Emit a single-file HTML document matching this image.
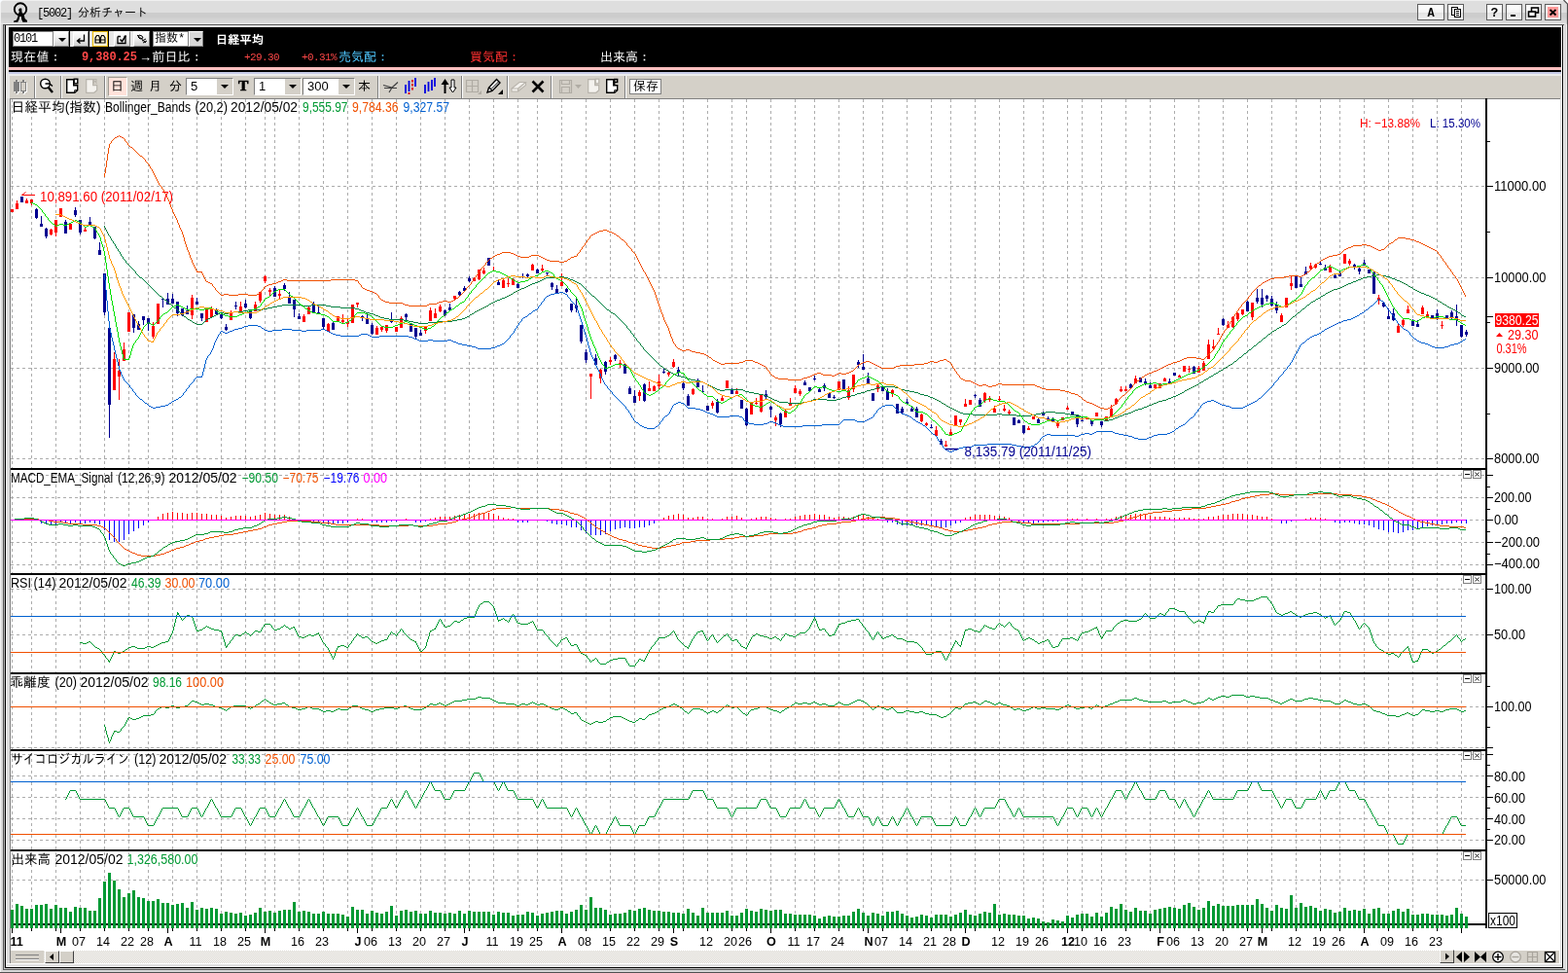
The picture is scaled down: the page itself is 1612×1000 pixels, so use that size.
<!DOCTYPE html>
<html lang="ja">
<head>
<meta charset="utf-8">
<title>[5002] 分析チャート</title>
<style>
*{box-sizing:border-box;margin:0;padding:0}
html,body{width:1612px;height:1000px;overflow:hidden;background:#d4d0c8}
body{position:relative;will-change:transform;font-family:"Liberation Sans","IPAGothic",sans-serif;font-size:12px;color:#000}
.abs{position:absolute}
#titlebar{left:0;top:0;width:1612px;height:25px;background:linear-gradient(#efefef 0,#efefef 1px,#dedede 1px,#dedede 13px,#cccccc 13px,#cccccc 17px,#dcdcdc 24px,#e8e8e8 24px,#e8e8e8 25px)}
#title{left:38px;top:7px;font-family:"Liberation Mono","IPAGothic",monospace;font-size:12px;letter-spacing:-1.2px;white-space:pre;line-height:14px}
#title span{letter-spacing:0}
.tb{top:4px;height:17px;width:17px;border:1px solid #5c5c5c;background:linear-gradient(#fff 0,#f4f4f4 50%,#e2e2e2 51%,#f0f0f0 100%);text-align:center;font-weight:bold;font-size:12px;line-height:15px;font-family:"Liberation Mono",monospace}
#frameL{left:0;top:25px;width:11px;height:975px;background:linear-gradient(90deg,#f0f0f0 0,#f0f0f0 1px,#d8d8d8 1px,#d8d8d8 3px,#555 3px,#555 4px,#b0b0b0 4px,#b0b0b0 5px,#000 5px,#000 6px,#f0f0f0 6px,#f0f0f0 7px,#dcdcdc 7px,#dcdcdc 10px,#808080 10px,#808080 11px)}
#frameR{left:1603px;top:25px;width:9px;height:975px;background:linear-gradient(90deg,#fff 0,#fff 1px,#e0e0e0 1px,#e0e0e0 2px,#fff 2px,#fff 3px,#000 3px,#000 4px,#f4f4f4 4px,#f4f4f4 5px,#d8d8d8 5px,#d8d8d8 7px,#f4f4f4 7px,#f4f4f4 8px,#585858 8px)}
#topline{left:3px;top:25px;width:1605px;height:1px;background:#555}
#topwhite{left:6px;top:26px;width:1600px;height:2px;background:#f2f2f2}
#black{left:9px;top:28px;width:1596px;height:46px;background:#000}
#pink{left:9px;top:69px;width:1596px;height:3px;background:#ffc0c0}
#blueline{left:9px;top:74px;width:1596px;height:4px;background:linear-gradient(#c8cce8 0,#c8cce8 2px,#ececec 2px)}
#toolbar{left:10px;top:78px;width:1595px;height:23px;background:#d4d0c8}
#chartbg{left:11px;top:102px;width:1592px;height:875px;background:#fff}
.hw{color:#fff;font-family:"Liberation Sans","IPAGothic",sans-serif;font-size:13px;line-height:14px;white-space:pre}
.inp{background:#fff;border:1px solid #808080;font-family:"Liberation Mono","IPAGothic",monospace;font-size:12px;line-height:14px;white-space:pre;overflow:hidden}
.btn{background:linear-gradient(#fff,#e8e8e8 60%,#d0d0d0);border:1px solid #fff;border-right-color:#808080;border-bottom-color:#808080}
.sepw{background:#e8e8e8;top:32px;height:16px;width:3px}
.tsep{top:78px;height:23px;width:2px;border-left:1px solid #808080;border-right:1px solid #fff}
.tj{top:81px;font-size:13px;line-height:16px;font-family:"Liberation Sans","IPAGothic",sans-serif}
.combo{top:80px;height:18px;background:#fff;border:1px solid #808080;border-right-color:#fff;border-bottom-color:#fff;font-size:13px;line-height:16px;padding-left:4px;font-family:"Liberation Sans",sans-serif}
.combo i{position:absolute;right:0;top:0;width:16px;height:16px;background:#d4d0c8}
.combo i:after,.dd:after{content:"";position:absolute;left:4px;top:6px;border:4px solid transparent;border-top:4px solid #000;border-bottom:0}
svg{position:absolute;left:0;top:0}
</style>
</head>
<body>
<div id="titlebar" class="abs"></div>
<svg class="abs" style="left:8px;top:0" width="30" height="26" viewBox="0 0 30 26"><circle cx="13" cy="9.500" r="6.200" fill="none" stroke="#000" stroke-width="1.900"/><path d="M12.100 8.500L14.300 8.500L14.500 12.500L16.600 15L17.600 19L19.900 21L19.900 22.800L15.400 22.800L14.200 20L13.700 16.800L12.400 16.800L11.600 20L10.300 22.800L5.900 22.800L6.200 21.600L9 20.500L10.400 17L10.700 14.500L11.900 12L11 10.200Z" fill="#000"/></svg>
<div id="title" class="abs">[5002] <span>分析チャート</span></div>
<div class="abs tb" style="left:1457px;width:28px;line-height:18px">A</div>
<div class="abs tb" style="left:1488px"><svg width="15" height="15" viewBox="0 0 15 15"><rect x="3.5" y="2.5" width="6" height="8" fill="#fff" stroke="#000"/><rect x="6.5" y="4.5" width="6" height="8" fill="#fff" stroke="#000"/><path d="M8 6.500h3M8 8.500h3M8 10.500h3" stroke="#000" shape-rendering="crispEdges"/></svg></div>
<div class="abs tb" style="left:1528px;line-height:18px;font-size:13px">?</div>
<div class="abs tb" style="left:1548px"><i style="position:absolute;left:4px;top:10px;width:5px;height:2px;background:#000"></i></div>
<div class="abs tb" style="left:1568px"><svg width="15" height="15" viewBox="0 0 15 15"><rect x="5.5" y="3" width="7" height="5" fill="none" stroke="#000" stroke-width="1.6"/><rect x="2.5" y="7" width="7" height="5" fill="#f4f4f4" stroke="#000" stroke-width="1.6"/></svg></div>
<div class="abs tb" style="left:1588px"><svg width="15" height="15" viewBox="0 0 15 15"><rect x="2" y="2" width="11" height="11" fill="#ff9a9a"/><path d="M4.5 5l6 5.5M10.5 5l-6 5.5" stroke="#000" stroke-width="1.8"/></svg></div>
<svg class="abs" style="left:0;top:0" width="1612" height="26" viewBox="0 0 1612 26"><rect x="0" y="0" width="1" height="26" fill="#f0f0f0"/><path d="M0 0h3l-3 3z" fill="#f8fbff"/><path d="M1608 0h4v4z" fill="#fff"/><path d="M1607.500 0L1611.500 4V26" fill="none" stroke="#505050" stroke-width="1.200"/></svg>
<div id="frameL" class="abs"></div>
<div id="frameR" class="abs"></div>
<div id="topline" class="abs"></div>
<div id="topwhite" class="abs"></div>
<div class="abs" style="left:6px;top:28px;width:4px;height:73px;background:#e8e8e8"></div>
<div class="abs" style="left:10px;top:101px;width:1594px;height:1px;background:#808080"></div>
<div id="black" class="abs"></div>
<div id="pink" class="abs"></div>
<div id="blueline" class="abs"></div>
<div id="toolbar" class="abs"></div>
<div id="chartbg" class="abs"></div>
<div class="abs inp" style="left:13px;top:32px;width:42px;height:16px;padding-left:0;letter-spacing:-1.2px">0101</div>
<div class="abs btn dd" style="left:55px;top:32px;width:16px;height:16px"></div>
<div class="abs sepw" style="left:72px"></div>
<div class="abs btn" style="left:75px;top:32px;width:16px;height:16px"><svg width="14" height="14" viewBox="0 0 14 14"><path d="M10.5 2.5v6.5h-6M6.5 6.5l-3 2.5l3 2.500" fill="none" stroke="#000" stroke-width="1.3"/></svg></div>
<div class="abs sepw" style="left:92px"></div>
<div class="abs" style="left:95px;top:32px;width:16px;height:16px;background:#fff6d8;border:1px solid #e8b800"><svg width="14" height="14" viewBox="0 0 14 14"><path d="M2 11V6l1.500-2.500h2L6.500 6v5zM7.500 11V6l1-2.500h2L12 6v5z" fill="none" stroke="#000" stroke-width="1.200"/><path d="M2 8h4.500M7.500 8H12" stroke="#000"/></svg></div>
<div class="abs sepw" style="left:112px;width:5px"></div>
<div class="abs btn" style="left:117px;top:32px;width:17px;height:16px"><svg width="15" height="14" viewBox="0 0 15 14"><path d="M3 4.500h3M3 4.500v7h8v-7h-1.500" fill="none" stroke="#000" stroke-width="1.300"/><path d="M5.500 7.500l2 2l4-6" fill="none" stroke="#000" stroke-width="1.500"/></svg></div>
<div class="abs sepw" style="left:134px"></div>
<div class="abs btn" style="left:137px;top:32px;width:17px;height:16px"><svg width="15" height="14" viewBox="0 0 15 14"><path d="M3 3l9 8M5 3l3 1l1 2l-3 1l-2-2zM8 9l4-2M9 11l4-2" fill="none" stroke="#000" stroke-width="1"/></svg></div>
<div class="abs inp" style="left:157px;top:32px;width:37px;height:16px;padding-left:1px;font-size:12px">指数*</div>
<div class="abs btn dd" style="left:194px;top:32px;width:15px;height:16px;background:#d8d8d8"></div>
<div class="abs hw" style="left:222px;top:34px;font-weight:bold;font-size:12px;letter-spacing:0.3px">日経平均</div>
<div class="abs hw" style="left:11px;top:52px;letter-spacing:0.2px">現在値：</div>
<div class="abs hw" style="left:84px;top:52px;color:#ff4848;font-weight:bold;font-family:'Liberation Mono',monospace;font-size:12px;letter-spacing:-0.1px">9,380.25</div>
<div class="abs hw" style="left:143px;top:52px;letter-spacing:0.2px">→前日比：</div>
<div class="abs hw" style="left:251px;top:52px;color:#ff4848;font-family:'Liberation Mono',monospace;font-size:11px;letter-spacing:-0.6px">+29.30</div>
<div class="abs hw" style="left:310px;top:52px;color:#ff4848;font-family:'Liberation Mono',monospace;font-size:11px;letter-spacing:-0.6px">+0.31%</div>
<div class="abs hw" style="left:348px;top:52px;color:#50c8ff">売気配：</div>
<div class="abs hw" style="left:483px;top:52px;color:#ff3030">買気配：</div>
<div class="abs hw" style="left:617px;top:52px">出来高：</div>

<svg class="abs" style="left:13px;top:80px" width="18" height="18" viewBox="0 0 18 18" shape-rendering="crispEdges"><rect x="4" y="3" width="2" height="14" fill="#fff"/><rect x="11" y="3" width="2" height="14" fill="#fff"/><rect x="2" y="5" width="6" height="10" fill="#fff"/><rect x="9" y="5" width="6" height="10" fill="#fff"/><rect x="3" y="2" width="2" height="14" fill="#808080"/><rect x="10" y="2" width="2" height="14" fill="#808080"/><rect x="1" y="4" width="6" height="10" fill="#808080"/><rect x="8" y="4" width="6" height="10" fill="#808080"/><rect x="9" y="5" width="4" height="8" fill="#d4d0c8"/></svg>
<div class="abs tsep" style="left:35px"></div>
<svg class="abs" style="left:40px;top:79px" width="17" height="19" viewBox="0 0 17 19"><circle cx="6.500" cy="7" r="4.800" fill="#fff" stroke="#000" stroke-width="1.400"/><path d="M6.500 7h4.500l3 2.500" fill="none" stroke="#000" stroke-width="1.300"/><path d="M9.500 10.500l4.500 5.500" stroke="#000" stroke-width="2.400"/></svg>
<div class="abs tsep" style="left:62px"></div>
<svg class="abs" style="left:67px;top:80px" width="15" height="17" viewBox="0 0 15 17"><path d="M1.700 1.700h7v6h4v5l-3 2.600h-8z" fill="#fff" stroke="#000" stroke-width="1.400"/><rect x="9.200" y="1.200" width="3.600" height="4.600" fill="#fff" stroke="#000" stroke-width="1.400"/><path d="M9.700 15.300v-2.600h3" fill="none" stroke="#000"/></svg>
<svg class="abs" style="left:87px;top:80px" width="15" height="17" viewBox="0 0 15 17"><path d="M1.700 1.700h7v6h4v5l-3 2.600h-8z" fill="#f4f2ee" stroke="#b8b4ac" stroke-width="1.200"/><path d="M9.500 6V1.500h2.500v2h-2.500M11 3.500l1.500 2.500" fill="none" stroke="#b8b4ac" stroke-width="1.100"/></svg>
<div class="abs tsep" style="left:107px"></div>
<div class="abs" style="left:111px;top:79px;width:20px;height:20px;background:#ffe2da;border:1px solid #fff;border-left-color:#a09c94;border-top-color:#a09c94"></div>
<div class="abs tj" style="left:114px">日</div>
<div class="abs tj" style="left:134px">週</div>
<div class="abs tj" style="left:153px">月</div>
<div class="abs tj" style="left:174px">分</div>
<div class="abs combo" style="left:191px;width:49px">5<i></i></div>
<div class="abs" style="left:245px;top:77px;font-family:'Liberation Serif',serif;font-weight:bold;font-size:15.5px;line-height:22px;-webkit-text-stroke:0.7px #000">T</div>
<div class="abs combo" style="left:261px;width:49px">1<i></i></div>
<div class="abs combo" style="left:311px;width:54px">300<i></i></div>
<div class="abs tj" style="left:368px">本</div>
<div class="abs tsep" style="left:388px"></div>
<svg class="abs" style="left:393px;top:80px" width="18" height="17" viewBox="0 0 18 17"><path d="M1 7.500l9 2.500l6-5.500M2 10.500h13M10 10l-3 5" fill="none" stroke="#404040" stroke-width="1.200"/></svg>
<svg class="abs" style="left:415px;top:79px" width="14" height="19" viewBox="0 0 14 19"><path d="M2 8v9M5.500 4v11M12 1v9" stroke="#0000e0" stroke-width="1.800"/><path d="M9 3v11" stroke="#e00000" stroke-width="1.800" stroke-dasharray="2.500 1.500"/><path d="M5.500 16v2" stroke="#e00000" stroke-width="1.800"/></svg>
<svg class="abs" style="left:435px;top:79px" width="14" height="19" viewBox="0 0 14 19"><path d="M2 8v9M5.500 5v10M9 3v11M12 1v9" stroke="#0000e0" stroke-width="1.800"/></svg>
<svg class="abs" style="left:453px;top:79px" width="17" height="19" viewBox="0 0 17 19"><path d="M4.500 17V5" stroke="#000" stroke-width="2"/><path d="M0.500 8l4-6l4 6z" fill="#000"/><path d="M11 3h3v8h2l-3.500 5l-3.500-5h2z" fill="#fff" stroke="#000" stroke-width="1"/></svg>
<div class="abs tsep" style="left:474px"></div>
<svg class="abs" style="left:478px;top:81px" width="18" height="17" viewBox="0 0 18 17"><path d="M1.500 1.500h12v12h-12zM7.500 1.500v12M1.500 7.500h12" fill="none" stroke="#b0aca4" stroke-width="1.200"/><path d="M17 12v4h-4z" fill="#b0aca4"/></svg>
<svg class="abs" style="left:499px;top:79px" width="19" height="19" viewBox="0 0 19 19"><path d="M2 16l1.500-5l8-8.500l3.500 3.500l-8 8.500zM4 11l3 3" fill="#fff" stroke="#000" stroke-width="1.400"/><path d="M6.500 12l7-7" stroke="#000"/><path d="M18 13v5h-5z" fill="#000"/></svg>
<div class="abs tsep" style="left:521px"></div>
<svg class="abs" style="left:525px;top:83px" width="17" height="13" viewBox="0 0 17 13"><path d="M1 8l8-6.500h6.500l-8 6.500zM1 8v3h6.500v-3M7.500 11l8-6.500v-3" fill="#f4f2ee" stroke="#b8b4ac" stroke-width="1.100"/></svg>
<svg class="abs" style="left:546px;top:82px" width="14" height="14" viewBox="0 0 14 14"><path d="M1.500 1.500l11 11M12.500 1.500l-11 11" stroke="#000" stroke-width="2.600"/></svg>
<div class="abs tsep" style="left:566px"></div>
<svg class="abs" style="left:574px;top:81px" width="26" height="16" viewBox="0 0 26 16"><path d="M1.500 1.500h12v13h-12zM3.500 1.500v4h8v-4M3.500 14.500v-6h8v6" fill="none" stroke="#b0aca4" stroke-width="1.200"/><path d="M17 6h7l-3.500 4z" fill="#b0aca4"/></svg>
<svg class="abs" style="left:603px;top:80px" width="15" height="17" viewBox="0 0 15 17"><path d="M1.700 1.700h7v6h4v5l-3 2.600h-8z" fill="#f4f2ee" stroke="#b8b4ac" stroke-width="1.200"/><rect x="9.200" y="1.200" width="3.600" height="4.600" fill="#f4f2ee" stroke="#b8b4ac" stroke-width="1.200"/></svg>
<svg class="abs" style="left:622px;top:80px" width="15" height="17" viewBox="0 0 15 17"><path d="M1.700 1.700h7v6h4v5l-3 2.600h-8z" fill="#fff" stroke="#000" stroke-width="1.400"/><path d="M9.700 7V1.500h3v3h-3" fill="none" stroke="#000" stroke-width="1.400"/><path d="M9.700 15.300v-2.600h3" fill="none" stroke="#000"/></svg>
<div class="abs tsep" style="left:642px"></div>
<div class="abs" style="left:647px;top:81px;width:33px;height:16px;background:#fff;border:1px solid #808080;font-size:13px;line-height:14px;padding-left:3px;font-family:'Liberation Sans','IPAGothic',sans-serif">保存</div>

<svg class="abs" width="1612" height="1000" viewBox="0 0 1612 1000" shape-rendering="crispEdges" style="left:0;top:0">
<path d="M12.5 102V949M32.5 102V949M57.5 102V949M82.5 102V949M107.5 102V949M132.5 102V949M152.5 102V949M177.5 102V949M202.5 102V949M227.5 102V949M252.5 102V949M272.5 102V949M282.5 102V949M307.5 102V949M332.5 102V949M357.5 102V949M382.5 102V949M407.5 102V949M432.5 102V949M457.5 102V949M482.5 102V949M507.5 102V949M532.5 102V949M552.5 102V949M577.5 102V949M602.5 102V949M627.5 102V949M652.5 102V949M677.5 102V949M702.5 102V949M727.5 102V949M752.5 102V949M767.5 102V949M792.5 102V949M817.5 102V949M837.5 102V949M862.5 102V949M887.5 102V949M907.5 102V949M932.5 102V949M957.5 102V949M977.5 102V949M1002.5 102V949M1027.5 102V949M1052.5 102V949M1072.5 102V949M1097.5 102V949M1112.5 102V949M1132.5 102V949M1157.5 102V949M1182.5 102V949M1207.5 102V949M1232.5 102V949M1257.5 102V949M1282.5 102V949M1307.5 102V949M1332.5 102V949M1357.5 102V949M1377.5 102V949M1402.5 102V949M1427.5 102V949M1452.5 102V949M1477.5 102V949M1502.5 102V949" stroke="#acacac" stroke-width="1" stroke-dasharray="3 3" fill="none"/>
<path d="M11 191.5H1527M11 285.5H1527M11 378.5H1527M11 471.5H1527M11 488.5H1527M11 511.5H1527M11 534.5H1527M11 557.5H1527M11 580.5H1527M11 605.5H1527M11 652.5H1527M11 726.5H1527M11 768.5H1527M11 775.5H1527M11 797.5H1527M11 819.5H1527M11 841.5H1527M11 863.5H1527M11 904.5H1527" stroke="#acacac" stroke-width="1" stroke-dasharray="3 3" fill="none"/>
<path d="M12 935V954M17 929V954M22 931V954M27 934V954M32 934V954M37 930V954M42 930V954M47 929V954M52 934V954M57 930V954M62 933V954M67 933V954M72 937V954M77 932V954M82 933V954M87 933V954M92 936V954M97 936V954M102 923V954M107 906V954M112 897V954M117 905V954M122 914V954M127 922V954M132 918V954M137 915V954M142 922V954M147 923V954M152 926V954M157 926V954M162 924V954M167 928V954M172 928V954M177 930V954M182 929V954M187 928V954M192 933V954M197 927V954M202 935V954M207 933V954M212 934V954M217 933V954M222 934V954M227 939V954M232 937V954M237 938V954M242 939V954M247 938V954M252 941V954M257 940V954M262 938V954M267 933V954M272 937V954M277 936V954M282 938V954M287 936V954M292 935V954M297 935V954M302 927V954M307 937V954M312 936V954M317 937V954M322 939V954M327 939V954M332 937V954M337 939V954M342 939V954M347 939V954M352 940V954M357 942V954M362 932V954M367 935V954M372 935V954M377 939V954M382 936V954M387 938V954M392 939V954M397 937V954M402 931V954M407 941V954M412 936V954M417 935V954M422 937V954M427 936V954M432 939V954M437 939V954M442 936V954M447 938V954M452 938V954M457 939V954M462 938V954M467 939V954M472 936V954M477 939V954M482 936V954M487 937V954M492 937V954M497 937V954M502 937V954M507 940V954M512 937V954M517 938V954M522 938V954M527 941V954M532 940V954M537 940V954M542 937V954M547 938V954M552 941V954M557 939V954M562 938V954M567 937V954M572 936V954M577 936V954M582 939V954M587 937V954M592 935V954M597 930V954M602 935V954M607 922V954M612 933V954M617 933V954M622 935V954M627 940V954M632 939V954M637 939V954M642 938V954M647 935V954M652 936V954M657 934V954M662 933V954M667 935V954M672 936V954M677 936V954M682 937V954M687 937V954M692 938V954M697 938V954M702 939V954M707 934V954M712 938V954M717 941V954M722 933V954M727 938V954M732 938V954M737 938V954M742 938V954M747 936V954M752 941V954M757 941V954M762 938V954M767 934V954M772 936V954M777 937V954M782 934V954M787 935V954M792 936V954M797 935V954M802 935V954M807 939V954M812 939V954M817 940V954M822 940V954M827 940V954M832 940V954M837 941V954M842 944V954M847 942V954M852 941V954M857 942V954M862 942V954M867 941V954M872 941V954M877 937V954M882 934V954M887 938V954M892 941V954M897 938V954M902 939V954M907 941V954M912 937V954M917 937V954M922 936V954M927 939V954M932 941V954M937 943V954M942 942V954M947 940V954M952 941V954M957 943V954M962 940V954M967 940V954M972 940V954M977 942V954M982 940V954M987 938V954M992 935V954M997 940V954M1002 941V954M1007 939V954M1012 937V954M1017 938V954M1022 929V954M1027 940V954M1032 939V954M1037 940V954M1042 940V954M1047 941V954M1052 941V954M1057 944V954M1062 943V954M1067 944V954M1072 947V954M1077 948V954M1082 945V954M1087 946V954M1092 947V954M1097 941V954M1102 943V954M1107 940V954M1112 939V954M1117 939V954M1122 942V954M1127 938V954M1132 942V954M1137 938V954M1142 932V954M1147 934V954M1152 929V954M1157 935V954M1162 937V954M1167 933V954M1172 936V954M1177 936V954M1182 939V954M1187 935V954M1192 934V954M1197 933V954M1202 932V954M1207 933V954M1212 934V954M1217 930V954M1222 928V954M1227 932V954M1232 935V954M1237 933V954M1242 926V954M1247 931V954M1252 929V954M1257 931V954M1262 931V954M1267 931V954M1272 930V954M1277 930V954M1282 930V954M1287 930V954M1292 924V954M1297 929V954M1302 933V954M1307 936V954M1312 930V954M1317 933V954M1322 934V954M1327 920V954M1332 933V954M1337 928V954M1342 932V954M1347 931V954M1352 933V954M1357 936V954M1362 934V954M1367 935V954M1372 938V954M1377 937V954M1382 933V954M1387 936V954M1392 935V954M1397 936V954M1402 934V954M1407 939V954M1412 934V954M1417 933V954M1422 939V954M1427 939V954M1432 936V954M1437 934V954M1442 937V954M1447 934V954M1452 940V954M1457 940V954M1462 939V954M1467 939V954M1472 940V954M1477 940V954M1482 940V954M1487 941V954M1492 940V954M1497 933V954M1502 939V954M1507 942V954" stroke="#009933" stroke-width="3" fill="none"/>
<rect x="11" y="481" width="1517" height="2" fill="#000"/>
<rect x="11" y="589" width="1517" height="2" fill="#000"/>
<rect x="11" y="691" width="1517" height="2" fill="#000"/>
<rect x="11" y="770" width="1517" height="2" fill="#000"/>
<rect x="11" y="873" width="1517" height="2" fill="#000"/>
<rect x="11" y="949" width="1517" height="2" fill="#000"/>
<rect x="1527" y="101" width="2" height="853" fill="#000"/>
<path d="M12.5 948V954M17.5 948V954M22.5 948V954M27.5 948V954M32.5 948V954M37.5 948V954M42.5 948V954M47.5 948V954M52.5 948V954M57.5 948V954M62.5 948V954M67.5 948V954M72.5 948V954M77.5 948V954M82.5 948V954M87.5 948V954M92.5 948V954M97.5 948V954M102.5 948V954M107.5 948V954M112.5 948V954M117.5 948V954M122.5 948V954M127.5 948V954M132.5 948V954M137.5 948V954M142.5 948V954M147.5 948V954M152.5 948V954M157.5 948V954M162.5 948V954M167.5 948V954M172.5 948V954M177.5 948V954M182.5 948V954M187.5 948V954M192.5 948V954M197.5 948V954M202.5 948V954M207.5 948V954M212.5 948V954M217.5 948V954M222.5 948V954M227.5 948V954M232.5 948V954M237.5 948V954M242.5 948V954M247.5 948V954M252.5 948V954M257.5 948V954M262.5 948V954M267.5 948V954M272.5 948V954M277.5 948V954M282.5 948V954M287.5 948V954M292.5 948V954M297.5 948V954M302.5 948V954M307.5 948V954M312.5 948V954M317.5 948V954M322.5 948V954M327.5 948V954M332.5 948V954M337.5 948V954M342.5 948V954M347.5 948V954M352.5 948V954M357.5 948V954M362.5 948V954M367.5 948V954M372.5 948V954M377.5 948V954M382.5 948V954M387.5 948V954M392.5 948V954M397.5 948V954M402.5 948V954M407.5 948V954M412.5 948V954M417.5 948V954M422.5 948V954M427.5 948V954M432.5 948V954M437.5 948V954M442.5 948V954M447.5 948V954M452.5 948V954M457.5 948V954M462.5 948V954M467.5 948V954M472.5 948V954M477.5 948V954M482.5 948V954M487.5 948V954M492.5 948V954M497.5 948V954M502.5 948V954M507.5 948V954M512.5 948V954M517.5 948V954M522.5 948V954M527.5 948V954M532.5 948V954M537.5 948V954M542.5 948V954M547.5 948V954M552.5 948V954M557.5 948V954M562.5 948V954M567.5 948V954M572.5 948V954M577.5 948V954M582.5 948V954M587.5 948V954M592.5 948V954M597.5 948V954M602.5 948V954M607.5 948V954M612.5 948V954M617.5 948V954M622.5 948V954M627.5 948V954M632.5 948V954M637.5 948V954M642.5 948V954M647.5 948V954M652.5 948V954M657.5 948V954M662.5 948V954M667.5 948V954M672.5 948V954M677.5 948V954M682.5 948V954M687.5 948V954M692.5 948V954M697.5 948V954M702.5 948V954M707.5 948V954M712.5 948V954M717.5 948V954M722.5 948V954M727.5 948V954M732.5 948V954M737.5 948V954M742.5 948V954M747.5 948V954M752.5 948V954M757.5 948V954M762.5 948V954M767.5 948V954M772.5 948V954M777.5 948V954M782.5 948V954M787.5 948V954M792.5 948V954M797.5 948V954M802.5 948V954M807.5 948V954M812.5 948V954M817.5 948V954M822.5 948V954M827.5 948V954M832.5 948V954M837.5 948V954M842.5 948V954M847.5 948V954M852.5 948V954M857.5 948V954M862.5 948V954M867.5 948V954M872.5 948V954M877.5 948V954M882.5 948V954M887.5 948V954M892.5 948V954M897.5 948V954M902.5 948V954M907.5 948V954M912.5 948V954M917.5 948V954M922.5 948V954M927.5 948V954M932.5 948V954M937.5 948V954M942.5 948V954M947.5 948V954M952.5 948V954M957.5 948V954M962.5 948V954M967.5 948V954M972.5 948V954M977.5 948V954M982.5 948V954M987.5 948V954M992.5 948V954M997.5 948V954M1002.5 948V954M1007.5 948V954M1012.5 948V954M1017.5 948V954M1022.5 948V954M1027.5 948V954M1032.5 948V954M1037.5 948V954M1042.5 948V954M1047.5 948V954M1052.5 948V954M1057.5 948V954M1062.5 948V954M1067.5 948V954M1072.5 948V954M1077.5 948V954M1082.5 948V954M1087.5 948V954M1092.5 948V954M1097.5 948V954M1102.5 948V954M1107.5 948V954M1112.5 948V954M1117.5 948V954M1122.5 948V954M1127.5 948V954M1132.5 948V954M1137.5 948V954M1142.5 948V954M1147.5 948V954M1152.5 948V954M1157.5 948V954M1162.5 948V954M1167.5 948V954M1172.5 948V954M1177.5 948V954M1182.5 948V954M1187.5 948V954M1192.5 948V954M1197.5 948V954M1202.5 948V954M1207.5 948V954M1212.5 948V954M1217.5 948V954M1222.5 948V954M1227.5 948V954M1232.5 948V954M1237.5 948V954M1242.5 948V954M1247.5 948V954M1252.5 948V954M1257.5 948V954M1262.5 948V954M1267.5 948V954M1272.5 948V954M1277.5 948V954M1282.5 948V954M1287.5 948V954M1292.5 948V954M1297.5 948V954M1302.5 948V954M1307.5 948V954M1312.5 948V954M1317.5 948V954M1322.5 948V954M1327.5 948V954M1332.5 948V954M1337.5 948V954M1342.5 948V954M1347.5 948V954M1352.5 948V954M1357.5 948V954M1362.5 948V954M1367.5 948V954M1372.5 948V954M1377.5 948V954M1382.5 948V954M1387.5 948V954M1392.5 948V954M1397.5 948V954M1402.5 948V954M1407.5 948V954M1412.5 948V954M1417.5 948V954M1422.5 948V954M1427.5 948V954M1432.5 948V954M1437.5 948V954M1442.5 948V954M1447.5 948V954M1452.5 948V954M1457.5 948V954M1462.5 948V954M1467.5 948V954M1472.5 948V954M1477.5 948V954M1482.5 948V954M1487.5 948V954M1492.5 948V954M1497.5 948V954M1502.5 948V954M1507.5 948V954" stroke="#009933" stroke-width="3" fill="none"/>
<path d="M1529 191.5H1535M1529 285.5H1535M1529 378.5H1535M1529 471.5H1535M1529 488.5H1535M1529 511.5H1535M1529 534.5H1535M1529 557.5H1535M1529 580.5H1535M1529 605.5H1535M1529 652.5H1535M1529 726.5H1535M1529 768.5H1535M1529 775.5H1535M1529 797.5H1535M1529 819.5H1535M1529 841.5H1535M1529 863.5H1535M1529 904.5H1535M1529 325.5H1535" stroke="#000" stroke-width="1" fill="none"/>
<path d="M1529 145.5H1532M1529 238.5H1532M1529 331.5H1532M1529 425.5H1532M1529 500.5H1532M1529 523.5H1532M1529 546.5H1532M1529 569.5H1532M1529 705.5H1532M1529 747.5H1532M1529 786.5H1532M1529 808.5H1532M1529 830.5H1532M1529 852.5H1532" stroke="#000" stroke-width="1" fill="none"/>
<path d="M12.5 954V959M1297.5 954V959M1307.5 954V957M32.5 954V957M1332.5 954V957M57.5 954V957M62.5 954V959M1357.5 954V957M82.5 954V957M1377.5 954V957M107.5 954V957M1402.5 954V959M132.5 954V957M1427.5 954V957M152.5 954V957M1452.5 954V957M177.5 954V957M172.5 954V959M1477.5 954V957M202.5 954V957M1502.5 954V959M227.5 954V957M252.5 954V957M272.5 954V959M282.5 954V957M307.5 954V957M332.5 954V957M357.5 954V957M367.5 954V959M382.5 954V957M407.5 954V957M432.5 954V957M457.5 954V957M477.5 954V959M482.5 954V957M507.5 954V957M532.5 954V957M552.5 954V957M577.5 954V959M602.5 954V957M627.5 954V957M652.5 954V957M677.5 954V957M692.5 954V959M702.5 954V957M727.5 954V957M752.5 954V957M767.5 954V957M792.5 954V959M817.5 954V957M837.5 954V957M862.5 954V957M887.5 954V957M892.5 954V959M907.5 954V957M932.5 954V957M957.5 954V957M977.5 954V957M992.5 954V959M1002.5 954V957M1027.5 954V957M1052.5 954V957M1072.5 954V957M1097.5 954V959M1112.5 954V957M1132.5 954V957M1157.5 954V957M1182.5 954V957M1192.5 954V959M1207.5 954V957M1232.5 954V957M1257.5 954V957M1282.5 954V957" stroke="#000" stroke-width="1" fill="none"/>
<g stroke="#808080" fill="#fff"><rect x="1504.500" y="483.5" width="8" height="8"/><rect x="1514.500" y="483.5" width="8" height="8"/></g>
<path d="M1506 487.5h5" stroke="#000"/>
<path d="M1516.500 485.5l4 4m0 -4l-4 4" stroke="#000" shape-rendering="auto" stroke-width="0.900"/>
<g stroke="#808080" fill="#fff"><rect x="1504.500" y="591.5" width="8" height="8"/><rect x="1514.500" y="591.5" width="8" height="8"/></g>
<path d="M1506 595.5h5" stroke="#000"/>
<path d="M1516.500 593.5l4 4m0 -4l-4 4" stroke="#000" shape-rendering="auto" stroke-width="0.900"/>
<g stroke="#808080" fill="#fff"><rect x="1504.500" y="693.5" width="8" height="8"/><rect x="1514.500" y="693.5" width="8" height="8"/></g>
<path d="M1506 697.5h5" stroke="#000"/>
<path d="M1516.500 695.5l4 4m0 -4l-4 4" stroke="#000" shape-rendering="auto" stroke-width="0.900"/>
<g stroke="#808080" fill="#fff"><rect x="1504.500" y="772.5" width="8" height="8"/><rect x="1514.500" y="772.5" width="8" height="8"/></g>
<path d="M1506 776.5h5" stroke="#000"/>
<path d="M1516.500 774.5l4 4m0 -4l-4 4" stroke="#000" shape-rendering="auto" stroke-width="0.900"/>
<g stroke="#808080" fill="#fff"><rect x="1504.500" y="875.5" width="8" height="8"/><rect x="1514.500" y="875.5" width="8" height="8"/></g>
<path d="M1506 879.5h5" stroke="#000"/>
<path d="M1516.500 877.5l4 4m0 -4l-4 4" stroke="#000" shape-rendering="auto" stroke-width="0.900"/>
</svg>
<svg class="abs" width="1612" height="1000" viewBox="0 0 1612 1000" style="left:0;top:0">
<path d="M42.5 534V538M47.5 534V539M52.5 534V540M57.5 534V539M62.5 534V537M67.5 534V538M72.5 534V538M77.5 534V537M82.5 534V538M87.5 534V538M92.5 534V537M97.5 534V538M102.5 534V539M107.5 534V545M112.5 534V555M117.5 534V557M122.5 534V557M127.5 534V555M132.5 534V549M137.5 534V546M142.5 534V543M147.5 534V540M152.5 534V537M307.5 534V536M312.5 534V537M317.5 534V537M322.5 534V537M327.5 534V537M332.5 534V538M337.5 534V539M342.5 534V539M347.5 534V538M352.5 534V538M357.5 534V537M382.5 534V537M387.5 534V537M392.5 534V537M397.5 534V537M402.5 534V536M407.5 534V536M427.5 534V537M432.5 534V537M437.5 534V536M532.5 534V537M537.5 534V537M542.5 534V537M562.5 534V536M567.5 534V538M572.5 534V539M577.5 534V539M582.5 534V540M587.5 534V542M592.5 534V542M597.5 534V545M602.5 534V548M607.5 534V550M612.5 534V550M617.5 534V550M622.5 534V549M627.5 534V546M632.5 534V544M637.5 534V543M642.5 534V542M647.5 534V543M652.5 534V543M657.5 534V542M662.5 534V542M667.5 534V540M672.5 534V538M912.5 534V537M917.5 534V537M922.5 534V539M927.5 534V540M932.5 534V540M937.5 534V540M942.5 534V540M947.5 534V540M952.5 534V540M957.5 534V541M962.5 534V541M967.5 534V542M972.5 534V542M977.5 534V540M982.5 534V538M987.5 534V537M1047.5 534V537M1052.5 534V538M1057.5 534V538M1062.5 534V538M1067.5 534V537M1072.5 534V537M1077.5 534V536M1082.5 534V536M1087.5 534V536M1317.5 534V538M1322.5 534V538M1327.5 534V536M1372.5 534V537M1377.5 534V538M1382.5 534V537M1387.5 534V537M1392.5 534V538M1397.5 534V539M1402.5 534V539M1407.5 534V540M1412.5 534V542M1417.5 534V544M1422.5 534V545M1427.5 534V547M1432.5 534V547M1437.5 534V548M1442.5 534V547M1447.5 534V545M1452.5 534V545M1457.5 534V544M1462.5 534V542M1467.5 534V541M1472.5 534V540M1477.5 534V539M1482.5 534V539M1487.5 534V538M1492.5 534V538M1497.5 534V537M1502.5 534V538M1507.5 534V538" stroke="#0000ff" stroke-width="1" shape-rendering="crispEdges"/>
<path d="M17.5 535V534M22.5 535V533M27.5 535V533M32.5 535V533M157.5 535V534M162.5 535V531M167.5 535V528M172.5 535V527M177.5 535V526M182.5 535V527M187.5 535V527M192.5 535V528M197.5 535V527M202.5 535V527M207.5 535V528M212.5 535V528M217.5 535V529M222.5 535V529M227.5 535V530M232.5 535V532M237.5 535V531M242.5 535V530M247.5 535V530M252.5 535V530M257.5 535V531M262.5 535V530M267.5 535V529M272.5 535V527M277.5 535V528M282.5 535V529M287.5 535V529M292.5 535V529M297.5 535V531M302.5 535V533M362.5 535V534M367.5 535V533M372.5 535V533M377.5 535V534M412.5 535V534M417.5 535V533M422.5 535V534M442.5 535V533M447.5 535V532M452.5 535V531M457.5 535V531M462.5 535V531M467.5 535V530M472.5 535V529M477.5 535V529M482.5 535V528M487.5 535V528M492.5 535V527M497.5 535V527M502.5 535V527M507.5 535V528M512.5 535V530M517.5 535V532M522.5 535V533M527.5 535V533M682.5 535V532M687.5 535V530M692.5 535V529M697.5 535V528M702.5 535V529M707.5 535V532M712.5 535V532M717.5 535V531M722.5 535V531M727.5 535V533M732.5 535V533M742.5 535V533M747.5 535V531M752.5 535V531M757.5 535V530M762.5 535V532M767.5 535V534M772.5 535V533M777.5 535V532M782.5 535V531M787.5 535V531M792.5 535V532M797.5 535V533M807.5 535V533M812.5 535V533M817.5 535V531M822.5 535V530M827.5 535V529M832.5 535V529M837.5 535V528M842.5 535V529M847.5 535V529M852.5 535V531M857.5 535V532M862.5 535V531M867.5 535V531M872.5 535V532M877.5 535V531M882.5 535V530M887.5 535V529M892.5 535V531M897.5 535V533M902.5 535V533M992.5 535V532M997.5 535V531M1002.5 535V529M1007.5 535V529M1012.5 535V529M1017.5 535V529M1022.5 535V530M1027.5 535V530M1032.5 535V531M1037.5 535V532M1097.5 535V533M1102.5 535V533M1107.5 535V533M1112.5 535V534M1117.5 535V533M1127.5 535V533M1137.5 535V533M1142.5 535V533M1147.5 535V531M1152.5 535V530M1157.5 535V529M1162.5 535V529M1167.5 535V528M1172.5 535V528M1177.5 535V529M1182.5 535V530M1187.5 535V531M1192.5 535V531M1197.5 535V531M1202.5 535V532M1207.5 535V532M1212.5 535V532M1217.5 535V532M1222.5 535V532M1227.5 535V533M1232.5 535V533M1237.5 535V533M1242.5 535V531M1247.5 535V531M1252.5 535V530M1257.5 535V529M1262.5 535V529M1267.5 535V528M1272.5 535V528M1277.5 535V528M1282.5 535V529M1287.5 535V529M1292.5 535V530M1297.5 535V531M1302.5 535V531M1307.5 535V533M1342.5 535V533M1347.5 535V532M1352.5 535V532M1357.5 535V532M1362.5 535V533" stroke="#ff0000" stroke-width="1" shape-rendering="crispEdges"/>
<path d="M12 534.5h5M17 534.5h5M22 534.5h3M25 533.5h2M27 533.5h5M32 533.5h5M37 533.5h3M40 534.5h2M42 534.5h5M47 534.5h3M50 535.5h2M52 535.5h3M55 536.5h2M57 536.5h5M62 536.5h3M65 537.5h2M67 537.5h3M70 538.5h2M72 538.5h5M77 538.5h5M82 538.5h3M85 539.5h2M87 539.5h5M92 539.5h5M97 539.5h3M100 540.5h2M102 540.5h2M104 541.5h2M106 542.5h1M107 542.5h1M108 543.5h1M109 544.5h1M110 545.5h1M111 546.5h1M112 547.5h1M113 548.5h1M114 549.5h1M115 550.5h1M116 551.5h1M117.5 552v1M118.5 553v1M119.5 554v2M120.5 556v1M121.5 557v1M122 558.5h1M123 559.5h1M124 560.5h1M125 561.5h1M126 562.5h1M127 563.5h1M128 564.5h2M130 565.5h2M132 566.5h2M134 567.5h2M136 568.5h1M137 568.5h2M139 569.5h2M141 570.5h1M142 570.5h3M145 571.5h2M147 571.5h5M152 571.5h5M157 571.5h3M160 570.5h2M162 570.5h3M165 569.5h2M167 569.5h2M169 568.5h2M171 567.5h1M172 567.5h2M174 566.5h2M176 565.5h1M177 565.5h2M179 564.5h2M181 563.5h1M182 563.5h3M185 562.5h2M187 562.5h2M189 561.5h2M191 560.5h1M192 560.5h2M194 559.5h2M196 558.5h1M197 558.5h2M199 557.5h2M201 556.5h1M202 556.5h3M205 555.5h2M207 555.5h2M209 554.5h2M211 553.5h1M212 553.5h3M215 552.5h2M217 552.5h3M220 551.5h2M222 551.5h3M225 550.5h2M227 550.5h3M230 549.5h2M232 549.5h5M237 549.5h3M240 548.5h2M242 548.5h3M245 547.5h2M247 547.5h3M250 546.5h2M252 546.5h3M255 545.5h2M257 545.5h3M260 544.5h2M262 544.5h3M265 543.5h2M267 543.5h2M269 542.5h2M271 541.5h1M272 541.5h2M274 540.5h2M276 539.5h1M277 539.5h3M280 538.5h2M282 538.5h3M285 537.5h2M287 537.5h3M290 536.5h2M292 536.5h3M295 535.5h2M297 535.5h5M302 535.5h5M307 535.5h5M312 535.5h5M317 535.5h3M320 536.5h2M322 536.5h5M327 536.5h3M330 537.5h2M332 537.5h5M337 537.5h3M340 538.5h2M342 538.5h3M345 539.5h2M347 539.5h5M352 539.5h5M357 539.5h5M362 539.5h5M367 539.5h5M372 539.5h5M377 539.5h5M382 539.5h5M387 539.5h3M390 540.5h2M392 540.5h5M397 540.5h5M402 540.5h5M407 540.5h5M412 540.5h5M417 540.5h3M420 539.5h2M422 539.5h3M425 540.5h2M427 540.5h5M432 540.5h5M437 540.5h5M442 540.5h3M445 539.5h2M447 539.5h3M450 538.5h2M452 538.5h5M457 538.5h3M460 537.5h2M462 537.5h3M465 536.5h2M467 536.5h2M469 535.5h2M471 534.5h1M472 534.5h3M475 533.5h2M477 533.5h3M480 532.5h2M482 532.5h2M484 531.5h2M486 530.5h1M487 530.5h2M489 529.5h2M491 528.5h1M492 528.5h3M495 527.5h2M497 527.5h2M499 526.5h2M501 525.5h1M502 525.5h2M504 524.5h2M506 523.5h1M507 523.5h3M510 522.5h2M512 522.5h5M517 522.5h5M522 522.5h3M525 521.5h2M527 521.5h3M530 522.5h2M532 522.5h5M537 522.5h5M542 522.5h5M547 522.5h5M552 522.5h5M557 522.5h5M562 522.5h3M565 523.5h2M567 523.5h5M572 523.5h3M575 524.5h2M577 524.5h3M580 525.5h2M582 525.5h2M584 526.5h2M586 527.5h1M587 527.5h3M590 528.5h2M592 528.5h2M594 529.5h2M596 530.5h1M597 530.5h1M598 531.5h2M600 532.5h2M602 533.5h1M603 534.5h1M604 535.5h2M606 536.5h1M607 537.5h1M608 538.5h1M609 539.5h2M611 540.5h1M612 541.5h1M613 542.5h2M615 543.5h2M617 544.5h1M618 545.5h2M620 546.5h2M622 547.5h1M623 548.5h2M625 549.5h2M627 550.5h2M629 551.5h2M631 552.5h1M632 552.5h2M634 553.5h2M636 554.5h1M637 554.5h3M640 555.5h2M642 555.5h2M644 556.5h2M646 557.5h1M647 557.5h3M650 558.5h2M652 558.5h2M654 559.5h2M656 560.5h1M657 560.5h3M660 561.5h2M662 561.5h3M665 562.5h2M667 562.5h3M670 563.5h2M672 563.5h5M677 563.5h3M680 562.5h2M682 562.5h3M685 561.5h2M687 561.5h3M690 560.5h2M692 560.5h3M695 559.5h2M697 559.5h2M699 558.5h2M701 557.5h1M702 557.5h5M707 557.5h3M710 556.5h2M712 556.5h3M715 555.5h2M717 555.5h5M722 555.5h5M727 555.5h3M730 554.5h2M732 554.5h5M737 554.5h5M742 554.5h3M745 553.5h2M747 553.5h5M752 553.5h3M755 552.5h2M757 552.5h3M760 551.5h2M762 551.5h5M767 551.5h5M772 551.5h3M775 550.5h2M777 550.5h5M782 550.5h3M785 549.5h2M787 549.5h3M790 548.5h2M792 548.5h5M797 548.5h5M802 548.5h5M807 548.5h5M812 548.5h3M815 547.5h2M817 547.5h3M820 546.5h2M822 546.5h2M824 545.5h2M826 544.5h1M827 544.5h3M830 543.5h2M832 543.5h3M835 542.5h2M837 542.5h2M839 541.5h2M841 540.5h1M842 540.5h3M845 539.5h2M847 539.5h3M850 538.5h2M852 538.5h5M857 538.5h3M860 537.5h2M862 537.5h3M865 536.5h2M867 536.5h5M872 536.5h3M875 535.5h2M877 535.5h3M880 534.5h2M882 534.5h3M885 533.5h2M887 533.5h3M890 532.5h2M892 532.5h5M897 532.5h3M900 531.5h2M902 531.5h5M907 531.5h3M910 532.5h2M912 532.5h5M917 532.5h3M920 533.5h2M922 533.5h3M925 534.5h2M927 534.5h3M930 535.5h2M932 535.5h3M935 536.5h2M937 536.5h3M940 537.5h2M942 537.5h3M945 538.5h2M947 538.5h3M950 539.5h2M952 539.5h3M955 540.5h2M957 540.5h3M960 541.5h2M962 541.5h3M965 542.5h2M967 542.5h2M969 543.5h2M971 544.5h1M972 544.5h3M975 545.5h2M977 545.5h3M980 546.5h2M982 546.5h5M987 546.5h3M990 545.5h2M992 545.5h3M995 544.5h2M997 544.5h3M1000 543.5h2M1002 543.5h3M1005 542.5h2M1007 542.5h3M1010 541.5h2M1012 541.5h2M1014 540.5h2M1016 539.5h1M1017 539.5h3M1020 538.5h2M1022 538.5h3M1025 537.5h2M1027 537.5h3M1030 536.5h2M1032 536.5h5M1037 536.5h5M1042 536.5h5M1047 536.5h3M1050 537.5h2M1052 537.5h5M1057 537.5h3M1060 538.5h2M1062 538.5h5M1067 538.5h5M1072 538.5h5M1077 538.5h5M1082 538.5h5M1087 538.5h5M1092 538.5h5M1097 538.5h5M1102 538.5h5M1107 538.5h3M1110 537.5h2M1112 537.5h5M1117 537.5h5M1122 537.5h5M1127 537.5h5M1132 537.5h5M1137 537.5h5M1142 537.5h3M1145 536.5h2M1147 536.5h3M1150 535.5h2M1152 535.5h3M1155 534.5h2M1157 534.5h2M1159 533.5h2M1161 532.5h1M1162 532.5h3M1165 531.5h2M1167 531.5h2M1169 530.5h2M1171 529.5h1M1172 529.5h3M1175 528.5h2M1177 528.5h3M1180 527.5h2M1182 527.5h3M1185 526.5h2M1187 526.5h5M1192 526.5h3M1195 525.5h2M1197 525.5h5M1202 525.5h3M1205 524.5h2M1207 524.5h5M1212 524.5h3M1215 523.5h2M1217 523.5h5M1222 523.5h3M1225 522.5h2M1227 522.5h5M1232 522.5h5M1237 522.5h3M1240 521.5h2M1242 521.5h3M1245 520.5h2M1247 520.5h3M1250 519.5h2M1252 519.5h3M1255 518.5h2M1257 518.5h3M1260 517.5h2M1262 517.5h2M1264 516.5h2M1266 515.5h1M1267 515.5h3M1270 514.5h2M1272 514.5h2M1274 513.5h2M1276 512.5h1M1277 512.5h3M1280 511.5h2M1282 511.5h3M1285 510.5h2M1287 510.5h3M1290 509.5h2M1292 509.5h3M1295 508.5h2M1297 508.5h5M1302 508.5h3M1305 507.5h2M1307 507.5h5M1312 507.5h3M1315 508.5h2M1317 508.5h5M1322 508.5h5M1327 508.5h5M1332 508.5h5M1337 508.5h5M1342 508.5h5M1347 508.5h3M1350 507.5h2M1352 507.5h5M1357 507.5h5M1362 507.5h5M1367 507.5h5M1372 507.5h3M1375 508.5h2M1377 508.5h5M1382 508.5h5M1387 508.5h3M1390 509.5h2M1392 509.5h5M1397 509.5h3M1400 510.5h2M1402 510.5h3M1405 511.5h2M1407 511.5h2M1409 512.5h2M1411 513.5h1M1412 513.5h2M1414 514.5h2M1416 515.5h1M1417 515.5h2M1419 516.5h2M1421 517.5h1M1422 517.5h2M1424 518.5h2M1426 519.5h1M1427 519.5h1M1428 520.5h2M1430 521.5h2M1432 522.5h1M1433 523.5h2M1435 524.5h2M1437 525.5h1M1438 526.5h2M1440 527.5h2M1442 528.5h2M1444 529.5h2M1446 530.5h1M1447 530.5h2M1449 531.5h2M1451 532.5h1M1452 532.5h1M1453 533.5h2M1455 534.5h2M1457 535.5h3M1460 536.5h2M1462 536.5h3M1465 537.5h2M1467 537.5h3M1470 538.5h2M1472 538.5h3M1475 539.5h2M1477 539.5h3M1480 540.5h2M1482 540.5h5M1487 540.5h3M1490 541.5h2M1492 541.5h5M1497 541.5h5M1502 541.5h3M1505 542.5h2" fill="none" stroke="#f05000" stroke-width="1" shape-rendering="crispEdges"/>
<path d="M12 534.5h3M15 533.5h2M17 533.5h5M22 533.5h3M25 532.5h2M27 532.5h5M32 532.5h3M35 533.5h2M37 533.5h2M39 534.5h2M41 535.5h1M42 535.5h1M43 536.5h2M45 537.5h2M47 538.5h3M50 539.5h2M52 539.5h5M57 539.5h3M60 538.5h2M62 538.5h3M65 539.5h2M67 539.5h3M70 540.5h2M72 540.5h3M75 539.5h2M77 539.5h3M80 540.5h2M82 540.5h5M87 540.5h5M92 540.5h3M95 541.5h2M97 541.5h1M98 542.5h2M100 543.5h2M102.5 544v1M103.5 545v2M104.5 547v1M105.5 548v1M106.5 549v2M107.5 551v2M108.5 553v3M109.5 556v3M110.5 559v3M111.5 562v3M112.5 565v1M112.5 566v1M113.5 567v2M114.5 569v1M115.5 570v1M116.5 571v2M117.5 573v1M118.5 574v1M119.5 575v2M120.5 577v1M121.5 578v1M122 579.5h2M124 580.5h2M126 581.5h1M127 581.5h2M129 580.5h2M131 579.5h1M132 579.5h3M135 578.5h2M137 578.5h3M140 577.5h2M142 577.5h1M143 576.5h2M145 575.5h2M147 574.5h2M149 573.5h2M151 572.5h1M152 572.5h3M155 571.5h2M157 571.5h1M158 570.5h1M159 569.5h2M161 568.5h1M162 567.5h1M163 566.5h1M164 565.5h2M166 564.5h1M167 563.5h1M168 562.5h2M170 561.5h2M172 560.5h1M173 559.5h2M175 558.5h2M177 557.5h3M180 556.5h2M182 556.5h3M185 555.5h2M187 555.5h3M190 554.5h2M192 554.5h1M193 553.5h2M195 552.5h2M197 551.5h2M199 550.5h2M201 549.5h1M202 549.5h5M207 549.5h3M210 548.5h2M212 548.5h2M214 547.5h2M216 546.5h1M217 546.5h5M222 546.5h5M227 546.5h3M230 547.5h2M232 547.5h3M235 546.5h2M237 546.5h2M239 545.5h2M241 544.5h1M242 544.5h3M245 543.5h2M247 543.5h3M250 542.5h2M252 542.5h5M257 542.5h2M259 541.5h2M261 540.5h1M262 540.5h2M264 539.5h2M266 538.5h1M267 538.5h1M268 537.5h1M269 536.5h2M271 535.5h1M272 534.5h3M275 533.5h2M277 533.5h5M282 533.5h3M285 532.5h2M287 532.5h3M290 531.5h2M292 531.5h3M295 532.5h2M297 532.5h3M300 533.5h2M302 533.5h2M304 534.5h2M306 535.5h1M307 535.5h3M310 536.5h2M312 536.5h5M317 536.5h3M320 537.5h2M322 537.5h5M327 537.5h2M329 538.5h2M331 539.5h1M332 539.5h3M335 540.5h2M337 540.5h3M340 541.5h2M342 541.5h5M347 541.5h5M352 541.5h5M357 541.5h2M359 540.5h2M361 539.5h1M362 539.5h2M364 538.5h2M366 537.5h1M367 537.5h3M370 538.5h2M372 538.5h5M377 538.5h2M379 539.5h2M381 540.5h1M382 540.5h5M387 540.5h3M390 541.5h2M392 541.5h5M397 541.5h3M400 540.5h2M402 540.5h5M407 540.5h3M410 539.5h2M412 539.5h5M417 539.5h5M422 539.5h3M425 540.5h2M427 540.5h3M430 541.5h2M432 541.5h3M435 540.5h2M437 540.5h2M439 539.5h2M441 538.5h1M442 538.5h3M445 537.5h2M447 537.5h2M449 536.5h2M451 535.5h1M452 535.5h5M457 535.5h3M460 534.5h2M462 534.5h1M463 533.5h2M465 532.5h2M467 531.5h3M470 530.5h2M472 530.5h2M474 529.5h2M476 528.5h1M477 528.5h2M479 527.5h2M481 526.5h1M482 526.5h2M484 525.5h2M486 524.5h1M487 524.5h1M488 523.5h2M490 522.5h2M492 521.5h3M495 520.5h2M497 520.5h2M499 519.5h2M501 518.5h1M502 518.5h5M507 518.5h3M510 519.5h2M512 519.5h5M517 519.5h3M520 520.5h2M522 520.5h3M525 521.5h2M527 521.5h3M530 522.5h2M532 522.5h3M535 523.5h2M537 523.5h5M542 523.5h3M545 522.5h2M547 522.5h5M552 522.5h5M557 522.5h5M562 522.5h2M564 523.5h2M566 524.5h1M567 524.5h1M568 525.5h2M570 526.5h2M572 527.5h5M577 527.5h2M579 528.5h2M581 529.5h1M582 529.5h1M583 530.5h2M585 531.5h2M587 532.5h1M588 533.5h2M590 534.5h2M592 535.5h1M593 536.5h1M594 537.5h1M595 538.5h1M596 539.5h1M597.5 540v1M598.5 541v1M599.5 542v2M600.5 544v1M601.5 545v1M602 546.5h1M603 547.5h1M604 548.5h1M605 549.5h1M606 550.5h1M607 551.5h1M608 552.5h1M609 553.5h2M611 554.5h1M612 555.5h1M613 556.5h2M615 557.5h2M617 558.5h2M619 559.5h2M621 560.5h1M622 560.5h5M627 560.5h5M632 560.5h5M637 560.5h3M640 561.5h2M642 561.5h2M644 562.5h2M646 563.5h1M647 563.5h1M648 564.5h2M650 565.5h2M652 566.5h5M657 566.5h3M660 567.5h2M662 567.5h3M665 566.5h2M667 566.5h3M670 565.5h2M672 565.5h2M674 564.5h2M676 563.5h1M677 563.5h1M678 562.5h2M680 561.5h2M682 560.5h2M684 559.5h2M686 558.5h1M687 558.5h1M688 557.5h1M689 556.5h2M691 555.5h1M692 554.5h3M695 553.5h2M697 553.5h5M702 553.5h3M705 554.5h2M707 554.5h5M712 554.5h3M715 553.5h2M717 553.5h3M720 552.5h2M722 552.5h2M724 553.5h2M726 554.5h1M727 554.5h5M732 554.5h5M737 554.5h3M740 553.5h2M742 553.5h1M743 552.5h2M745 551.5h2M747 550.5h3M750 549.5h2M752 549.5h3M755 548.5h2M757 548.5h3M760 549.5h2M762 549.5h2M764 550.5h2M766 551.5h1M767 551.5h3M770 550.5h2M772 550.5h3M775 549.5h2M777 549.5h2M779 548.5h2M781 547.5h1M782 547.5h3M785 546.5h2M787 546.5h5M792 546.5h3M795 547.5h2M797 547.5h3M800 548.5h2M802 548.5h3M805 547.5h2M807 547.5h3M810 546.5h2M812 546.5h1M813 545.5h2M815 544.5h2M817 543.5h2M819 542.5h2M821 541.5h1M822 541.5h2M824 540.5h2M826 539.5h1M827 539.5h3M830 538.5h2M832 538.5h2M834 537.5h2M836 536.5h1M837 536.5h3M840 535.5h2M842 535.5h5M847 535.5h5M852 535.5h5M857 535.5h3M860 534.5h2M862 534.5h3M865 533.5h2M867 533.5h5M872 533.5h3M875 532.5h2M877 532.5h1M878 531.5h2M880 530.5h2M882 529.5h3M885 528.5h2M887 528.5h3M890 529.5h2M892 529.5h2M894 530.5h2M896 531.5h1M897 531.5h5M902 531.5h3M905 532.5h2M907 532.5h3M910 533.5h2M912 533.5h5M917 533.5h1M918 534.5h2M920 535.5h2M922 536.5h2M924 537.5h2M926 538.5h1M927 538.5h5M932 538.5h3M935 539.5h2M937 539.5h2M939 540.5h2M941 541.5h1M942 541.5h3M945 542.5h2M947 542.5h3M950 543.5h2M952 543.5h2M954 544.5h2M956 545.5h1M957 545.5h3M960 546.5h2M962 546.5h2M964 547.5h2M966 548.5h1M967 548.5h2M969 549.5h2M971 550.5h1M972 550.5h5M977 550.5h2M979 549.5h2M981 548.5h1M982 548.5h2M984 547.5h2M986 546.5h1M987 546.5h2M989 545.5h2M991 544.5h1M992 544.5h1M993 543.5h2M995 542.5h2M997 541.5h1M998 540.5h2M1000 539.5h2M1002 538.5h3M1005 537.5h2M1007 537.5h2M1009 536.5h2M1011 535.5h1M1012 535.5h3M1015 534.5h2M1017 534.5h5M1022 534.5h3M1025 533.5h2M1027 533.5h5M1032 533.5h3M1035 534.5h2M1037 534.5h2M1039 535.5h2M1041 536.5h1M1042 536.5h3M1045 537.5h2M1047 537.5h2M1049 538.5h2M1051 539.5h1M1052 539.5h3M1055 540.5h2M1057 540.5h3M1060 539.5h2M1062 539.5h5M1067 539.5h5M1072 539.5h5M1077 539.5h5M1082 539.5h5M1087 539.5h3M1090 538.5h2M1092 538.5h3M1095 537.5h2M1097 537.5h3M1100 536.5h2M1102 536.5h3M1105 537.5h2M1107 537.5h5M1112 537.5h5M1117 537.5h5M1122 537.5h3M1125 536.5h2M1127 536.5h3M1130 537.5h2M1132 537.5h3M1135 536.5h2M1137 536.5h3M1140 535.5h2M1142 535.5h2M1144 534.5h2M1146 533.5h1M1147 533.5h2M1149 532.5h2M1151 531.5h1M1152 531.5h2M1154 530.5h2M1156 529.5h1M1157 529.5h2M1159 528.5h2M1161 527.5h1M1162 527.5h2M1164 526.5h2M1166 525.5h1M1167 525.5h3M1170 524.5h2M1172 524.5h3M1175 523.5h2M1177 523.5h5M1182 523.5h5M1187 523.5h5M1192 523.5h3M1195 522.5h2M1197 522.5h3M1200 523.5h2M1202 523.5h3M1205 522.5h2M1207 522.5h5M1212 522.5h3M1215 521.5h2M1217 521.5h5M1222 521.5h5M1227 521.5h5M1232 521.5h3M1235 520.5h2M1237 520.5h2M1239 519.5h2M1241 518.5h1M1242 518.5h3M1245 517.5h2M1247 517.5h2M1249 516.5h2M1251 515.5h1M1252 515.5h2M1254 514.5h2M1256 513.5h1M1257 513.5h2M1259 512.5h2M1261 511.5h1M1262 511.5h2M1264 510.5h2M1266 509.5h1M1267 509.5h3M1270 508.5h2M1272 508.5h3M1275 507.5h2M1277 507.5h3M1280 506.5h2M1282 506.5h3M1285 505.5h2M1287 505.5h5M1292 505.5h5M1297 505.5h5M1302 505.5h3M1305 506.5h2M1307 506.5h2M1309 507.5h2M1311 508.5h1M1312 508.5h2M1314 509.5h2M1316 510.5h1M1317 510.5h5M1322 510.5h3M1325 509.5h2M1327 509.5h3M1330 508.5h2M1332 508.5h5M1337 508.5h5M1342 508.5h2M1344 507.5h2M1346 506.5h1M1347 506.5h5M1352 506.5h3M1355 505.5h2M1357 505.5h3M1360 506.5h2M1362 506.5h5M1367 506.5h2M1369 507.5h2M1371 508.5h1M1372 508.5h2M1374 509.5h2M1376 510.5h1M1377 510.5h3M1380 509.5h2M1382 509.5h5M1387 509.5h2M1389 510.5h2M1391 511.5h1M1392 511.5h3M1395 512.5h2M1397 512.5h3M1400 513.5h2M1402 513.5h2M1404 514.5h2M1406 515.5h1M1407 515.5h1M1408 516.5h1M1409 517.5h2M1411 518.5h1M1412 519.5h1M1413 520.5h2M1415 521.5h2M1417 522.5h1M1418 523.5h1M1419 524.5h2M1421 525.5h1M1422 526.5h1M1423 527.5h1M1424 528.5h2M1426 529.5h1M1427 530.5h1M1428 531.5h1M1429 532.5h2M1431 533.5h1M1432 534.5h1M1433 535.5h2M1435 536.5h2M1437 537.5h2M1439 538.5h2M1441 539.5h1M1442 539.5h5M1447 539.5h2M1449 540.5h2M1451 541.5h1M1452 541.5h2M1454 542.5h2M1456 543.5h1M1457 543.5h3M1460 542.5h2M1462 542.5h5M1467 542.5h5M1472 542.5h5M1477 542.5h3M1480 543.5h2M1482 543.5h5M1487 543.5h3M1490 542.5h2M1492 542.5h5M1497 542.5h2M1499 543.5h2M1501 544.5h1M1502 544.5h5" fill="none" stroke="#009933" stroke-width="1" shape-rendering="crispEdges"/>
<path d="M11 534.500H1507" stroke="#ff00ff" stroke-width="1" shape-rendering="crispEdges"/>
<path d="M82 660.5h3M85 661.5h2M87 661.5h2M89 660.5h2M91 659.5h1M92 659.5h1M93 660.5h1M94 661.5h1M95 662.5h1M96 663.5h1M97 664.5h1M98 665.5h2M100 666.5h2M102.5 667v1M103.5 668v1M104.5 669v2M105.5 671v1M106.5 672v1M107.5 673v1M108.5 674v2M109.5 676v1M110.5 677v1M111.5 678v2M112.5 679v2M113.5 677v2M114.5 675v2M115.5 673v2M116.5 671v2M117.5 670v1M117 669.5h2M119 670.5h2M121 671.5h1M122 671.5h2M124 670.5h2M126 669.5h1M127 669.5h1M128 668.5h1M129 667.5h2M131 666.5h1M132 665.5h3M135 664.5h2M137 664.5h2M139 665.5h2M141 666.5h1M142 666.5h5M147 666.5h2M149 665.5h2M151 664.5h1M152 664.5h3M155 665.5h2M157 665.5h1M158 664.5h2M160 663.5h2M162 662.5h2M164 661.5h2M166 660.5h1M167 660.5h3M170 659.5h2M172.5 659v1M173.5 657v2M174.5 655v2M175.5 653v2M176.5 651v2M177.5 648v3M178.5 644v4M179.5 640v4M180.5 636v4M181.5 632v4M182.5 630v2M182.5 629v1M183.5 630v2M184.5 632v2M185.5 634v1M186.5 635v2M187 637.5h1M188 636.5h1M189 635.5h1M190 634.5h1M191 633.5h1M192 632.5h3M195 633.5h2M197.5 633v2M198.5 635v3M199.5 638v3M200.5 641v3M201.5 644v3M202.5 647v1M202 648.5h3M205 647.5h2M207 647.5h1M208 646.5h1M209 645.5h2M211 644.5h1M212 643.5h1M213 644.5h2M215 645.5h2M217 646.5h3M220 647.5h2M222 647.5h3M225 648.5h2M227.5 648v2M228.5 650v4M229.5 654v3M230.5 657v3M231.5 660v4M232.5 664v1M232.5 665v1M233.5 663v2M234.5 662v1M235.5 661v1M236.5 659v2M237.5 658v1M238.5 657v1M239.5 655v2M240.5 654v1M241.5 653v1M242 652.5h3M245 653.5h2M247 653.5h1M248 652.5h1M249 651.5h2M251 650.5h1M252 649.5h1M253 650.5h1M254 651.5h2M256 652.5h1M257 653.5h1M258 652.5h1M259 651.5h1M260 650.5h1M261 649.5h1M262 648.5h3M265 649.5h2M267.5 649v1M268.5 647v2M269.5 645v2M270.5 644v1M271.5 642v2M272 641.5h5M277.5 641v1M278.5 642v1M279.5 643v2M280.5 645v1M281.5 646v1M282 647.5h3M285 646.5h2M287 646.5h1M288 645.5h1M289 644.5h2M291 643.5h1M292 642.5h1M293 643.5h1M294 644.5h2M296 645.5h1M297 646.5h2M299 645.5h2M301 644.5h1M302.5 644v2M303.5 646v2M304.5 648v2M305.5 650v2M306.5 652v2M307 654.5h3M310 655.5h2M312 655.5h1M313 654.5h2M315 653.5h2M317 652.5h3M320 653.5h2M322 653.5h1M323 652.5h2M325 651.5h2M327.5 650v2M328.5 652v2M329.5 654v2M330.5 656v2M331.5 658v2M332.5 660v1M333.5 661v1M334.5 662v2M335.5 664v1M336.5 665v1M337.5 666v2M338.5 668v2M339.5 670v2M340.5 672v2M341.5 674v2M342.5 676v1M342.5 676v2M343.5 674v2M344.5 671v3M345.5 668v3M346.5 666v2M347.5 665v1M347 664.5h3M350 663.5h2M352 663.5h2M354 664.5h2M356 665.5h1M357.5 665v1M358.5 663v2M359.5 662v1M360.5 661v1M361.5 659v2M362.5 658v1M363.5 656v2M364.5 655v1M365.5 654v1M366.5 652v2M367 651.5h1M368 652.5h1M369 653.5h2M371 654.5h1M372 655.5h3M375 654.5h2M377 654.5h1M378 655.5h1M379 656.5h1M380 657.5h1M381 658.5h1M382 659.5h2M384 660.5h2M386 661.5h1M387 661.5h1M388 660.5h2M390 659.5h2M392 658.5h3M395 657.5h2M397.5 657v1M398.5 655v2M399.5 653v2M400.5 652v1M401.5 650v2M402 649.5h1M403 650.5h1M404 651.5h2M406 652.5h1M407.5 653v1M408.5 651v2M409.5 650v1M410.5 649v1M411.5 647v2M412.5 646v1M413.5 647v1M414.5 648v2M415.5 650v1M416.5 651v1M417 652.5h1M418 653.5h1M419 654.5h1M420 655.5h1M421 656.5h1M422 657.5h2M424 658.5h2M426 659.5h1M427.5 659v2M428.5 661v2M429.5 663v2M430.5 665v2M431.5 667v2M432.5 669v1M432 670.5h1M433 669.5h1M434 668.5h1M435 667.5h1M436 666.5h1M437.5 664v2M438.5 660v4M439.5 657v3M440.5 654v3M441.5 650v4M442.5 649v1M442 648.5h2M444 647.5h2M446 646.5h1M447.5 645v2M448.5 643v2M449.5 641v2M450.5 639v2M451.5 637v2M452.5 636v1M453.5 637v2M454.5 639v2M455.5 641v1M456.5 642v2M457 644.5h3M460 643.5h2M462 643.5h1M463 642.5h1M464 641.5h1M465 640.5h1M466 639.5h1M467 638.5h3M470 639.5h2M472 639.5h1M473 638.5h1M474 637.5h2M476 636.5h1M477 635.5h3M480 634.5h2M482 634.5h5M487.5 633v2M488.5 631v2M489.5 628v3M490.5 626v2M491.5 624v2M492.5 623v1M492 622.5h1M493 621.5h1M494 620.5h2M496 619.5h1M497 618.5h5M502 618.5h1M503 619.5h1M504 620.5h1M505 621.5h1M506 622.5h1M507.5 623v2M508.5 625v3M509.5 628v3M510.5 631v3M511.5 634v3M512.5 637v1M512 638.5h1M513 637.5h2M515 636.5h2M517 635.5h1M518 636.5h1M519 637.5h2M521 638.5h1M522.5 639v1M523.5 637v2M524.5 635v2M525.5 634v1M526.5 632v2M527.5 631v1M528.5 632v2M529.5 634v2M530.5 636v2M531.5 638v2M532 640.5h3M535 641.5h2M537 641.5h5M542 641.5h1M543 640.5h2M545 639.5h2M547.5 638v1M548.5 639v2M549.5 641v2M550.5 643v2M551.5 645v2M552 647.5h5M557.5 647v1M558.5 648v1M559.5 649v2M560.5 651v1M561.5 652v1M562.5 653v1M563.5 654v1M564.5 655v2M565.5 657v1M566.5 658v1M567 659.5h1M568 660.5h1M569 661.5h1M570 662.5h1M571 663.5h1M572.5 664v1M573.5 662v2M574.5 661v1M575.5 660v1M576.5 658v2M577 657.5h2M579 656.5h2M581 655.5h1M582.5 655v1M583.5 656v2M584.5 658v2M585.5 660v1M586.5 661v2M587 663.5h3M590 662.5h2M592.5 662v1M593.5 663v2M594.5 665v2M595.5 667v2M596.5 669v2M597 671.5h2M599 672.5h2M601 673.5h1M602.5 673v1M603.5 674v2M604.5 676v1M605.5 677v1M606.5 678v2M607 680.5h1M608 679.5h1M609 678.5h2M611 677.5h1M612.5 676v1M613.5 677v1M614.5 678v2M615.5 680v1M616.5 681v1M617 682.5h5M622 682.5h1M623 681.5h1M624 680.5h2M626 679.5h1M627 678.5h3M630 677.5h2M632 677.5h3M635 676.5h2M637 676.5h5M642.5 676v1M643.5 677v2M644.5 679v2M645.5 681v1M646.5 682v2M647 684.5h5M652.5 684v1M653.5 682v2M654.5 681v1M655.5 680v1M656.5 678v2M657 677.5h2M659 678.5h2M661 679.5h1M662.5 678v2M663.5 676v2M664.5 674v2M665.5 672v2M666.5 670v2M667.5 669v1M667.5 668v1M668.5 667v1M669.5 665v2M670.5 664v1M671.5 663v1M672.5 662v1M673.5 660v2M674.5 659v1M675.5 658v1M676.5 656v2M677 655.5h5M682 655.5h2M684 654.5h2M686 653.5h1M687 653.5h1M688 652.5h1M689 651.5h1M690 650.5h1M691 649.5h1M692.5 648v1M693.5 649v2M694.5 651v2M695.5 653v2M696.5 655v2M697 657.5h1M698 658.5h1M699 659.5h1M700 660.5h1M701 661.5h1M702 662.5h1M703 663.5h1M704 664.5h2M706 665.5h1M707.5 665v2M708.5 663v2M709.5 661v2M710.5 659v2M711.5 657v2M712.5 656v1M713.5 654v2M714.5 653v1M715.5 652v1M716.5 650v2M717 649.5h3M720 648.5h2M722.5 648v2M723.5 650v2M724.5 652v2M725.5 654v2M726.5 656v2M727.5 658v1M728.5 657v1M729.5 655v2M730.5 654v1M731.5 653v1M732.5 652v1M733.5 653v2M734.5 655v2M735.5 657v1M736.5 658v2M737 660.5h1M738 659.5h1M739 658.5h1M740 657.5h1M741 656.5h1M742 655.5h1M743 654.5h1M744 653.5h2M746 652.5h1M747.5 651v1M748.5 652v2M749.5 654v1M750.5 655v1M751.5 656v2M752 658.5h3M755 657.5h2M757.5 657v1M758.5 658v2M759.5 660v1M760.5 661v1M761.5 662v2M762 664.5h2M764 665.5h2M766 666.5h1M767.5 665v2M768.5 663v2M769.5 661v2M770.5 659v2M771.5 657v2M772.5 656v1M772 655.5h1M773 654.5h1M774 653.5h2M776 652.5h1M777 651.5h2M779 652.5h2M781 653.5h1M782 653.5h3M785 654.5h2M787 654.5h2M789 655.5h2M791 656.5h1M792 656.5h2M794 655.5h2M796 654.5h1M797 654.5h1M798 655.5h1M799 656.5h2M801 657.5h1M802.5 658v1M803.5 656v2M804.5 655v1M805.5 654v1M806.5 652v2M807 651.5h2M809 652.5h2M811 653.5h1M812 653.5h3M815 654.5h2M817 654.5h1M818 653.5h1M819 652.5h2M821 651.5h1M822 650.5h5M827 650.5h1M828 649.5h1M829 648.5h1M830 647.5h1M831 646.5h1M832.5 644v2M833.5 642v2M834.5 640v2M835.5 638v2M836.5 636v2M837.5 635v1M837.5 634v2M838.5 636v2M839.5 638v3M840.5 641v3M841.5 644v2M842.5 646v1M842 647.5h3M845 646.5h2M847.5 646v1M848.5 647v2M849.5 649v1M850.5 650v1M851.5 651v2M852 653.5h3M855 652.5h2M857.5 651v2M858.5 649v2M859.5 647v2M860.5 645v2M861.5 643v2M862.5 642v1M862 641.5h3M865 640.5h2M867 640.5h2M869 639.5h2M871 638.5h1M872 638.5h3M875 637.5h2M877 637.5h3M880 636.5h2M882.5 636v1M883.5 637v2M884.5 639v1M885.5 640v1M886.5 641v2M887.5 643v1M888.5 644v1M889.5 645v2M890.5 647v1M891.5 648v1M892.5 649v1M893.5 650v2M894.5 652v2M895.5 654v1M896.5 655v2M897.5 657v1M898.5 655v2M899.5 653v2M900.5 652v1M901.5 650v2M902.5 649v1M903.5 650v2M904.5 652v1M905.5 653v1M906.5 654v2M907 656.5h2M909 655.5h2M911 654.5h1M912 654.5h2M914 653.5h2M916 652.5h1M917 652.5h1M918 653.5h1M919 654.5h2M921 655.5h1M922 656.5h5M927 656.5h1M928 657.5h2M930 658.5h2M932 659.5h5M937 659.5h3M940 660.5h2M942 660.5h1M943 661.5h1M944 662.5h1M945 663.5h1M946 664.5h1M947.5 665v1M948.5 666v2M949.5 668v1M950.5 669v1M951.5 670v2M952 672.5h5M957 672.5h1M958 671.5h2M960 670.5h2M962 669.5h5M967.5 669v1M968.5 670v2M969.5 672v2M970.5 674v2M971.5 676v2M972.5 678v1M973.5 676v2M974.5 674v2M975.5 672v2M976.5 670v2M977.5 668v2M978.5 666v2M979.5 664v2M980.5 662v2M981.5 660v2M982.5 659v1M982.5 658v1M983.5 659v1M984.5 660v2M985.5 662v1M986.5 663v1M987.5 663v2M988.5 659v4M989.5 656v3M990.5 653v3M991.5 649v4M992.5 648v1M992 647.5h3M995 646.5h2M997 646.5h2M999 647.5h2M1001 648.5h1M1002 648.5h3M1005 649.5h2M1007.5 649v1M1008.5 647v2M1009.5 646v1M1010.5 645v1M1011.5 643v2M1012 642.5h1M1013 643.5h2M1015 644.5h2M1017 645.5h3M1020 646.5h2M1022.5 646v1M1023.5 645v1M1024.5 643v2M1025.5 642v1M1026.5 641v1M1027 640.5h1M1028 641.5h1M1029 642.5h2M1031 643.5h1M1032 644.5h1M1033 643.5h1M1034 642.5h1M1035 641.5h1M1036 640.5h1M1037.5 639v1M1038.5 640v1M1039.5 641v2M1040.5 643v1M1041.5 644v1M1042 645.5h1M1043 646.5h2M1045 647.5h2M1047.5 648v2M1048.5 650v2M1049.5 652v2M1050.5 654v2M1051.5 656v2M1052 658.5h1M1053 657.5h2M1055 656.5h2M1057 655.5h2M1059 656.5h2M1061 657.5h1M1062 657.5h1M1063 658.5h1M1064 659.5h2M1066 660.5h1M1067 661.5h2M1069 660.5h2M1071 659.5h1M1072 659.5h2M1074 658.5h2M1076 657.5h1M1077.5 657v1M1078.5 658v2M1079.5 660v2M1080.5 662v1M1081.5 663v2M1082 665.5h3M1085 664.5h2M1087.5 664v1M1088.5 662v2M1089.5 660v2M1090.5 659v1M1091.5 657v2M1092 656.5h5M1097 656.5h3M1100 655.5h2M1102 655.5h1M1103 656.5h2M1105 657.5h2M1107.5 658v1M1108.5 656v2M1109.5 654v2M1110.5 653v1M1111.5 651v2M1112 650.5h3M1115 649.5h2M1117 649.5h2M1119 648.5h2M1121 647.5h1M1122 647.5h1M1123 646.5h2M1125 645.5h2M1127.5 644v2M1128.5 646v2M1129.5 648v3M1130.5 651v2M1131.5 653v2M1132.5 655v1M1132.5 656v1M1133.5 654v2M1134.5 652v2M1135.5 651v1M1136.5 649v2M1137 648.5h5M1142.5 648v1M1143.5 647v1M1144.5 645v2M1145.5 644v1M1146.5 643v1M1147 642.5h1M1148 641.5h1M1149 640.5h2M1151 639.5h1M1152 638.5h3M1155 637.5h2M1157 637.5h3M1160 638.5h2M1162 638.5h5M1167 638.5h2M1169 637.5h2M1171 636.5h1M1172.5 636v1M1173.5 635v1M1174.5 633v2M1175.5 632v1M1176.5 631v1M1177 630.5h1M1178 631.5h1M1179 632.5h1M1180 633.5h1M1181 634.5h1M1182 635.5h5M1187 635.5h1M1188 634.5h1M1189 633.5h1M1190 632.5h1M1191 631.5h1M1192 630.5h2M1194 631.5h2M1196 632.5h1M1197.5 632v1M1198.5 630v2M1199.5 629v1M1200.5 628v1M1201.5 626v2M1202 625.5h5M1207 625.5h1M1208 626.5h2M1210 627.5h2M1212 628.5h5M1217.5 628v1M1218.5 629v2M1219.5 631v1M1220.5 632v1M1221.5 633v2M1222 635.5h1M1223 636.5h1M1224 637.5h1M1225 638.5h1M1226 639.5h1M1227 640.5h1M1228 639.5h2M1230 638.5h2M1232 637.5h1M1233 638.5h2M1235 639.5h2M1237.5 639v2M1238.5 637v2M1239.5 634v3M1240.5 632v2M1241.5 630v2M1242.5 629v1M1242 628.5h3M1245 629.5h2M1247.5 629v1M1248.5 627v2M1249.5 626v1M1250.5 625v1M1251.5 623v2M1252 622.5h3M1255 621.5h2M1257 621.5h5M1262 621.5h5M1267.5 621v1M1268.5 620v1M1269.5 618v2M1270.5 617v1M1271.5 616v1M1272 615.5h3M1275 616.5h2M1277 616.5h3M1280 617.5h2M1282 617.5h5M1287 617.5h2M1289 616.5h2M1291 615.5h1M1292 615.5h2M1294 614.5h2M1296 613.5h1M1297 613.5h5M1302.5 613v1M1303.5 614v2M1304.5 616v1M1305.5 617v1M1306.5 618v2M1307.5 620v1M1308.5 621v2M1309.5 623v2M1310.5 625v2M1311.5 627v2M1312 629.5h1M1313 630.5h2M1315 631.5h2M1317 632.5h2M1319 631.5h2M1321 630.5h1M1322 630.5h2M1324 629.5h2M1326 628.5h1M1327 628.5h1M1328 629.5h1M1329 630.5h2M1331 631.5h1M1332 632.5h2M1334 633.5h2M1336 634.5h1M1337 634.5h1M1338 633.5h2M1340 632.5h2M1342 631.5h3M1345 630.5h2M1347 630.5h3M1350 629.5h2M1352 629.5h2M1354 630.5h2M1356 631.5h1M1357 631.5h1M1358 632.5h1M1359 633.5h2M1361 634.5h1M1362 635.5h1M1363 634.5h2M1365 633.5h2M1367.5 632v2M1368.5 634v2M1369.5 636v2M1370.5 638v2M1371.5 640v2M1372 642.5h1M1373 641.5h1M1374 640.5h1M1375 639.5h1M1376 638.5h1M1377.5 637v1M1378.5 635v2M1379.5 633v2M1380.5 631v2M1381.5 629v2M1382 628.5h3M1385 629.5h2M1387.5 629v1M1388.5 630v2M1389.5 632v2M1390.5 634v1M1391.5 635v2M1392.5 637v1M1393.5 638v2M1394.5 640v2M1395.5 642v2M1396.5 644v2M1397.5 646v1M1398.5 645v1M1399.5 643v2M1400.5 642v1M1401.5 641v1M1402 640.5h1M1403 641.5h1M1404 642.5h1M1405 643.5h1M1406 644.5h1M1407.5 645v2M1408.5 647v3M1409.5 650v3M1410.5 653v3M1411.5 656v3M1412.5 659v1M1412.5 660v1M1413.5 661v1M1414.5 662v2M1415.5 664v1M1416.5 665v1M1417 666.5h1M1418 667.5h2M1420 668.5h2M1422 669.5h1M1423 670.5h2M1425 671.5h2M1427 672.5h3M1430 671.5h2M1432 671.5h1M1433 672.5h1M1434 673.5h2M1436 674.5h1M1437.5 675v1M1438.5 674v1M1439.5 672v2M1440.5 671v1M1441.5 670v1M1442 669.5h1M1443 668.5h1M1444 667.5h1M1445 666.5h1M1446 665.5h1M1447.5 664v2M1448.5 666v3M1449.5 669v4M1450.5 673v3M1451.5 676v3M1452.5 679v1M1452 680.5h3M1455 679.5h2M1457.5 678v2M1458.5 676v2M1459.5 673v3M1460.5 671v2M1461.5 669v2M1462.5 668v1M1462 667.5h5M1467 667.5h1M1468 668.5h1M1469 669.5h2M1471 670.5h1M1472 671.5h2M1474 670.5h2M1476 669.5h1M1477 669.5h1M1478 668.5h1M1479 667.5h2M1481 666.5h1M1482 665.5h1M1483 664.5h1M1484 663.5h2M1486 662.5h1M1487 661.5h1M1488 660.5h1M1489 659.5h2M1491 658.5h1M1492 657.5h1M1493 656.5h1M1494 655.5h1M1495 654.5h1M1496 653.5h1M1497.5 652v1M1498.5 653v2M1499.5 655v1M1500.5 656v1M1501.5 657v2M1502 659.5h1M1503 658.5h1M1504 657.5h2M1506 656.5h1" fill="none" stroke="#009933" stroke-width="1" shape-rendering="crispEdges"/>
<path d="M11 633.500H1507" stroke="#0060d0" stroke-width="1" shape-rendering="crispEdges"/><path d="M11 670.500H1507" stroke="#f05000" stroke-width="1" shape-rendering="crispEdges"/>
<path d="M107.5 745v2M108.5 747v4M109.5 751v4M110.5 755v3M111.5 758v4M112.5 762v1M112.5 762v2M113.5 760v2M114.5 757v3M115.5 755v2M116.5 753v2M117.5 752v1M117 751.5h3M120 752.5h2M122.5 752v1M123.5 751v1M124.5 749v2M125.5 748v1M126.5 747v1M127.5 746v1M128.5 744v2M129.5 742v2M130.5 740v2M131.5 738v2M132 737.5h2M134 738.5h2M136 739.5h1M137 739.5h3M140 738.5h2M142 738.5h1M143 737.5h2M145 736.5h2M147 735.5h5M152 735.5h3M155 734.5h2M157.5 734v1M158.5 733v1M159.5 731v2M160.5 730v1M161.5 729v1M162 728.5h2M164 727.5h2M166 726.5h1M167 726.5h3M170 727.5h2M172 727.5h2M174 726.5h2M176 725.5h1M177 725.5h2M179 726.5h2M181 727.5h1M182 727.5h3M185 726.5h2M187 726.5h3M190 725.5h2M192 725.5h1M193 724.5h1M194 723.5h1M195 722.5h1M196 721.5h1M197 720.5h3M200 721.5h2M202 721.5h1M203 722.5h2M205 723.5h2M207 724.5h3M210 723.5h2M212 723.5h3M215 724.5h2M217 724.5h2M219 725.5h2M221 726.5h1M222 726.5h3M225 727.5h2M227 727.5h1M228 728.5h2M230 729.5h2M232 730.5h1M233 729.5h1M234 728.5h2M236 727.5h1M237 726.5h3M240 725.5h2M242 725.5h5M247 725.5h5M252 725.5h1M253 726.5h2M255 727.5h2M257 728.5h1M258 727.5h2M260 726.5h2M262 725.5h1M263 724.5h2M265 723.5h2M267 722.5h1M268 721.5h1M269 720.5h2M271 719.5h1M272 718.5h1M273 719.5h1M274 720.5h2M276 721.5h1M277 722.5h2M279 723.5h2M281 724.5h1M282 724.5h3M285 723.5h2M287 723.5h3M290 722.5h2M292 722.5h1M293 723.5h1M294 724.5h2M296 725.5h1M297 726.5h3M300 727.5h2M302 727.5h2M304 728.5h2M306 729.5h1M307 729.5h3M310 728.5h2M312 728.5h2M314 727.5h2M316 726.5h1M317 726.5h2M319 727.5h2M321 728.5h1M322 728.5h5M327 728.5h1M328 729.5h2M330 730.5h2M332 731.5h3M335 730.5h2M337 730.5h3M340 731.5h2M342 731.5h1M343 730.5h2M345 729.5h2M347 728.5h3M350 729.5h2M352 729.5h5M357 729.5h1M358 728.5h1M359 727.5h2M361 726.5h1M362 725.5h5M367 725.5h1M368 726.5h2M370 727.5h2M372 728.5h3M375 729.5h2M377 729.5h2M379 730.5h2M381 731.5h1M382 731.5h2M384 730.5h2M386 729.5h1M387 729.5h3M390 728.5h2M392 728.5h3M395 727.5h2M397 727.5h5M402 727.5h3M405 728.5h2M407 728.5h2M409 727.5h2M411 726.5h1M412 726.5h3M415 725.5h2M417 725.5h1M418 726.5h2M420 727.5h2M422 728.5h3M425 729.5h2M427 729.5h5M432 729.5h2M434 728.5h2M436 727.5h1M437 727.5h1M438 726.5h1M439 725.5h2M441 724.5h1M442 723.5h3M445 724.5h2M447 724.5h2M449 723.5h2M451 722.5h1M452 722.5h1M453 723.5h2M455 724.5h2M457 725.5h2M459 724.5h2M461 723.5h1M462 723.5h1M463 722.5h2M465 721.5h2M467 720.5h5M472 720.5h3M475 719.5h2M477 719.5h3M480 718.5h2M482 718.5h5M487 718.5h2M489 717.5h2M491 716.5h1M492 716.5h3M495 717.5h2M497 717.5h5M502 717.5h2M504 718.5h2M506 719.5h1M507 719.5h1M508 720.5h2M510 721.5h2M512 722.5h5M517 722.5h3M520 723.5h2M522 723.5h5M527 723.5h2M529 724.5h2M531 725.5h1M532 725.5h2M534 724.5h2M536 723.5h1M537 723.5h3M540 724.5h2M542 724.5h1M543 723.5h2M545 722.5h2M547 721.5h1M548 722.5h2M550 723.5h2M552 724.5h3M555 723.5h2M557 723.5h2M559 724.5h2M561 725.5h1M562 725.5h1M563 726.5h2M565 727.5h2M567 728.5h3M570 729.5h2M572 729.5h2M574 728.5h2M576 727.5h1M577 727.5h2M579 728.5h2M581 729.5h1M582 729.5h1M583 730.5h1M584 731.5h2M586 732.5h1M587 733.5h3M590 732.5h2M592.5 732v1M593.5 733v2M594.5 735v1M595.5 736v1M596.5 737v2M597 739.5h1M598 740.5h2M600 741.5h2M602 742.5h2M604 743.5h2M606 744.5h1M607 744.5h1M608 743.5h2M610 742.5h2M612 741.5h3M615 742.5h2M617 742.5h3M620 741.5h2M622 741.5h1M623 740.5h1M624 739.5h2M626 738.5h1M627 737.5h3M630 736.5h2M632 736.5h5M637 736.5h2M639 737.5h2M641 738.5h1M642 738.5h1M643 739.5h2M645 740.5h2M647 741.5h3M650 742.5h2M652 742.5h1M653 741.5h1M654 740.5h2M656 739.5h1M657 738.5h3M660 739.5h2M662 739.5h1M663 738.5h1M664 737.5h1M665 736.5h1M666 735.5h1M667 734.5h3M670 733.5h2M672 733.5h1M673 732.5h2M675 731.5h2M677 730.5h1M678 729.5h2M680 728.5h2M682 727.5h3M685 726.5h2M687 726.5h1M688 725.5h2M690 724.5h2M692 723.5h2M694 724.5h2M696 725.5h1M697 725.5h1M698 726.5h1M699 727.5h2M701 728.5h1M702 729.5h1M703 730.5h1M704 731.5h2M706 732.5h1M707 733.5h1M708 732.5h1M709 731.5h1M710 730.5h1M711 729.5h1M712 728.5h5M717 728.5h3M720 729.5h2M722 729.5h1M723 730.5h1M724 731.5h2M726 732.5h1M727 733.5h1M728 732.5h2M730 731.5h2M732 730.5h2M734 731.5h2M736 732.5h1M737 732.5h1M738 731.5h1M739 730.5h2M741 729.5h1M742 728.5h1M743 727.5h1M744 726.5h2M746 725.5h1M747 724.5h1M748 725.5h2M750 726.5h2M752 727.5h3M755 726.5h2M757 726.5h1M758 727.5h1M759 728.5h1M760 729.5h1M761 730.5h1M762 731.5h1M763 732.5h1M764 733.5h2M766 734.5h1M767.5 735v1M768.5 734v1M769.5 732v2M770.5 731v1M771.5 730v1M772 729.5h3M775 728.5h2M777 728.5h2M779 727.5h2M781 726.5h1M782 726.5h5M787 726.5h1M788 727.5h2M790 728.5h2M792 729.5h3M795 730.5h2M797 730.5h2M799 731.5h2M801 732.5h1M802 732.5h1M803 731.5h1M804 730.5h2M806 729.5h1M807 728.5h2M809 727.5h2M811 726.5h1M812 726.5h1M813 725.5h1M814 724.5h2M816 723.5h1M817 722.5h3M820 723.5h2M822 723.5h3M825 722.5h2M827 722.5h3M830 723.5h2M832 723.5h2M834 722.5h2M836 721.5h1M837 721.5h1M838 722.5h2M840 723.5h2M842 724.5h3M845 723.5h2M847 723.5h2M849 724.5h2M851 725.5h1M852 725.5h5M857 725.5h1M858 724.5h1M859 723.5h2M861 722.5h1M862 721.5h1M863 722.5h2M865 723.5h2M867 724.5h5M872 724.5h1M873 723.5h2M875 722.5h2M877 721.5h2M879 720.5h2M881 719.5h1M882 719.5h3M885 720.5h2M887 720.5h1M888 721.5h1M889 722.5h2M891 723.5h1M892 724.5h1M893 725.5h1M894 726.5h1M895 727.5h1M896 728.5h1M897 729.5h1M898 728.5h1M899 727.5h2M901 726.5h1M902 725.5h2M904 726.5h2M906 727.5h1M907 727.5h2M909 728.5h2M911 729.5h1M912 729.5h2M914 728.5h2M916 727.5h1M917 727.5h1M918 728.5h1M919 729.5h1M920 730.5h1M921 731.5h1M922 732.5h5M927 732.5h2M929 731.5h2M931 730.5h1M932 730.5h3M935 731.5h2M937 731.5h3M940 732.5h2M942 732.5h3M945 731.5h2M947 731.5h2M949 732.5h2M951 733.5h1M952 733.5h3M955 734.5h2M957 734.5h5M962 734.5h1M963 735.5h2M965 736.5h2M967 737.5h3M970 736.5h2M972 736.5h1M973 735.5h1M974 734.5h2M976 733.5h1M977 732.5h1M978 731.5h1M979 730.5h1M980 729.5h1M981 728.5h1M982 727.5h3M985 728.5h2M987 728.5h1M988 727.5h1M989 726.5h1M990 725.5h1M991 724.5h1M992 723.5h3M995 722.5h2M997 722.5h3M1000 721.5h2M1002 721.5h1M1003 722.5h2M1005 723.5h2M1007 724.5h1M1008 723.5h1M1009 722.5h2M1011 721.5h1M1012 720.5h3M1015 721.5h2M1017 721.5h1M1018 722.5h2M1020 723.5h2M1022 724.5h2M1024 723.5h2M1026 722.5h1M1027 722.5h2M1029 723.5h2M1031 724.5h1M1032 724.5h3M1035 725.5h2M1037 725.5h1M1038 726.5h1M1039 727.5h2M1041 728.5h1M1042 729.5h3M1045 728.5h2M1047 728.5h2M1049 729.5h2M1051 730.5h1M1052 730.5h3M1055 729.5h2M1057 729.5h1M1058 728.5h2M1060 727.5h2M1062 726.5h2M1064 727.5h2M1066 728.5h1M1067 728.5h3M1070 727.5h2M1072 727.5h3M1075 728.5h2M1077 728.5h5M1082 728.5h3M1085 729.5h2M1087 729.5h2M1089 728.5h2M1091 727.5h1M1092 727.5h1M1093 726.5h2M1095 725.5h2M1097 724.5h2M1099 725.5h2M1101 726.5h1M1102 726.5h2M1104 727.5h2M1106 728.5h1M1107 728.5h3M1110 727.5h2M1112 727.5h3M1115 726.5h2M1117 726.5h2M1119 727.5h2M1121 728.5h1M1122 728.5h1M1123 727.5h1M1124 726.5h2M1126 725.5h1M1127 724.5h1M1128 725.5h2M1130 726.5h2M1132 727.5h2M1134 726.5h2M1136 725.5h1M1137 725.5h2M1139 724.5h2M1141 723.5h1M1142 723.5h2M1144 722.5h2M1146 721.5h1M1147 721.5h2M1149 720.5h2M1151 719.5h1M1152 719.5h5M1157 719.5h5M1162 719.5h2M1164 718.5h2M1166 717.5h1M1167 717.5h2M1169 718.5h2M1171 719.5h1M1172 719.5h3M1175 720.5h2M1177 720.5h3M1180 721.5h2M1182 721.5h5M1187 721.5h5M1192 721.5h3M1195 720.5h2M1197 720.5h2M1199 721.5h2M1201 722.5h1M1202 722.5h3M1205 721.5h2M1207 721.5h5M1212 721.5h2M1214 720.5h2M1216 719.5h1M1217 719.5h2M1219 720.5h2M1221 721.5h1M1222 721.5h2M1224 722.5h2M1226 723.5h1M1227 723.5h3M1230 722.5h2M1232 722.5h3M1235 721.5h2M1237 721.5h1M1238 720.5h1M1239 719.5h2M1241 718.5h1M1242 717.5h2M1244 718.5h2M1246 719.5h1M1247 719.5h1M1248 718.5h2M1250 717.5h2M1252 716.5h3M1255 715.5h2M1257 715.5h3M1260 716.5h2M1262 716.5h2M1264 715.5h2M1266 714.5h1M1267 714.5h5M1272 714.5h5M1277 714.5h2M1279 715.5h2M1281 716.5h1M1282 716.5h3M1285 715.5h2M1287 715.5h3M1290 716.5h2M1292 716.5h3M1295 717.5h2M1297 717.5h5M1302 717.5h2M1304 718.5h2M1306 719.5h1M1307 719.5h2M1309 720.5h2M1311 721.5h1M1312 721.5h2M1314 722.5h2M1316 723.5h1M1317 723.5h1M1318 722.5h2M1320 721.5h2M1322 720.5h2M1324 719.5h2M1326 718.5h1M1327 718.5h2M1329 719.5h2M1331 720.5h1M1332 720.5h5M1337 720.5h2M1339 719.5h2M1341 718.5h1M1342 718.5h3M1345 717.5h2M1347 717.5h3M1350 718.5h2M1352 718.5h3M1355 719.5h2M1357 719.5h3M1360 720.5h2M1362 720.5h5M1367 720.5h1M1368 721.5h2M1370 722.5h2M1372 723.5h5M1377 723.5h1M1378 722.5h1M1379 721.5h2M1381 720.5h1M1382 719.5h2M1384 720.5h2M1386 721.5h1M1387 721.5h2M1389 722.5h2M1391 723.5h1M1392 723.5h3M1395 724.5h2M1397 724.5h3M1400 723.5h2M1402 723.5h2M1404 724.5h2M1406 725.5h1M1407 725.5h1M1408 726.5h1M1409 727.5h1M1410 728.5h1M1411 729.5h1M1412 730.5h3M1415 731.5h2M1417 731.5h2M1419 732.5h2M1421 733.5h1M1422 733.5h2M1424 734.5h2M1426 735.5h1M1427 735.5h5M1432 735.5h3M1435 736.5h2M1437 736.5h2M1439 735.5h2M1441 734.5h1M1442 734.5h2M1444 733.5h2M1446 732.5h1M1447 732.5h1M1448 733.5h2M1450 734.5h2M1452 735.5h3M1455 734.5h2M1457 734.5h1M1458 733.5h1M1459 732.5h1M1460 731.5h1M1461 730.5h1M1462 729.5h3M1465 730.5h2M1467 730.5h3M1470 731.5h2M1472 731.5h3M1475 730.5h2M1477 730.5h3M1480 731.5h2M1482 731.5h2M1484 730.5h2M1486 729.5h1M1487 729.5h3M1490 728.5h2M1492 728.5h5M1497 728.5h1M1498 729.5h2M1500 730.5h2M1502 731.5h3M1505 730.5h2" fill="none" stroke="#009933" stroke-width="1" shape-rendering="crispEdges"/>
<path d="M11 726.500H1507" stroke="#f05000" stroke-width="1" shape-rendering="crispEdges"/>
<path d="M67.5 821v1M68.5 819v2M69.5 817v2M70.5 815v2M71.5 813v2M72 812.5h5M77.5 812v1M78.5 813v2M79.5 815v2M80.5 817v2M81.5 819v2M82 821.5h5M87 821.5h5M92 821.5h5M97 821.5h5M102 821.5h5M107.5 821v1M108.5 822v2M109.5 824v2M110.5 826v2M111.5 828v2M112 830.5h5M117.5 830v1M118.5 831v2M119.5 833v2M120.5 835v2M121.5 837v2M122.5 839v1M123.5 837v2M124.5 835v2M125.5 833v2M126.5 831v2M127 830.5h5M132.5 830v1M133.5 831v2M134.5 833v2M135.5 835v2M136.5 837v2M137 839.5h5M142 839.5h5M147.5 839v1M148.5 840v2M149.5 842v2M150.5 844v2M151.5 846v2M152 848.5h5M157.5 848v1M158.5 846v2M159.5 844v2M160.5 842v2M161.5 840v2M162.5 839v1M163.5 837v2M164.5 835v2M165.5 833v2M166.5 831v2M167 830.5h5M172 830.5h5M177 830.5h5M182.5 830v1M183.5 831v2M184.5 833v2M185.5 835v2M186.5 837v2M187 839.5h5M192.5 839v1M193.5 837v2M194.5 835v2M195.5 833v2M196.5 831v2M197 830.5h5M202.5 830v1M203.5 831v2M204.5 833v2M205.5 835v2M206.5 837v2M207.5 839v1M208.5 837v2M209.5 835v2M210.5 833v2M211.5 831v2M212.5 830v1M213.5 828v2M214.5 826v2M215.5 824v2M216.5 822v2M217.5 821v1M218.5 822v2M219.5 824v2M220.5 826v2M221.5 828v2M222.5 830v1M223.5 831v2M224.5 833v2M225.5 835v2M226.5 837v2M227 839.5h5M232 839.5h5M237.5 839v1M238.5 837v2M239.5 835v2M240.5 833v2M241.5 831v2M242 830.5h5M247.5 830v1M248.5 831v2M249.5 833v2M250.5 835v2M251.5 837v2M252.5 839v1M253.5 840v2M254.5 842v2M255.5 844v2M256.5 846v2M257.5 848v1M258.5 846v2M259.5 844v2M260.5 842v2M261.5 840v2M262.5 839v1M263.5 837v2M264.5 835v2M265.5 833v2M266.5 831v2M267 830.5h5M272.5 830v1M273.5 831v2M274.5 833v2M275.5 835v2M276.5 837v2M277 839.5h5M282.5 839v1M283.5 837v2M284.5 835v2M285.5 833v2M286.5 831v2M287.5 830v1M288.5 828v2M289.5 826v2M290.5 824v2M291.5 822v2M292.5 821v1M293.5 822v2M294.5 824v2M295.5 826v2M296.5 828v2M297.5 830v1M298.5 831v2M299.5 833v2M300.5 835v2M301.5 837v2M302 839.5h5M307.5 839v1M308.5 837v2M309.5 835v2M310.5 833v2M311.5 831v2M312.5 830v1M313.5 828v2M314.5 826v2M315.5 824v2M316.5 822v2M317.5 821v1M318.5 822v2M319.5 824v2M320.5 826v2M321.5 828v2M322.5 830v1M323.5 831v2M324.5 833v2M325.5 835v2M326.5 837v2M327.5 839v1M328.5 840v2M329.5 842v2M330.5 844v2M331.5 846v2M332.5 848v1M333.5 846v2M334.5 844v2M335.5 842v2M336.5 840v2M337 839.5h5M342 839.5h5M347.5 839v1M348.5 840v2M349.5 842v2M350.5 844v2M351.5 846v2M352 848.5h5M357.5 848v1M358.5 846v2M359.5 844v2M360.5 842v2M361.5 840v2M362.5 839v1M363.5 837v2M364.5 835v2M365.5 833v2M366.5 831v2M367.5 830v1M368.5 831v2M369.5 833v2M370.5 835v2M371.5 837v2M372.5 839v1M373.5 840v2M374.5 842v2M375.5 844v2M376.5 846v2M377 848.5h5M382.5 848v1M383.5 846v2M384.5 844v2M385.5 842v2M386.5 840v2M387.5 839v1M388.5 837v2M389.5 835v2M390.5 833v2M391.5 831v2M392 830.5h5M397.5 830v1M398.5 828v2M399.5 826v2M400.5 824v2M401.5 822v2M402.5 821v1M403.5 822v2M404.5 824v2M405.5 826v2M406.5 828v2M407.5 830v1M408.5 828v2M409.5 826v2M410.5 824v2M411.5 822v2M412.5 821v1M413.5 819v2M414.5 817v2M415.5 815v2M416.5 813v2M417.5 812v1M418.5 813v2M419.5 815v2M420.5 817v2M421.5 819v2M422.5 821v1M423.5 822v2M424.5 824v2M425.5 826v2M426.5 828v2M427.5 830v1M428.5 828v2M429.5 826v2M430.5 824v2M431.5 822v2M432.5 821v1M433.5 819v2M434.5 817v2M435.5 815v2M436.5 813v2M437.5 812v1M438.5 810v2M439.5 808v2M440.5 806v2M441.5 804v2M442.5 803v1M443.5 804v2M444.5 806v2M445.5 808v2M446.5 810v2M447 812.5h5M452.5 812v1M453.5 813v2M454.5 815v2M455.5 817v2M456.5 819v2M457 821.5h5M462.5 821v1M463.5 819v2M464.5 817v2M465.5 815v2M466.5 813v2M467 812.5h5M472 812.5h5M477.5 812v1M478.5 810v2M479.5 808v2M480.5 806v2M481.5 804v2M482.5 803v1M483.5 801v2M484.5 799v2M485.5 797v2M486.5 795v2M487 794.5h5M492.5 794v1M493.5 795v2M494.5 797v2M495.5 799v2M496.5 801v2M497 803.5h5M502 803.5h5M507.5 803v1M508.5 804v2M509.5 806v2M510.5 808v2M511.5 810v2M512.5 812v1M513.5 810v2M514.5 808v2M515.5 806v2M516.5 804v2M517.5 803v1M518.5 804v2M519.5 806v2M520.5 808v2M521.5 810v2M522 812.5h5M527.5 812v1M528.5 813v2M529.5 815v2M530.5 817v2M531.5 819v2M532 821.5h5M537 821.5h5M542 821.5h5M547.5 821v1M548.5 822v2M549.5 824v2M550.5 826v2M551.5 828v2M552.5 830v1M553.5 828v2M554.5 826v2M555.5 824v2M556.5 822v2M557.5 821v1M558.5 822v2M559.5 824v2M560.5 826v2M561.5 828v2M562 830.5h5M567 830.5h5M572 830.5h5M577 830.5h5M582.5 830v1M583.5 831v2M584.5 833v2M585.5 835v2M586.5 837v2M587.5 839v1M588.5 837v2M589.5 835v2M590.5 833v2M591.5 831v2M592.5 830v1M593.5 831v2M594.5 833v2M595.5 835v2M596.5 837v2M597.5 839v1M598.5 840v2M599.5 842v2M600.5 844v2M601.5 846v2M602.5 848v1M603.5 849v2M604.5 851v2M605.5 853v2M606.5 855v2M607.5 857v1M608.5 855v2M609.5 853v2M610.5 851v2M611.5 849v2M612.5 848v1M613.5 849v2M614.5 851v2M615.5 853v2M616.5 855v2M617 857.5h5M622.5 857v1M623.5 855v2M624.5 853v2M625.5 851v2M626.5 849v2M627.5 848v1M628.5 846v2M629.5 844v2M630.5 842v2M631.5 840v2M632.5 839v1M633.5 840v2M634.5 842v2M635.5 844v2M636.5 846v2M637 848.5h5M642 848.5h5M647.5 848v1M648.5 849v2M649.5 851v2M650.5 853v2M651.5 855v2M652.5 857v1M653.5 855v2M654.5 853v2M655.5 851v2M656.5 849v2M657 848.5h5M662.5 848v1M663.5 846v2M664.5 844v2M665.5 842v2M666.5 840v2M667 839.5h5M672.5 839v1M673.5 837v2M674.5 835v2M675.5 833v2M676.5 831v2M677.5 830v1M678.5 828v2M679.5 826v2M680.5 824v2M681.5 822v2M682 821.5h5M687 821.5h5M692 821.5h5M697 821.5h5M702 821.5h5M707.5 821v1M708.5 819v2M709.5 817v2M710.5 815v2M711.5 813v2M712 812.5h5M717 812.5h5M722.5 812v1M723.5 813v2M724.5 815v2M725.5 817v2M726.5 819v2M727 821.5h5M732.5 821v1M733.5 822v2M734.5 824v2M735.5 826v2M736.5 828v2M737 830.5h5M742 830.5h5M747.5 830v1M748.5 831v2M749.5 833v2M750.5 835v2M751.5 837v2M752.5 839v1M753.5 837v2M754.5 835v2M755.5 833v2M756.5 831v2M757 830.5h5M762 830.5h5M767 830.5h5M772 830.5h5M777.5 830v1M778.5 828v2M779.5 826v2M780.5 824v2M781.5 822v2M782 821.5h5M787.5 821v1M788.5 822v2M789.5 824v2M790.5 826v2M791.5 828v2M792 830.5h5M797.5 830v1M798.5 831v2M799.5 833v2M800.5 835v2M801.5 837v2M802 839.5h5M807.5 839v1M808.5 837v2M809.5 835v2M810.5 833v2M811.5 831v2M812 830.5h5M817 830.5h5M822.5 830v1M823.5 828v2M824.5 826v2M825.5 824v2M826.5 822v2M827.5 821v1M828.5 822v2M829.5 824v2M830.5 826v2M831.5 828v2M832 830.5h5M837.5 830v1M838.5 831v2M839.5 833v2M840.5 835v2M841.5 837v2M842.5 839v1M843.5 837v2M844.5 835v2M845.5 833v2M846.5 831v2M847 830.5h5M852 830.5h5M857.5 830v1M858.5 828v2M859.5 826v2M860.5 824v2M861.5 822v2M862.5 821v1M863.5 822v2M864.5 824v2M865.5 826v2M866.5 828v2M867.5 830v1M868.5 831v2M869.5 833v2M870.5 835v2M871.5 837v2M872 839.5h5M877.5 839v1M878.5 837v2M879.5 835v2M880.5 833v2M881.5 831v2M882.5 830v1M883.5 831v2M884.5 833v2M885.5 835v2M886.5 837v2M887 839.5h5M892.5 839v1M893.5 840v2M894.5 842v2M895.5 844v2M896.5 846v2M897.5 848v1M898.5 846v2M899.5 844v2M900.5 842v2M901.5 840v2M902.5 839v1M903.5 840v2M904.5 842v2M905.5 844v2M906.5 846v2M907 848.5h5M912.5 848v1M913.5 846v2M914.5 844v2M915.5 842v2M916.5 840v2M917.5 839v1M918.5 840v2M919.5 842v2M920.5 844v2M921.5 846v2M922.5 848v1M923.5 846v2M924.5 844v2M925.5 842v2M926.5 840v2M927.5 839v1M928.5 837v2M929.5 835v2M930.5 833v2M931.5 831v2M932.5 830v1M933.5 831v2M934.5 833v2M935.5 835v2M936.5 837v2M937.5 839v1M938.5 840v2M939.5 842v2M940.5 844v2M941.5 846v2M942.5 848v1M943.5 846v2M944.5 844v2M945.5 842v2M946.5 840v2M947 839.5h5M952 839.5h5M957.5 839v1M958.5 840v2M959.5 842v2M960.5 844v2M961.5 846v2M962 848.5h5M967 848.5h5M972 848.5h5M977.5 848v1M978.5 846v2M979.5 844v2M980.5 842v2M981.5 840v2M982.5 839v1M983.5 840v2M984.5 842v2M985.5 844v2M986.5 846v2M987 848.5h5M992.5 848v1M993.5 846v2M994.5 844v2M995.5 842v2M996.5 840v2M997.5 839v1M998.5 837v2M999.5 835v2M1000.5 833v2M1001.5 831v2M1002.5 830v1M1003.5 831v2M1004.5 833v2M1005.5 835v2M1006.5 837v2M1007.5 839v1M1008.5 837v2M1009.5 835v2M1010.5 833v2M1011.5 831v2M1012 830.5h5M1017 830.5h5M1022.5 830v1M1023.5 828v2M1024.5 826v2M1025.5 824v2M1026.5 822v2M1027 821.5h5M1032.5 821v1M1033.5 822v2M1034.5 824v2M1035.5 826v2M1036.5 828v2M1037.5 830v1M1038.5 831v2M1039.5 833v2M1040.5 835v2M1041.5 837v2M1042.5 839v1M1043.5 837v2M1044.5 835v2M1045.5 833v2M1046.5 831v2M1047.5 830v1M1048.5 831v2M1049.5 833v2M1050.5 835v2M1051.5 837v2M1052 839.5h5M1057 839.5h5M1062 839.5h5M1067 839.5h5M1072 839.5h5M1077 839.5h5M1082.5 839v1M1083.5 840v2M1084.5 842v2M1085.5 844v2M1086.5 846v2M1087.5 848v1M1088.5 846v2M1089.5 844v2M1090.5 842v2M1091.5 840v2M1092.5 839v1M1093.5 837v2M1094.5 835v2M1095.5 833v2M1096.5 831v2M1097 830.5h5M1102.5 830v1M1103.5 831v2M1104.5 833v2M1105.5 835v2M1106.5 837v2M1107.5 839v1M1108.5 837v2M1109.5 835v2M1110.5 833v2M1111.5 831v2M1112 830.5h5M1117.5 830v1M1118.5 831v2M1119.5 833v2M1120.5 835v2M1121.5 837v2M1122.5 839v1M1123.5 837v2M1124.5 835v2M1125.5 833v2M1126.5 831v2M1127.5 830v1M1128.5 831v2M1129.5 833v2M1130.5 835v2M1131.5 837v2M1132.5 839v1M1133.5 837v2M1134.5 835v2M1135.5 833v2M1136.5 831v2M1137.5 830v1M1138.5 828v2M1139.5 826v2M1140.5 824v2M1141.5 822v2M1142.5 821v1M1143.5 819v2M1144.5 817v2M1145.5 815v2M1146.5 813v2M1147 812.5h5M1152.5 812v1M1153.5 813v2M1154.5 815v2M1155.5 817v2M1156.5 819v2M1157.5 821v1M1158.5 819v2M1159.5 817v2M1160.5 815v2M1161.5 813v2M1162.5 812v1M1163.5 810v2M1164.5 808v2M1165.5 806v2M1166.5 804v2M1167.5 803v1M1168.5 804v2M1169.5 806v2M1170.5 808v2M1171.5 810v2M1172.5 812v1M1173.5 813v2M1174.5 815v2M1175.5 817v2M1176.5 819v2M1177 821.5h5M1182 821.5h5M1187.5 821v1M1188.5 819v2M1189.5 817v2M1190.5 815v2M1191.5 813v2M1192 812.5h5M1197.5 812v1M1198.5 813v2M1199.5 815v2M1200.5 817v2M1201.5 819v2M1202 821.5h5M1207.5 821v1M1208.5 822v2M1209.5 824v2M1210.5 826v2M1211.5 828v2M1212.5 830v1M1213.5 828v2M1214.5 826v2M1215.5 824v2M1216.5 822v2M1217.5 821v1M1218.5 822v2M1219.5 824v2M1220.5 826v2M1221.5 828v2M1222.5 830v1M1223.5 831v2M1224.5 833v2M1225.5 835v2M1226.5 837v2M1227.5 839v1M1228.5 837v2M1229.5 835v2M1230.5 833v2M1231.5 831v2M1232.5 830v1M1233.5 828v2M1234.5 826v2M1235.5 824v2M1236.5 822v2M1237.5 821v1M1238.5 819v2M1239.5 817v2M1240.5 815v2M1241.5 813v2M1242.5 812v1M1243.5 813v2M1244.5 815v2M1245.5 817v2M1246.5 819v2M1247 821.5h5M1252 821.5h5M1257 821.5h5M1262 821.5h5M1267.5 821v1M1268.5 819v2M1269.5 817v2M1270.5 815v2M1271.5 813v2M1272 812.5h5M1277 812.5h5M1282.5 812v1M1283.5 810v2M1284.5 808v2M1285.5 806v2M1286.5 804v2M1287 803.5h5M1292.5 803v1M1293.5 804v2M1294.5 806v2M1295.5 808v2M1296.5 810v2M1297 812.5h5M1302 812.5h5M1307.5 812v1M1308.5 813v2M1309.5 815v2M1310.5 817v2M1311.5 819v2M1312.5 821v1M1313.5 822v2M1314.5 824v2M1315.5 826v2M1316.5 828v2M1317.5 830v1M1318.5 828v2M1319.5 826v2M1320.5 824v2M1321.5 822v2M1322 821.5h5M1327.5 821v1M1328.5 822v2M1329.5 824v2M1330.5 826v2M1331.5 828v2M1332 830.5h5M1337.5 830v1M1338.5 828v2M1339.5 826v2M1340.5 824v2M1341.5 822v2M1342 821.5h5M1347 821.5h5M1352.5 821v1M1353.5 819v2M1354.5 817v2M1355.5 815v2M1356.5 813v2M1357.5 812v1M1358.5 813v2M1359.5 815v2M1360.5 817v2M1361.5 819v2M1362.5 821v1M1363.5 819v2M1364.5 817v2M1365.5 815v2M1366.5 813v2M1367 812.5h5M1372.5 812v1M1373.5 810v2M1374.5 808v2M1375.5 806v2M1376.5 804v2M1377 803.5h5M1382.5 803v1M1383.5 804v2M1384.5 806v2M1385.5 808v2M1386.5 810v2M1387 812.5h5M1392.5 812v1M1393.5 813v2M1394.5 815v2M1395.5 817v2M1396.5 819v2M1397 821.5h5M1402.5 821v1M1403.5 822v2M1404.5 824v2M1405.5 826v2M1406.5 828v2M1407.5 830v1M1408.5 831v2M1409.5 833v2M1410.5 835v2M1411.5 837v2M1412.5 839v1M1413.5 840v2M1414.5 842v2M1415.5 844v2M1416.5 846v2M1417 848.5h5M1422.5 848v1M1423.5 849v2M1424.5 851v2M1425.5 853v2M1426.5 855v2M1427 857.5h5M1432.5 857v2M1433.5 859v2M1434.5 861v2M1435.5 863v2M1436.5 865v2M1437 867.5h5M1442.5 866v2M1443.5 864v2M1444.5 862v2M1445.5 860v2M1446.5 858v2M1447 857.5h5M1452 857.5h5M1457 857.5h5M1462 857.5h5M1467 857.5h5M1472 857.5h5M1477 857.5h5M1482.5 857v1M1483.5 855v2M1484.5 853v2M1485.5 851v2M1486.5 849v2M1487.5 848v1M1488.5 846v2M1489.5 844v2M1490.5 842v2M1491.5 840v2M1492 839.5h5M1497.5 839v1M1498.5 840v2M1499.5 842v2M1500.5 844v2M1501.5 846v2M1502 848.5h5" fill="none" stroke="#009933" stroke-width="1" shape-rendering="crispEdges"/>
<path d="M11 803.500H1507" stroke="#0060d0" stroke-width="1" shape-rendering="crispEdges"/><path d="M11 857.500H1507" stroke="#f05000" stroke-width="1" shape-rendering="crispEdges"/>
<path d="M17.5 206.0V214.5M27.5 204.0V209.0M32.5 205.0V211.0M52.5 235.0V242.0M57.5 226.0V243.0M87.5 233.0V237.8M117.5 362.0V400.8M122.5 369.0V411.0M127.5 352.0V370.5M157.5 331.0V348.0M197.5 303.0V328.0M217.5 315.0V325.5M237.5 319.0V328.8M247.5 310.0V320.0M262.5 310.0V319.8M267.5 299.5V311.0M272.5 282.5V291.0M277.5 296.0V304.0M287.5 298.0V307.0M312.5 323.0V330.8M317.5 314.0V322.8M337.5 332.0V340.8M352.5 323.0V332.0M357.5 328.0V336.0M367.5 311.2V316.0M387.5 335.0V343.8M392.5 336.0V341.0M397.5 334.2V341.5M412.5 325.0V336.8M437.5 336.2V342.5M442.5 316.0V329.8M447.5 317.0V326.8M452.5 313.0V320.5M467.5 303.5V307.5M487.5 285.0V289.0M492.5 277.0V288.0M497.5 275.0V282.0M507.5 274.0V278.2M517.5 286.0V295.8M522.5 286.0V295.0M527.5 286.0V292.5M547.5 271.0V278.0M557.5 272.0V280.0M577.5 281.0V293.8M607.5 383.5V410.0M617.5 379.0V394.0M627.5 367.0V375.0M637.5 370.0V378.0M657.5 401.0V412.0M667.5 392.0V401.8M672.5 396.0V401.8M677.5 385.0V399.5M687.5 381.5V386.5M692.5 369.0V377.5M712.5 399.0V405.5M732.5 412.0V419.5M742.5 407.0V411.8M757.5 399.0V404.8M777.5 409.0V416.0M782.5 406.0V424.0M797.5 427.0V438.0M807.5 421.0V428.8M812.5 409.0V416.8M817.5 396.0V403.8M822.5 400.0V407.0M872.5 397.0V411.0M877.5 385.0V403.0M902.5 395.0V403.0M917.5 400.0V408.0M947.5 425.0V434.0M952.5 434.0V438.0M962.5 438.0V447.8M972.5 452.8V459.0M977.5 441.0V446.8M987.5 431.2V437.0M992.5 410.0V417.8M1012.5 403.0V414.0M1017.5 407.0V413.0M1022.5 417.0V423.8M1027.5 407.0V412.0M1032.5 416.0V423.0M1037.5 421.0V426.0M1057.5 438.0V441.8M1087.5 433.0V440.0M1097.5 417.0V420.8M1142.5 416.0V428.0M1147.5 409.0V416.0M1152.5 397.0V403.0M1157.5 397.0V401.8M1167.5 386.0V394.0M1192.5 393.5V398.5M1197.5 388.0V392.0M1212.5 384.8V388.0M1222.5 376.0V383.0M1232.5 376.0V382.8M1237.5 371.0V380.8M1242.5 349.0V368.8M1247.5 349.0V359.0M1252.5 337.0V343.8M1262.5 330.0V336.5M1267.5 325.0V336.5M1272.5 321.0V329.5M1277.5 318.0V323.8M1287.5 311.0V329.0M1317.5 322.0V330.8M1327.5 284.0V298.0M1347.5 270.0V276.5M1352.5 270.5V275.8M1367.5 272.0V279.8M1387.5 266.0V273.0M1417.5 303.0V313.0M1437.5 332.0V341.8M1442.5 327.0V335.5M1447.5 314.0V321.8M1462.5 314.0V322.8M1467.5 320.0V326.0M1482.5 330.0V338.0" stroke="#ff0000" stroke-width="1" shape-rendering="crispEdges"/>
<path d="M12.5 215V218M17.5 209V215M27.5 206V209M32.5 205V209M52.5 236V241M57.5 226V239M62.5 214V223M72.5 230V236M87.5 236V238M117.5 369V401M122.5 381V387M127.5 359V371M132.5 321V341M157.5 335V346M162.5 312V333M197.5 306V324M212.5 318V331M217.5 317V326M237.5 322V329M247.5 315V320M262.5 313V320M267.5 300V309M272.5 284V289M277.5 298V300M287.5 302V304M312.5 325V331M317.5 316V323M337.5 333V341M347.5 325V331M352.5 329V331M357.5 331V333M362.5 313V332M367.5 311V313M387.5 337V344M392.5 336V339M397.5 334V340M407.5 336V341M412.5 327V337M437.5 336V340M442.5 319V330M447.5 322V327M452.5 315V320M467.5 304V307M487.5 286V289M492.5 277V287M497.5 278V281M507.5 278V279M517.5 288V296M522.5 291V292M527.5 287V293M547.5 272V278M557.5 276V278M577.5 290V294M607.5 384V387M617.5 380V389M627.5 370V372M637.5 373V375M657.5 403V407M667.5 399V402M672.5 397V402M677.5 392V397M687.5 383V385M692.5 372V377M712.5 400V405M732.5 414V417M742.5 409V412M747.5 391V399M757.5 402V405M772.5 414V426M777.5 414V415M782.5 406V423M797.5 429V432M807.5 422V429M812.5 415V417M817.5 399V404M822.5 402V405M862.5 392V401M872.5 401V409M877.5 385V400M902.5 396V400M917.5 401V404M947.5 426V433M952.5 435V437M962.5 442V448M972.5 457V459M977.5 444V447M982.5 427V437M987.5 431V434M992.5 415V418M997.5 411V416M1012.5 404V412M1017.5 409V411M1022.5 420V424M1027.5 410V411M1032.5 420V422M1037.5 423V425M1057.5 440V442M1062.5 428V431M1087.5 435V438M1092.5 429V432M1097.5 419V421M1117.5 430V431M1127.5 424V428M1137.5 428V433M1142.5 420V428M1147.5 410V415M1152.5 400V402M1157.5 400V402M1167.5 389V394M1187.5 395V399M1192.5 394V399M1197.5 389V392M1212.5 386V388M1217.5 376V382M1222.5 379V380M1232.5 378V383M1237.5 373V381M1242.5 354V369M1247.5 356V358M1252.5 343V344M1262.5 334V337M1267.5 326V336M1272.5 322V328M1277.5 318V323M1287.5 311V326M1317.5 324V331M1322.5 306V316M1327.5 291V294M1347.5 273V276M1352.5 272V275M1367.5 274V280M1382.5 261V271M1387.5 268V271M1417.5 306V309M1437.5 335V342M1442.5 329V334M1447.5 318V322M1462.5 316V323M1467.5 323V326M1482.5 334V335" stroke="#ff0000" stroke-width="3" shape-rendering="crispEdges"/>
<path d="M37.5 214.0V225.0M42.5 222.0V232.8M47.5 234.0V245.0M67.5 226.0V239.8M77.5 213.0V223.0M82.5 226.0V241.0M92.5 223.0V231.0M97.5 233.0V246.0M102.5 249.0V262.0M107.5 280.5V324.0M112.5 337.0V449.5M137.5 323.0V342.0M142.5 330.0V338.5M147.5 325.0V334.0M152.5 327.0V340.0M167.5 307.0V316.0M172.5 301.0V312.8M177.5 302.0V311.8M182.5 310.0V325.0M187.5 316.5V324.5M192.5 314.0V322.7M202.5 306.0V312.8M207.5 322.0V330.0M222.5 317.0V323.0M227.5 323.0V328.0M232.5 333.0V340.0M242.5 310.0V318.0M252.5 308.0V317.0M257.5 319.0V328.0M282.5 294.0V304.8M292.5 291.0V299.0M297.5 300.0V311.8M302.5 308.0V326.0M307.5 322.0V327.8M322.5 310.0V321.0M327.5 314.0V321.8M332.5 327.0V337.5M342.5 330.0V338.8M372.5 324.0V330.0M377.5 322.0V332.8M382.5 332.0V344.0M402.5 321.0V332.0M417.5 322.0V329.0M427.5 336.5V348.0M432.5 339.0V345.4M457.5 318.0V325.0M462.5 312.0V318.5M472.5 299.0V304.0M477.5 294.0V299.0M482.5 284.0V290.0M512.5 288.0V292.5M532.5 291.0V295.8M537.5 281.0V286.0M542.5 281.0V286.0M552.5 276.0V280.5M562.5 280.0V284.0M567.5 290.0V298.0M572.5 293.0V301.0M582.5 296.0V301.0M587.5 312.0V321.0M592.5 306.0V321.0M597.5 334.0V353.0M602.5 358.5V372.5M612.5 364.0V375.0M622.5 371.0V384.5M632.5 364.0V370.5M647.5 397.0V404.5M652.5 401.0V413.5M662.5 394.0V413.0M682.5 379.0V384.0M697.5 377.0V386.0M702.5 393.0V400.5M707.5 405.0V416.5M717.5 389.0V398.0M722.5 396.0V402.8M737.5 409.5V425.0M752.5 399.0V404.8M767.5 419.0V438.0M787.5 401.0V410.0M792.5 417.0V429.0M802.5 424.0V439.0M827.5 391.0V395.8M837.5 386.0V391.0M842.5 399.0V402.8M847.5 394.0V402.0M852.5 403.0V408.8M857.5 406.0V410.0M882.5 370.0V378.0M887.5 364.0V379.8M892.5 383.0V393.8M907.5 397.0V401.8M912.5 399.0V410.8M927.5 418.0V425.0M932.5 410.0V416.0M937.5 418.0V422.8M942.5 418.0V428.8M957.5 436.0V440.0M967.5 451.2V456.8M1002.5 404.5V409.0M1007.5 409.0V417.8M1047.5 431.0V434.8M1052.5 437.0V446.0M1067.5 430.0V434.8M1072.5 423.0V426.8M1077.5 428.0V431.0M1082.5 429.0V433.0M1107.5 425.5V439.0M1112.5 429.0V433.0M1122.5 432.0V438.0M1132.5 433.0V438.5M1162.5 394.0V398.8M1177.5 389.0V396.0M1182.5 393.0V398.8M1202.5 389.0V394.0M1227.5 376.2V383.8M1257.5 327.0V335.0M1282.5 309.0V319.8M1292.5 297.0V312.0M1297.5 297.0V316.0M1302.5 303.0V310.0M1307.5 304.0V315.0M1312.5 310.0V322.0M1337.5 285.0V294.8M1342.5 274.0V282.0M1357.5 269.0V272.0M1362.5 272.0V277.8M1372.5 282.0V285.8M1377.5 279.0V283.8M1392.5 271.0V277.0M1397.5 275.0V282.0M1402.5 267.0V273.2M1412.5 278.5V301.8M1422.5 310.0V316.0M1427.5 317.0V327.8M1432.5 317.0V330.0M1452.5 328.0V334.8M1457.5 329.0V335.8M1477.5 318.0V329.0M1492.5 319.0V328.0M1497.5 313.0V335.0M1502.5 334.0V347.0M1507.5 339.0V346.0" stroke="#000090" stroke-width="1" shape-rendering="crispEdges"/>
<path d="M22.5 202V208M37.5 215V224M42.5 230V233M47.5 235V243M67.5 228V240M77.5 216V221M82.5 226V239M92.5 228V231M97.5 233V245M102.5 257V262M107.5 281V321M112.5 337V416M137.5 323V337M142.5 333V339M147.5 325V329M152.5 327V332M167.5 307V308M172.5 307V313M177.5 307V312M182.5 310V322M187.5 317V324M192.5 319V323M202.5 310V313M207.5 322V327M222.5 319V323M227.5 323V327M232.5 336V339M242.5 314V315M252.5 312V316M257.5 319V327M282.5 296V305M292.5 293V297M297.5 305V312M302.5 308V318M307.5 325V328M322.5 312V321M327.5 321V322M332.5 327V336M342.5 332V339M372.5 325V326M377.5 327V333M382.5 334V343M402.5 329V331M417.5 323V326M422.5 333V341M427.5 337V346M432.5 342V345M457.5 319V324M462.5 316V319M472.5 300V303M477.5 296V299M482.5 286V289M502.5 265V273M512.5 290V293M532.5 292V296M537.5 284V285M542.5 282V284M552.5 277V281M562.5 280V281M567.5 291V295M572.5 297V301M582.5 297V300M587.5 312V319M592.5 314V317M597.5 334V351M602.5 362V370M612.5 368V375M622.5 372V382M632.5 365V369M642.5 374V384M647.5 399V405M652.5 407V414M662.5 395V412M682.5 382V383M697.5 380V383M702.5 394V399M707.5 407V417M717.5 392V398M722.5 402V403M727.5 417V422M737.5 413V424M752.5 401V405M762.5 411V420M767.5 420V437M787.5 405V408M792.5 418V421M802.5 425V436M827.5 393V396M832.5 398V402M837.5 389V390M842.5 400V403M847.5 396V399M852.5 404V409M857.5 408V409M867.5 390V400M882.5 372V375M887.5 377V380M892.5 389V394M897.5 404V412M907.5 398V402M912.5 402V411M922.5 415V425M927.5 420V424M932.5 413V415M937.5 420V423M942.5 420V429M957.5 439V440M967.5 453V457M1002.5 406V407M1007.5 411V418M1042.5 429V437M1047.5 432V435M1052.5 437V445M1067.5 431V435M1072.5 424V427M1077.5 430V431M1082.5 431V433M1102.5 423V426M1107.5 426V436M1112.5 432V433M1122.5 432V436M1132.5 433V437M1162.5 395V399M1172.5 388V393M1177.5 392V394M1182.5 396V399M1202.5 392V394M1207.5 383V386M1227.5 377V384M1257.5 328V334M1282.5 310V320M1292.5 306V310M1297.5 306V313M1302.5 304V307M1307.5 307V314M1312.5 313V319M1332.5 284V296M1337.5 292V295M1342.5 279V282M1357.5 271V272M1362.5 275V278M1372.5 283V286M1377.5 281V284M1392.5 272V274M1397.5 276V279M1402.5 270V273M1407.5 277V281M1412.5 280V302M1422.5 311V315M1427.5 325V328M1432.5 322V329M1452.5 330V335M1457.5 333V336M1472.5 324V327M1477.5 322V327M1487.5 324V327M1492.5 321V326M1497.5 325V329M1502.5 334V346M1507.5 341V344" stroke="#000090" stroke-width="3" shape-rendering="crispEdges"/>
<path d="M107.5 178v4M108.5 172v6M109.5 165v7M110.5 158v7M111.5 152v6M112.5 149v3M112.5 148v1M113.5 147v1M114.5 145v2M115.5 144v1M116.5 143v1M117 142.5h1M118 141.5h2M120 140.5h2M122 139.5h1M123 140.5h2M125 141.5h2M127.5 142v1M128.5 143v2M129.5 145v1M130.5 146v1M131.5 147v2M132 149.5h1M133 150.5h1M134 151.5h2M136 152.5h1M137 153.5h1M138 154.5h1M139 155.5h1M140 156.5h1M141 157.5h1M142 158.5h1M143 159.5h1M144 160.5h2M146 161.5h1M147.5 162v1M148.5 163v1M149.5 164v2M150.5 166v1M151.5 167v1M152.5 168v1M153.5 169v2M154.5 171v2M155.5 173v1M156.5 174v2M157.5 176v2M158.5 178v2M159.5 180v2M160.5 182v2M161.5 184v2M162.5 186v1M162.5 187v1M163.5 188v2M164.5 190v1M165.5 191v1M166.5 192v2M167.5 194v1M168.5 195v2M169.5 197v2M170.5 199v2M171.5 201v2M172.5 203v2M173.5 205v2M174.5 207v3M175.5 210v3M176.5 213v2M177.5 215v1M177.5 216v2M178.5 218v2M179.5 220v2M180.5 222v2M181.5 224v2M182.5 226v1M182.5 227v2M183.5 229v2M184.5 231v3M185.5 234v2M186.5 236v2M187.5 238v1M187.5 239v2M188.5 241v3M189.5 244v4M190.5 248v3M191.5 251v3M192.5 254v1M192.5 255v2M193.5 257v2M194.5 259v3M195.5 262v3M196.5 265v2M197.5 267v1M197.5 268v2M198.5 270v2M199.5 272v2M200.5 274v2M201.5 276v2M202.5 278v1M202 279.5h5M207.5 279v2M208.5 281v2M209.5 283v2M210.5 285v2M211.5 287v2M212 289.5h2M214 290.5h2M216 291.5h1M217.5 291v1M218.5 292v2M219.5 294v1M220.5 295v1M221.5 296v2M222 298.5h1M223 299.5h1M224 300.5h1M225 301.5h1M226 302.5h1M227 303.5h3M230 302.5h2M232 302.5h3M235 303.5h2M237 303.5h5M242 303.5h3M245 302.5h2M247 302.5h5M252 302.5h3M255 303.5h2M257 303.5h5M262 303.5h2M264 302.5h2M266 301.5h1M267.5 301v1M268.5 299v2M269.5 298v1M270.5 297v1M271.5 295v2M272 294.5h2M274 293.5h2M276 292.5h1M277 292.5h3M280 291.5h2M282 291.5h2M284 290.5h2M286 289.5h1M287 289.5h2M289 288.5h2M291 287.5h1M292 287.5h3M295 288.5h2M297 288.5h5M302 288.5h5M307 288.5h5M312 288.5h5M317 288.5h5M322 288.5h5M327 288.5h5M332 288.5h5M337 288.5h3M340 287.5h2M342 287.5h5M347 287.5h5M352 287.5h5M357 287.5h5M362 287.5h3M365 288.5h2M367.5 288v1M368.5 289v2M369.5 291v1M370.5 292v1M371.5 293v2M372 295.5h1M373 296.5h2M375 297.5h2M377 298.5h3M380 299.5h2M382 299.5h1M383 300.5h2M385 301.5h2M387.5 302v1M388.5 303v1M389.5 304v2M390.5 306v1M391.5 307v1M392 308.5h2M394 309.5h2M396 310.5h1M397 310.5h3M400 311.5h2M402 311.5h5M407 311.5h5M412 311.5h2M414 312.5h2M416 313.5h1M417 313.5h3M420 314.5h2M422 314.5h5M427 314.5h5M432 314.5h5M437 314.5h2M439 313.5h2M441 312.5h1M442 312.5h5M447 312.5h2M449 311.5h2M451 310.5h1M452 310.5h3M455 309.5h2M457 309.5h3M460 310.5h2M462 310.5h2M464 309.5h2M466 308.5h1M467 308.5h1M468 307.5h1M469 306.5h2M471 305.5h1M472 304.5h1M473 303.5h1M474 302.5h1M475 301.5h1M476 300.5h1M477.5 299v1M478.5 298v1M479.5 296v2M480.5 295v1M481.5 294v1M482.5 293v1M483.5 292v1M484.5 290v2M485.5 289v1M486.5 288v1M487.5 287v1M488.5 285v2M489.5 283v2M490.5 282v1M491.5 280v2M492.5 279v1M493.5 278v1M494.5 276v2M495.5 275v1M496.5 274v1M497.5 273v1M498.5 272v1M499.5 270v2M500.5 269v1M501.5 268v1M502 267.5h1M503 266.5h1M504 265.5h2M506 264.5h1M507 263.5h2M509 262.5h2M511 261.5h1M512 261.5h2M514 260.5h2M516 259.5h1M517 259.5h5M522 259.5h3M525 260.5h2M527 260.5h1M528 261.5h2M530 262.5h2M532 263.5h3M535 264.5h2M537 264.5h5M542 264.5h2M544 263.5h2M546 262.5h1M547 262.5h5M552 262.5h2M554 263.5h2M556 264.5h1M557 264.5h1M558 265.5h2M560 266.5h2M562 267.5h3M565 268.5h2M567 268.5h5M572 268.5h3M575 269.5h2M577 269.5h3M580 268.5h2M582 268.5h1M583 267.5h1M584 266.5h2M586 265.5h1M587 264.5h3M590 263.5h2M592.5 263v1M593.5 261v2M594.5 260v1M595.5 259v1M596.5 257v2M597.5 256v1M598.5 254v2M599.5 253v1M600.5 252v1M601.5 250v2M602.5 249v1M603.5 247v2M604.5 246v1M605.5 245v1M606.5 243v2M607 242.5h1M608 241.5h2M610 240.5h2M612 239.5h2M614 238.5h2M616 237.5h1M617 237.5h3M620 236.5h2M622 236.5h2M624 237.5h2M626 238.5h1M627 238.5h2M629 239.5h2M631 240.5h1M632 240.5h1M633 241.5h1M634 242.5h2M636 243.5h1M637 244.5h1M638 245.5h1M639 246.5h2M641 247.5h1M642.5 248v1M643.5 249v1M644.5 250v2M645.5 252v1M646.5 253v1M647.5 254v1M648.5 255v1M649.5 256v2M650.5 258v1M651.5 259v1M652.5 260v1M653.5 261v2M654.5 263v2M655.5 265v2M656.5 267v2M657.5 269v2M658.5 271v2M659.5 273v2M660.5 275v2M661.5 277v2M662.5 279v1M663.5 280v2M664.5 282v2M665.5 284v2M666.5 286v2M667.5 288v2M668.5 290v2M669.5 292v2M670.5 294v2M671.5 296v2M672.5 298v2M673.5 300v3M674.5 303v3M675.5 306v3M676.5 309v3M677.5 312v1M677.5 313v2M678.5 315v3M679.5 318v3M680.5 321v2M681.5 323v3M682.5 326v1M682.5 327v2M683.5 329v2M684.5 331v2M685.5 333v2M686.5 335v2M687.5 337v1M687.5 338v2M688.5 340v3M689.5 343v3M690.5 346v2M691.5 348v3M692.5 351v1M692.5 352v1M693.5 353v1M694.5 354v2M695.5 356v1M696.5 357v1M697 358.5h2M699 359.5h2M701 360.5h1M702 360.5h3M705 359.5h2M707 359.5h2M709 360.5h2M711 361.5h1M712 361.5h3M715 362.5h2M717 362.5h3M720 363.5h2M722 363.5h2M724 364.5h2M726 365.5h1M727 365.5h1M728 366.5h1M729 367.5h2M731 368.5h1M732 369.5h1M733 370.5h2M735 371.5h2M737 372.5h2M739 373.5h2M741 374.5h1M742 374.5h3M745 373.5h2M747 373.5h5M752 373.5h5M757 373.5h3M760 372.5h2M762 372.5h2M764 371.5h2M766 370.5h1M767 370.5h5M772 370.5h2M774 371.5h2M776 372.5h1M777 372.5h2M779 373.5h2M781 374.5h1M782 374.5h1M783 375.5h2M785 376.5h2M787.5 377v1M788.5 378v2M789.5 380v1M790.5 381v1M791.5 382v2M792 384.5h1M793 385.5h1M794 386.5h2M796 387.5h1M797 388.5h3M800 389.5h2M802 389.5h5M807 389.5h3M810 390.5h2M812 390.5h5M817 390.5h5M822 390.5h2M824 389.5h2M826 388.5h1M827 388.5h3M830 387.5h2M832 387.5h1M833 386.5h2M835 385.5h2M837 384.5h3M840 383.5h2M842 383.5h2M844 384.5h2M846 385.5h1M847 385.5h5M852 385.5h3M855 386.5h2M857 386.5h1M858 385.5h2M860 384.5h2M862 383.5h3M865 384.5h2M867 384.5h3M870 383.5h2M872 383.5h1M873 382.5h2M875 381.5h2M877 380.5h1M878 379.5h1M879 378.5h1M880 377.5h1M881 376.5h1M882 375.5h1M883 374.5h2M885 373.5h2M887 372.5h3M890 371.5h2M892 371.5h2M894 372.5h2M896 373.5h1M897 373.5h1M898 374.5h2M900 375.5h2M902 376.5h2M904 377.5h2M906 378.5h1M907 378.5h5M912 378.5h5M917 378.5h2M919 377.5h2M921 376.5h1M922 376.5h3M925 375.5h2M927 375.5h5M932 375.5h5M937 375.5h3M940 374.5h2M942 374.5h5M947 374.5h3M950 373.5h2M952 373.5h2M954 372.5h2M956 371.5h1M957 371.5h3M960 372.5h2M962 372.5h2M964 371.5h2M966 370.5h1M967 370.5h3M970 369.5h2M972 369.5h1M973 370.5h1M974 371.5h2M976 372.5h1M977.5 373v1M978.5 374v2M979.5 376v2M980.5 378v1M981.5 379v2M982.5 381v1M983.5 382v2M984.5 384v1M985.5 385v1M986.5 386v2M987 388.5h1M988 389.5h2M990 390.5h2M992 391.5h5M997 391.5h1M998 392.5h2M1000 393.5h2M1002 394.5h2M1004 395.5h2M1006 396.5h1M1007 396.5h3M1010 395.5h2M1012 395.5h2M1014 396.5h2M1016 397.5h1M1017 397.5h3M1020 396.5h2M1022 396.5h2M1024 395.5h2M1026 394.5h1M1027 394.5h3M1030 395.5h2M1032 395.5h5M1037 395.5h5M1042 395.5h5M1047 395.5h5M1052 395.5h5M1057 395.5h5M1062 395.5h2M1064 396.5h2M1066 397.5h1M1067 397.5h2M1069 398.5h2M1071 399.5h1M1072 399.5h3M1075 400.5h2M1077 400.5h5M1082 400.5h5M1087 400.5h3M1090 401.5h2M1092 401.5h3M1095 402.5h2M1097 402.5h2M1099 403.5h2M1101 404.5h1M1102 404.5h3M1105 405.5h2M1107 405.5h1M1108 406.5h1M1109 407.5h2M1111 408.5h1M1112 409.5h1M1113 410.5h1M1114 411.5h2M1116 412.5h1M1117 413.5h3M1120 414.5h2M1122 414.5h1M1123 415.5h2M1125 416.5h2M1127 417.5h2M1129 418.5h2M1131 419.5h1M1132 419.5h3M1135 420.5h2M1137 420.5h2M1139 419.5h2M1141 418.5h1M1142 418.5h1M1143 417.5h1M1144 416.5h2M1146 415.5h1M1147.5 414v1M1148.5 413v1M1149.5 411v2M1150.5 410v1M1151.5 409v1M1152 408.5h1M1153 407.5h1M1154 406.5h2M1156 405.5h1M1157 404.5h1M1158 403.5h1M1159 402.5h1M1160 401.5h1M1161 400.5h1M1162.5 399v1M1163.5 398v1M1164.5 396v2M1165.5 395v1M1166.5 394v1M1167 393.5h1M1168 392.5h1M1169 391.5h2M1171 390.5h1M1172 389.5h1M1173 388.5h1M1174 387.5h2M1176 386.5h1M1177 385.5h2M1179 384.5h2M1181 383.5h1M1182 383.5h2M1184 382.5h2M1186 381.5h1M1187 381.5h2M1189 380.5h2M1191 379.5h1M1192 379.5h1M1193 378.5h2M1195 377.5h2M1197 376.5h2M1199 375.5h2M1201 374.5h1M1202 374.5h2M1204 373.5h2M1206 372.5h1M1207 372.5h3M1210 371.5h2M1212 371.5h1M1213 370.5h2M1215 369.5h2M1217 368.5h3M1220 367.5h2M1222 367.5h5M1227 367.5h3M1230 368.5h2M1232 368.5h3M1235 369.5h2M1237 369.5h1M1238 368.5h1M1239 367.5h1M1240 366.5h1M1241 365.5h1M1242 364.5h1M1243 363.5h1M1244 362.5h1M1245 361.5h1M1246 360.5h1M1247.5 359v1M1248.5 357v2M1249.5 355v2M1250.5 354v1M1251.5 352v2M1252.5 351v1M1253.5 349v2M1254.5 347v2M1255.5 345v2M1256.5 343v2M1257.5 342v1M1258.5 340v2M1259.5 339v1M1260.5 338v1M1261.5 336v2M1262.5 335v1M1263.5 333v2M1264.5 331v2M1265.5 330v1M1266.5 328v2M1267.5 327v1M1268.5 325v2M1269.5 323v2M1270.5 322v1M1271.5 320v2M1272.5 319v1M1273.5 317v2M1274.5 316v1M1275.5 315v1M1276.5 313v2M1277 312.5h1M1278 311.5h1M1279 310.5h1M1280 309.5h1M1281 308.5h1M1282.5 307v1M1283.5 305v2M1284.5 304v1M1285.5 303v1M1286.5 301v2M1287 300.5h1M1288 299.5h1M1289 298.5h1M1290 297.5h1M1291 296.5h1M1292 295.5h1M1293 294.5h1M1294 293.5h2M1296 292.5h1M1297 291.5h1M1298 290.5h2M1300 289.5h2M1302 288.5h2M1304 287.5h2M1306 286.5h1M1307 286.5h3M1310 285.5h2M1312 285.5h5M1317 285.5h3M1320 284.5h2M1322 284.5h3M1325 283.5h2M1327 283.5h5M1332 283.5h3M1335 284.5h2M1337 284.5h1M1338 283.5h2M1340 282.5h2M1342 281.5h1M1343 280.5h1M1344 279.5h2M1346 278.5h1M1347 277.5h1M1348 276.5h1M1349 275.5h1M1350 274.5h1M1351 273.5h1M1352 272.5h1M1353 271.5h1M1354 270.5h2M1356 269.5h1M1357 268.5h1M1358 267.5h2M1360 266.5h2M1362 265.5h2M1364 264.5h2M1366 263.5h1M1367 263.5h3M1370 262.5h2M1372 262.5h3M1375 261.5h2M1377 261.5h1M1378 260.5h1M1379 259.5h1M1380 258.5h1M1381 257.5h1M1382 256.5h2M1384 255.5h2M1386 254.5h1M1387 254.5h2M1389 253.5h2M1391 252.5h1M1392 252.5h5M1397 252.5h3M1400 251.5h2M1402 251.5h3M1405 252.5h2M1407 252.5h2M1409 253.5h2M1411 254.5h1M1412 254.5h1M1413 255.5h2M1415 256.5h2M1417 257.5h3M1420 256.5h2M1422 256.5h1M1423 255.5h1M1424 254.5h1M1425 253.5h1M1426 252.5h1M1427 251.5h1M1428 250.5h2M1430 249.5h2M1432 248.5h1M1433 247.5h1M1434 246.5h2M1436 245.5h1M1437 244.5h5M1442 244.5h3M1445 245.5h2M1447 245.5h3M1450 246.5h2M1452 246.5h2M1454 247.5h2M1456 248.5h1M1457 248.5h2M1459 249.5h2M1461 250.5h1M1462 250.5h1M1463 251.5h2M1465 252.5h2M1467 253.5h2M1469 254.5h2M1471 255.5h1M1472 255.5h1M1473 256.5h2M1475 257.5h2M1477.5 258v1M1478.5 259v2M1479.5 261v1M1480.5 262v1M1481.5 263v2M1482.5 265v1M1483.5 266v2M1484.5 268v1M1485.5 269v1M1486.5 270v2M1487.5 272v1M1488.5 273v2M1489.5 275v1M1490.5 276v1M1491.5 277v2M1492.5 279v1M1493.5 280v2M1494.5 282v1M1495.5 283v1M1496.5 284v2M1497.5 286v1M1498.5 287v2M1499.5 289v2M1500.5 291v2M1501.5 293v2M1502.5 295v2M1503.5 297v2M1504.5 299v2M1505.5 301v2M1506.5 303v2" fill="none" stroke="#f05000" stroke-width="1" shape-rendering="crispEdges"/>
<path d="M107.5 282v6M108.5 288v10M109.5 298v11M110.5 309v11M111.5 320v10M112.5 330v5M112.5 335v3M113.5 338v4M114.5 342v5M115.5 347v4M116.5 351v4M117.5 355v2M117.5 357v3M118.5 360v4M119.5 364v4M120.5 368v4M121.5 372v4M122.5 376v2M122.5 378v2M123.5 380v2M124.5 382v3M125.5 385v2M126.5 387v2M127.5 389v1M127 390.5h1M128 391.5h1M129 392.5h1M130 393.5h1M131 394.5h1M132.5 395v1M133.5 396v2M134.5 398v1M135.5 399v1M136.5 400v2M137.5 402v1M138.5 403v1M139.5 404v2M140.5 406v1M141.5 407v1M142 408.5h1M143 409.5h1M144 410.5h2M146 411.5h1M147 412.5h1M148 413.5h1M149 414.5h2M151 415.5h1M152 416.5h1M153 417.5h2M155 418.5h2M157 419.5h3M160 418.5h2M162 418.5h3M165 417.5h2M167 417.5h3M170 416.5h2M172 416.5h1M173 415.5h1M174 414.5h2M176 413.5h1M177 412.5h2M179 411.5h2M181 410.5h1M182 410.5h1M183 409.5h1M184 408.5h2M186 407.5h1M187.5 406v1M188.5 404v2M189.5 403v1M190.5 402v1M191.5 400v2M192.5 399v1M193.5 398v1M194.5 396v2M195.5 395v1M196.5 394v1M197.5 393v1M198.5 392v1M199.5 390v2M200.5 389v1M201.5 388v1M202 387.5h5M207.5 386v2M208.5 382v4M209.5 378v4M210.5 374v4M211.5 370v4M212.5 369v1M212.5 368v1M213.5 366v2M214.5 365v1M215.5 364v1M216.5 362v2M217.5 360v2M218.5 358v2M219.5 355v3M220.5 352v3M221.5 350v2M222.5 349v1M222.5 348v1M223.5 346v2M224.5 344v2M225.5 343v1M226.5 341v2M227 340.5h2M229 341.5h2M231 342.5h1M232 342.5h2M234 341.5h2M236 340.5h1M237 340.5h2M239 339.5h2M241 338.5h1M242 338.5h3M245 337.5h2M247 337.5h2M249 336.5h2M251 335.5h1M252 335.5h3M255 334.5h2M257 334.5h5M262 334.5h3M265 335.5h2M267 335.5h1M268 336.5h1M269 337.5h2M271 338.5h1M272 339.5h3M275 340.5h2M277 340.5h3M280 339.5h2M282 339.5h5M287 339.5h3M290 338.5h2M292 338.5h5M297 338.5h3M300 339.5h2M302 339.5h5M307 339.5h3M310 340.5h2M312 340.5h3M315 339.5h2M317 339.5h5M322 339.5h5M327 339.5h3M330 338.5h2M332 338.5h2M334 339.5h2M336 340.5h1M337 340.5h1M338 341.5h2M340 342.5h2M342 343.5h3M345 344.5h2M347 344.5h3M350 345.5h2M352 345.5h5M357 345.5h5M362 345.5h5M367 345.5h2M369 344.5h2M371 343.5h1M372 343.5h5M377 343.5h1M378 344.5h2M380 345.5h2M382 346.5h5M387 346.5h3M390 345.5h2M392 345.5h5M397 345.5h5M402 345.5h5M407 345.5h5M412 345.5h5M417 345.5h3M420 346.5h2M422 346.5h2M424 347.5h2M426 348.5h1M427 348.5h2M429 349.5h2M431 350.5h1M432 350.5h5M437 350.5h3M440 349.5h2M442 349.5h3M445 350.5h2M447 350.5h5M452 350.5h5M457 350.5h3M460 349.5h2M462 349.5h2M464 350.5h2M466 351.5h1M467 351.5h2M469 352.5h2M471 353.5h1M472 353.5h3M475 354.5h2M477 354.5h3M480 355.5h2M482 355.5h3M485 356.5h2M487 356.5h2M489 357.5h2M491 358.5h1M492 358.5h5M497 358.5h5M502 358.5h3M505 357.5h2M507 357.5h2M509 356.5h2M511 355.5h1M512 355.5h2M514 354.5h2M516 353.5h1M517 353.5h1M518 352.5h1M519 351.5h1M520 350.5h1M521 349.5h1M522.5 348v1M523.5 347v1M524.5 345v2M525.5 344v1M526.5 343v1M527.5 342v1M528.5 340v2M529.5 338v2M530.5 337v1M531.5 335v2M532.5 334v1M533.5 332v2M534.5 331v1M535.5 330v1M536.5 328v2M537 327.5h1M538 326.5h2M540 325.5h2M542 324.5h1M543 323.5h1M544 322.5h2M546 321.5h1M547 320.5h1M548 319.5h2M550 318.5h2M552.5 317v1M553.5 315v2M554.5 314v1M555.5 313v1M556.5 311v2M557.5 310v1M558.5 309v1M559.5 307v2M560.5 306v1M561.5 305v1M562 304.5h2M564 303.5h2M566 302.5h1M567 302.5h3M570 301.5h2M572 301.5h3M575 300.5h2M577 300.5h2M579 301.5h2M581 302.5h1M582.5 302v1M583.5 303v2M584.5 305v1M585.5 306v1M586.5 307v2M587 309.5h1M588 310.5h1M589 311.5h1M590 312.5h1M591 313.5h1M592.5 314v2M593.5 316v3M594.5 319v3M595.5 322v3M596.5 325v3M597.5 328v1M597.5 329v2M598.5 331v3M599.5 334v4M600.5 338v3M601.5 341v3M602.5 344v1M602.5 345v2M603.5 347v4M604.5 351v4M605.5 355v3M606.5 358v4M607.5 362v1M607.5 363v2M608.5 365v2M609.5 367v2M610.5 369v2M611.5 371v2M612.5 373v1M612.5 374v2M613.5 376v2M614.5 378v2M615.5 380v2M616.5 382v2M617.5 384v1M617.5 385v2M618.5 387v2M619.5 389v2M620.5 391v2M621.5 393v2M622.5 395v1M623.5 396v1M624.5 397v2M625.5 399v1M626.5 400v1M627.5 401v1M628.5 402v1M629.5 403v2M630.5 405v1M631.5 406v1M632 407.5h1M633 408.5h1M634 409.5h1M635 410.5h1M636 411.5h1M637 412.5h1M638 413.5h1M639 414.5h1M640 415.5h1M641 416.5h1M642.5 417v1M643.5 418v2M644.5 420v1M645.5 421v1M646.5 422v2M647.5 424v1M648.5 425v2M649.5 427v2M650.5 429v1M651.5 430v2M652 432.5h1M653 433.5h1M654 434.5h2M656 435.5h1M657 436.5h1M658 437.5h2M660 438.5h2M662 439.5h3M665 440.5h2M667 440.5h5M672 440.5h1M673 439.5h1M674 438.5h2M676 437.5h1M677.5 436v1M678.5 434v2M679.5 433v1M680.5 432v1M681.5 430v2M682 429.5h1M683 428.5h1M684 427.5h2M686 426.5h1M687.5 425v1M688.5 423v2M689.5 421v2M690.5 419v2M691.5 417v2M692 416.5h1M693 415.5h2M695 414.5h2M697 413.5h3M700 414.5h2M702 414.5h1M703 415.5h1M704 416.5h1M705 417.5h1M706 418.5h1M707 419.5h5M712 419.5h3M715 420.5h2M717 420.5h3M720 421.5h2M722 421.5h1M723 422.5h2M725 423.5h2M727 424.5h3M730 425.5h2M732 425.5h1M733 426.5h2M735 427.5h2M737 428.5h5M742 428.5h5M747 428.5h3M750 427.5h2M752 427.5h5M757 427.5h3M760 428.5h2M762.5 428v1M763.5 429v1M764.5 430v2M765.5 432v1M766.5 433v1M767 434.5h3M770 435.5h2M772 435.5h3M775 436.5h2M777 436.5h5M782 436.5h3M785 435.5h2M787 435.5h2M789 434.5h2M791 433.5h1M792 433.5h3M795 434.5h2M797 434.5h1M798 435.5h2M800 436.5h2M802 437.5h3M805 438.5h2M807 438.5h5M812 438.5h5M817 438.5h5M822 438.5h3M825 437.5h2M827 437.5h5M832 437.5h5M837 437.5h5M842 437.5h3M845 436.5h2M847 436.5h5M852 436.5h5M857 436.5h5M862 436.5h1M863 435.5h1M864 434.5h1M865 433.5h1M866 432.5h1M867 431.5h5M872 431.5h5M877 431.5h2M879 432.5h2M881 433.5h1M882 433.5h5M887 433.5h2M889 432.5h2M891 431.5h1M892 431.5h1M893 430.5h2M895 429.5h2M897.5 428v1M898.5 426v2M899.5 425v1M900.5 424v1M901.5 422v2M902 421.5h1M903 420.5h1M904 419.5h2M906 418.5h1M907 417.5h3M910 416.5h2M912 416.5h5M917 416.5h1M918 417.5h1M919 418.5h1M920 419.5h1M921 420.5h1M922 421.5h1M923 422.5h1M924 423.5h2M926 424.5h1M927 425.5h3M930 426.5h2M932 426.5h1M933 427.5h2M935 428.5h2M937 429.5h1M938 430.5h1M939 431.5h2M941 432.5h1M942 433.5h2M944 434.5h2M946 435.5h1M947 435.5h1M948 436.5h1M949 437.5h2M951 438.5h1M952 439.5h1M953 440.5h1M954 441.5h1M955 442.5h1M956 443.5h1M957 444.5h1M958 445.5h1M959 446.5h2M961 447.5h1M962.5 448v1M963.5 449v2M964.5 451v2M965.5 453v1M966.5 454v2M967.5 456v1M968.5 457v1M969.5 458v2M970.5 460v1M971.5 461v1M972 462.5h2M974 463.5h2M976 464.5h1M977 464.5h2M979 463.5h2M981 462.5h1M982 462.5h2M984 461.5h2M986 460.5h1M987 460.5h3M990 459.5h2M992 459.5h5M997 459.5h2M999 458.5h2M1001 457.5h1M1002 457.5h5M1007 457.5h5M1012 457.5h3M1015 456.5h2M1017 456.5h5M1022 456.5h5M1027 456.5h5M1032 456.5h5M1037 456.5h3M1040 457.5h2M1042 457.5h3M1045 458.5h2M1047 458.5h3M1050 459.5h2M1052 459.5h5M1057 459.5h3M1060 458.5h2M1062 458.5h1M1063 457.5h1M1064 456.5h2M1066 455.5h1M1067.5 454v1M1068.5 453v1M1069.5 451v2M1070.5 450v1M1071.5 449v1M1072 448.5h2M1074 447.5h2M1076 446.5h1M1077 446.5h3M1080 447.5h2M1082 447.5h5M1087 447.5h5M1092 447.5h5M1097 447.5h5M1102 447.5h3M1105 448.5h2M1107 448.5h2M1109 447.5h2M1111 446.5h1M1112 446.5h3M1115 445.5h2M1117 445.5h3M1120 446.5h2M1122 446.5h1M1123 445.5h2M1125 444.5h2M1127 443.5h5M1132 443.5h5M1137 443.5h5M1142 443.5h2M1144 444.5h2M1146 445.5h1M1147 445.5h3M1150 446.5h2M1152 446.5h3M1155 447.5h2M1157 447.5h3M1160 448.5h2M1162 448.5h2M1164 449.5h2M1166 450.5h1M1167 450.5h3M1170 451.5h2M1172 451.5h5M1177 451.5h2M1179 450.5h2M1181 449.5h1M1182 449.5h2M1184 448.5h2M1186 447.5h1M1187 447.5h3M1190 446.5h2M1192 446.5h5M1197 446.5h3M1200 445.5h2M1202 445.5h1M1203 444.5h2M1205 443.5h2M1207 442.5h1M1208 441.5h1M1209 440.5h2M1211 439.5h1M1212 438.5h2M1214 437.5h2M1216 436.5h1M1217 436.5h1M1218 435.5h1M1219 434.5h1M1220 433.5h1M1221 432.5h1M1222 431.5h1M1223 430.5h1M1224 429.5h2M1226 428.5h1M1227.5 427v1M1228.5 425v2M1229.5 424v1M1230.5 423v1M1231.5 421v2M1232.5 420v1M1233.5 419v1M1234.5 417v2M1235.5 416v1M1236.5 415v1M1237 414.5h2M1239 413.5h2M1241 412.5h1M1242 412.5h3M1245 411.5h2M1247 411.5h1M1248 412.5h2M1250 413.5h2M1252 414.5h2M1254 415.5h2M1256 416.5h1M1257 416.5h3M1260 417.5h2M1262 417.5h2M1264 418.5h2M1266 419.5h1M1267 419.5h5M1272 419.5h5M1277 419.5h1M1278 418.5h2M1280 417.5h2M1282 416.5h2M1284 415.5h2M1286 414.5h1M1287 414.5h1M1288 413.5h2M1290 412.5h2M1292 411.5h1M1293 410.5h1M1294 409.5h2M1296 408.5h1M1297 407.5h1M1298 406.5h1M1299 405.5h1M1300 404.5h1M1301 403.5h1M1302 402.5h1M1303 401.5h1M1304 400.5h1M1305 399.5h1M1306 398.5h1M1307.5 397v1M1308.5 396v1M1309.5 394v2M1310.5 393v1M1311.5 392v1M1312.5 391v1M1313.5 390v1M1314.5 388v2M1315.5 387v1M1316.5 386v1M1317.5 385v1M1318.5 384v1M1319.5 382v2M1320.5 381v1M1321.5 380v1M1322.5 379v1M1323.5 377v2M1324.5 376v1M1325.5 375v1M1326.5 373v2M1327.5 372v1M1328.5 370v2M1329.5 368v2M1330.5 366v2M1331.5 364v2M1332.5 363v1M1333.5 361v2M1334.5 359v2M1335.5 357v2M1336.5 355v2M1337 354.5h1M1338 353.5h1M1339 352.5h2M1341 351.5h1M1342 350.5h1M1343 349.5h1M1344 348.5h2M1346 347.5h1M1347 346.5h2M1349 345.5h2M1351 344.5h1M1352 344.5h2M1354 343.5h2M1356 342.5h1M1357 342.5h1M1358 341.5h1M1359 340.5h2M1361 339.5h1M1362 338.5h2M1364 337.5h2M1366 336.5h1M1367 336.5h1M1368 335.5h2M1370 334.5h2M1372 333.5h2M1374 332.5h2M1376 331.5h1M1377 331.5h2M1379 330.5h2M1381 329.5h1M1382 329.5h3M1385 328.5h2M1387 328.5h2M1389 327.5h2M1391 326.5h1M1392 326.5h1M1393 325.5h2M1395 324.5h2M1397 323.5h1M1398 322.5h2M1400 321.5h2M1402 320.5h1M1403 319.5h1M1404 318.5h2M1406 317.5h1M1407 316.5h1M1408 315.5h1M1409 314.5h2M1411 313.5h1M1412 312.5h1M1413 311.5h1M1414 310.5h1M1415 309.5h1M1416 308.5h1M1417 307.5h1M1418 308.5h2M1420 309.5h2M1422.5 310v1M1423.5 311v2M1424.5 313v2M1425.5 315v1M1426.5 316v2M1427.5 318v1M1428.5 319v1M1429.5 320v2M1430.5 322v1M1431.5 323v1M1432.5 324v1M1433.5 325v2M1434.5 327v2M1435.5 329v1M1436.5 330v2M1437 332.5h1M1438 333.5h1M1439 334.5h1M1440 335.5h1M1441 336.5h1M1442 337.5h1M1443 338.5h2M1445 339.5h2M1447.5 340v1M1448.5 341v1M1449.5 342v2M1450.5 344v1M1451.5 345v1M1452 346.5h1M1453 347.5h1M1454 348.5h2M1456 349.5h1M1457 350.5h2M1459 351.5h2M1461 352.5h1M1462 352.5h3M1465 353.5h2M1467 353.5h1M1468 354.5h2M1470 355.5h2M1472 356.5h3M1475 357.5h2M1477 357.5h5M1482 357.5h3M1485 356.5h2M1487 356.5h2M1489 355.5h2M1491 354.5h1M1492 354.5h3M1495 353.5h2M1497 353.5h2M1499 352.5h2M1501 351.5h1M1502 351.5h1M1503 350.5h1M1504 349.5h2M1506 348.5h1" fill="none" stroke="#0060d0" stroke-width="1" shape-rendering="crispEdges"/>
<path d="M107.5 232v2M108.5 234v2M109.5 236v2M110.5 238v2M111.5 240v2M112.5 242v1M113.5 243v2M114.5 245v2M115.5 247v1M116.5 248v2M117.5 250v1M118.5 251v2M119.5 253v2M120.5 255v1M121.5 256v2M122.5 258v1M123.5 259v2M124.5 261v2M125.5 263v1M126.5 264v2M127.5 266v1M128.5 267v1M129.5 268v2M130.5 270v1M131.5 271v1M132 272.5h1M133 273.5h1M134 274.5h1M135 275.5h1M136 276.5h1M137.5 277v1M138.5 278v1M139.5 279v2M140.5 281v1M141.5 282v1M142 283.5h1M143 284.5h1M144 285.5h2M146 286.5h1M147 287.5h1M148 288.5h1M149 289.5h1M150 290.5h1M151 291.5h1M152 292.5h1M153 293.5h1M154 294.5h1M155 295.5h1M156 296.5h1M157 297.5h1M158 298.5h1M159 299.5h1M160 300.5h1M161 301.5h1M162 302.5h1M163 303.5h1M164 304.5h2M166 305.5h1M167 306.5h1M168 307.5h1M169 308.5h2M171 309.5h1M172 310.5h1M173 311.5h1M174 312.5h2M176 313.5h1M177 314.5h1M178 315.5h1M179 316.5h2M181 317.5h1M182 318.5h1M183 319.5h1M184 320.5h1M185 321.5h1M186 322.5h1M187 323.5h1M188 324.5h1M189 325.5h2M191 326.5h1M192 327.5h1M193 328.5h2M195 329.5h2M197 330.5h1M198 331.5h2M200 332.5h2M202 333.5h5M207 333.5h1M208 332.5h1M209 331.5h1M210 330.5h1M211 329.5h1M212 328.5h2M214 327.5h2M216 326.5h1M217 326.5h1M218 325.5h2M220 324.5h2M222 323.5h2M224 322.5h2M226 321.5h1M227 321.5h3M230 322.5h2M232 322.5h3M235 321.5h2M237 321.5h3M240 320.5h2M242 320.5h5M247 320.5h3M250 319.5h2M252 319.5h3M255 318.5h2M257 318.5h5M262 318.5h5M267 318.5h3M270 317.5h2M272 317.5h3M275 316.5h2M277 316.5h3M280 315.5h2M282 315.5h3M285 314.5h2M287 314.5h3M290 313.5h2M292 313.5h5M297 313.5h5M302 313.5h5M307 313.5h3M310 314.5h2M312 314.5h5M317 314.5h3M320 313.5h2M322 313.5h5M327 313.5h5M332 313.5h3M335 314.5h2M337 314.5h3M340 315.5h2M342 315.5h5M347 315.5h3M350 316.5h2M352 316.5h5M357 316.5h5M362 316.5h3M365 317.5h2M367 317.5h2M369 318.5h2M371 319.5h1M372 319.5h2M374 320.5h2M376 321.5h1M377 321.5h3M380 322.5h2M382 322.5h2M384 323.5h2M386 324.5h1M387 324.5h2M389 325.5h2M391 326.5h1M392 326.5h3M395 327.5h2M397 327.5h3M400 328.5h2M402 328.5h5M407 328.5h5M412 328.5h3M415 329.5h2M417 329.5h3M420 330.5h2M422 330.5h3M425 331.5h2M427 331.5h3M430 332.5h2M432 332.5h5M437 332.5h3M440 331.5h2M442 331.5h5M447 331.5h3M450 330.5h2M452 330.5h5M457 330.5h5M462 330.5h3M465 329.5h2M467 329.5h3M470 328.5h2M472 328.5h3M475 327.5h2M477 327.5h1M478 326.5h2M480 325.5h2M482 324.5h1M483 323.5h2M485 322.5h2M487 321.5h1M488 320.5h2M490 319.5h2M492 318.5h2M494 317.5h2M496 316.5h1M497 316.5h1M498 315.5h2M500 314.5h2M502 313.5h1M503 312.5h2M505 311.5h2M507 310.5h2M509 309.5h2M511 308.5h1M512 308.5h2M514 307.5h2M516 306.5h1M517 306.5h2M519 305.5h2M521 304.5h1M522 304.5h1M523 303.5h2M525 302.5h2M527 301.5h1M528 300.5h2M530 299.5h2M532 298.5h2M534 297.5h2M536 296.5h1M537 296.5h2M539 295.5h2M541 294.5h1M542 294.5h1M543 293.5h2M545 292.5h2M547 291.5h3M550 290.5h2M552 290.5h1M553 289.5h2M555 288.5h2M557 287.5h2M559 286.5h2M561 285.5h1M562 285.5h5M567 285.5h5M572 285.5h3M575 284.5h2M577 284.5h3M580 285.5h2M582 285.5h2M584 286.5h2M586 287.5h1M587 287.5h2M589 288.5h2M591 289.5h1M592 289.5h1M593 290.5h2M595 291.5h2M597 292.5h1M598 293.5h1M599 294.5h1M600 295.5h1M601 296.5h1M602 297.5h1M603 298.5h1M604 299.5h1M605 300.5h1M606 301.5h1M607 302.5h1M608 303.5h1M609 304.5h2M611 305.5h1M612 306.5h1M613 307.5h1M614 308.5h1M615 309.5h1M616 310.5h1M617 311.5h1M618 312.5h1M619 313.5h1M620 314.5h1M621 315.5h1M622 316.5h1M623 317.5h1M624 318.5h2M626 319.5h1M627 320.5h1M628 321.5h2M630 322.5h2M632 323.5h1M633 324.5h1M634 325.5h1M635 326.5h1M636 327.5h1M637 328.5h1M638 329.5h1M639 330.5h1M640 331.5h1M641 332.5h1M642.5 333v1M643.5 334v1M644.5 335v2M645.5 337v1M646.5 338v1M647.5 339v1M648.5 340v2M649.5 342v1M650.5 343v1M651.5 344v2M652.5 346v1M653.5 347v1M654.5 348v2M655.5 350v1M656.5 351v1M657.5 352v1M658.5 353v2M659.5 355v1M660.5 356v1M661.5 357v2M662 359.5h1M663 360.5h1M664 361.5h1M665 362.5h1M666 363.5h1M667 364.5h1M668 365.5h1M669 366.5h1M670 367.5h1M671 368.5h1M672 369.5h1M673 370.5h1M674 371.5h1M675 372.5h1M676 373.5h1M677 374.5h1M678 375.5h1M679 376.5h2M681 377.5h1M682 378.5h1M683 379.5h2M685 380.5h2M687 381.5h1M688 382.5h2M690 383.5h2M692 384.5h2M694 385.5h2M696 386.5h1M697 386.5h3M700 387.5h2M702 387.5h2M704 388.5h2M706 389.5h1M707 389.5h3M710 390.5h2M712 390.5h3M715 391.5h2M717 391.5h3M720 392.5h2M722 392.5h1M723 393.5h2M725 394.5h2M727 395.5h2M729 396.5h2M731 397.5h1M732 397.5h1M733 398.5h2M735 399.5h2M737 400.5h3M740 401.5h2M742 401.5h3M745 400.5h2M747 400.5h5M752 400.5h5M757 400.5h5M762 400.5h2M764 401.5h2M766 402.5h1M767 402.5h3M770 403.5h2M772 403.5h3M775 404.5h2M777 404.5h3M780 405.5h2M782 405.5h3M785 406.5h2M787 406.5h1M788 407.5h2M790 408.5h2M792 409.5h2M794 410.5h2M796 411.5h1M797 411.5h2M799 412.5h2M801 413.5h1M802 413.5h5M807 413.5h3M810 414.5h2M812 414.5h5M817 414.5h5M822 414.5h3M825 413.5h2M827 413.5h3M830 412.5h2M832 412.5h2M834 411.5h2M836 410.5h1M837 410.5h5M842 410.5h5M847 410.5h3M850 411.5h2M852 411.5h5M857 411.5h3M860 410.5h2M862 410.5h2M864 409.5h2M866 408.5h1M867 408.5h3M870 407.5h2M872 407.5h3M875 406.5h2M877 406.5h2M879 405.5h2M881 404.5h1M882 404.5h3M885 403.5h2M887 403.5h2M889 402.5h2M891 401.5h1M892 401.5h3M895 400.5h2M897 400.5h2M899 399.5h2M901 398.5h1M902 398.5h3M905 397.5h2M907 397.5h5M912 397.5h5M917 397.5h3M920 398.5h2M922 398.5h2M924 399.5h2M926 400.5h1M927 400.5h3M930 401.5h2M932 401.5h3M935 402.5h2M937 402.5h3M940 403.5h2M942 403.5h2M944 404.5h2M946 405.5h1M947 405.5h3M950 406.5h2M952 406.5h2M954 407.5h2M956 408.5h1M957 408.5h2M959 409.5h2M961 410.5h1M962 410.5h1M963 411.5h2M965 412.5h2M967 413.5h1M968 414.5h2M970 415.5h2M972 416.5h1M973 417.5h2M975 418.5h2M977 419.5h2M979 420.5h2M981 421.5h1M982 421.5h1M983 422.5h2M985 423.5h2M987 424.5h3M990 425.5h2M992 425.5h5M997 425.5h3M1000 426.5h2M1002 426.5h5M1007 426.5h5M1012 426.5h5M1017 426.5h5M1022 426.5h3M1025 425.5h2M1027 425.5h3M1030 426.5h2M1032 426.5h5M1037 426.5h5M1042 426.5h3M1045 427.5h2M1047 427.5h5M1052 427.5h5M1057 427.5h3M1060 426.5h2M1062 426.5h3M1065 425.5h2M1067 425.5h3M1070 424.5h2M1072 424.5h3M1075 423.5h2M1077 423.5h5M1082 423.5h3M1085 424.5h2M1087 424.5h5M1092 424.5h3M1095 425.5h2M1097 425.5h3M1100 426.5h2M1102 426.5h5M1107 426.5h2M1109 427.5h2M1111 428.5h1M1112 428.5h3M1115 429.5h2M1117 429.5h3M1120 430.5h2M1122 430.5h5M1127 430.5h3M1130 431.5h2M1132 431.5h3M1135 432.5h2M1137 432.5h3M1140 431.5h2M1142 431.5h2M1144 430.5h2M1146 429.5h1M1147 429.5h2M1149 428.5h2M1151 427.5h1M1152 427.5h2M1154 426.5h2M1156 425.5h1M1157 425.5h3M1160 424.5h2M1162 424.5h1M1163 423.5h2M1165 422.5h2M1167 421.5h3M1170 420.5h2M1172 420.5h2M1174 419.5h2M1176 418.5h1M1177 418.5h2M1179 417.5h2M1181 416.5h1M1182 416.5h2M1184 415.5h2M1186 414.5h1M1187 414.5h2M1189 413.5h2M1191 412.5h1M1192 412.5h3M1195 411.5h2M1197 411.5h2M1199 410.5h2M1201 409.5h1M1202 409.5h2M1204 408.5h2M1206 407.5h1M1207 407.5h2M1209 406.5h2M1211 405.5h1M1212 405.5h1M1213 404.5h2M1215 403.5h2M1217 402.5h1M1218 401.5h2M1220 400.5h2M1222 399.5h2M1224 398.5h2M1226 397.5h1M1227 397.5h1M1228 396.5h2M1230 395.5h2M1232 394.5h1M1233 393.5h2M1235 392.5h2M1237 391.5h1M1238 390.5h2M1240 389.5h2M1242 388.5h1M1243 387.5h2M1245 386.5h2M1247 385.5h1M1248 384.5h2M1250 383.5h2M1252 382.5h1M1253 381.5h2M1255 380.5h2M1257 379.5h1M1258 378.5h2M1260 377.5h2M1262 376.5h1M1263 375.5h2M1265 374.5h2M1267 373.5h1M1268 372.5h1M1269 371.5h2M1271 370.5h1M1272 369.5h1M1273 368.5h1M1274 367.5h2M1276 366.5h1M1277 365.5h1M1278 364.5h1M1279 363.5h2M1281 362.5h1M1282 361.5h1M1283 360.5h1M1284 359.5h2M1286 358.5h1M1287 357.5h1M1288 356.5h1M1289 355.5h2M1291 354.5h1M1292 353.5h1M1293 352.5h1M1294 351.5h2M1296 350.5h1M1297 349.5h1M1298 348.5h1M1299 347.5h2M1301 346.5h1M1302 345.5h1M1303 344.5h1M1304 343.5h2M1306 342.5h1M1307 341.5h1M1308 340.5h2M1310 339.5h2M1312 338.5h1M1313 337.5h2M1315 336.5h2M1317 335.5h1M1318 334.5h2M1320 333.5h2M1322 332.5h1M1323 331.5h1M1324 330.5h1M1325 329.5h1M1326 328.5h1M1327 327.5h1M1328 326.5h1M1329 325.5h2M1331 324.5h1M1332 323.5h1M1333 322.5h1M1334 321.5h2M1336 320.5h1M1337 319.5h1M1338 318.5h1M1339 317.5h2M1341 316.5h1M1342 315.5h1M1343 314.5h1M1344 313.5h2M1346 312.5h1M1347 311.5h1M1348 310.5h2M1350 309.5h2M1352 308.5h1M1353 307.5h2M1355 306.5h2M1357 305.5h1M1358 304.5h2M1360 303.5h2M1362 302.5h1M1363 301.5h2M1365 300.5h2M1367 299.5h2M1369 298.5h2M1371 297.5h1M1372 297.5h3M1375 296.5h2M1377 296.5h1M1378 295.5h2M1380 294.5h2M1382 293.5h2M1384 292.5h2M1386 291.5h1M1387 291.5h2M1389 290.5h2M1391 289.5h1M1392 289.5h2M1394 288.5h2M1396 287.5h1M1397 287.5h2M1399 286.5h2M1401 285.5h1M1402 285.5h3M1405 284.5h2M1407 284.5h3M1410 283.5h2M1412 283.5h3M1415 282.5h2M1417 282.5h3M1420 283.5h2M1422 283.5h3M1425 284.5h2M1427 284.5h2M1429 285.5h2M1431 286.5h1M1432 286.5h2M1434 287.5h2M1436 288.5h1M1437 288.5h2M1439 289.5h2M1441 290.5h1M1442 290.5h1M1443 291.5h2M1445 292.5h2M1447 293.5h1M1448 294.5h2M1450 295.5h2M1452 296.5h1M1453 297.5h2M1455 298.5h2M1457 299.5h2M1459 300.5h2M1461 301.5h1M1462 301.5h2M1464 302.5h2M1466 303.5h1M1467 303.5h2M1469 304.5h2M1471 305.5h1M1472 305.5h1M1473 306.5h2M1475 307.5h2M1477 308.5h1M1478 309.5h2M1480 310.5h2M1482 311.5h1M1483 312.5h2M1485 313.5h2M1487 314.5h1M1488 315.5h2M1490 316.5h2M1492 317.5h2M1494 318.5h2M1496 319.5h1M1497 319.5h1M1498 320.5h1M1499 321.5h2M1501 322.5h1M1502 323.5h1M1503 324.5h2M1505 325.5h2" fill="none" stroke="#008040" stroke-width="1" shape-rendering="crispEdges"/>
<path d="M32 208.5h2M34 209.5h2M36 210.5h1M37 210.5h1M38 211.5h1M39 212.5h1M40 213.5h1M41 214.5h1M42.5 215v1M43.5 216v2M44.5 218v1M45.5 219v1M46.5 220v2M47.5 222v1M48.5 223v1M49.5 224v2M50.5 226v1M51.5 227v1M52 228.5h1M53 229.5h1M54 230.5h2M56 231.5h1M57 232.5h2M59 231.5h2M61 230.5h1M62 230.5h3M65 231.5h2M67 231.5h2M69 230.5h2M71 229.5h1M72 229.5h1M73 228.5h2M75 227.5h2M77 226.5h2M79 227.5h2M81 228.5h1M82 228.5h1M83 229.5h1M84 230.5h1M85 231.5h1M86 232.5h1M87 233.5h2M89 232.5h2M91 231.5h1M92 231.5h1M93 232.5h2M95 233.5h2M97.5 234v1M98.5 235v2M99.5 237v2M100.5 239v1M101.5 240v2M102.5 242v2M103.5 244v4M104.5 248v3M105.5 251v3M106.5 254v4M107.5 258v1M107.5 259v4M108.5 263v7M109.5 270v7M110.5 277v7M111.5 284v7M112.5 291v3M112.5 294v3M113.5 297v6M114.5 303v6M115.5 309v5M116.5 314v6M117.5 320v2M117.5 322v3M118.5 325v6M119.5 331v5M120.5 336v5M121.5 341v6M122.5 347v2M122.5 349v3M123.5 352v4M124.5 356v4M125.5 360v4M126.5 364v4M127.5 368v1M127 369.5h5M132.5 368v2M133.5 365v3M134.5 361v4M135.5 358v3M136.5 355v3M137.5 354v1M137.5 353v1M138.5 352v1M139.5 350v2M140.5 349v1M141.5 348v1M142.5 346v2M143.5 344v2M144.5 342v2M145.5 340v2M146.5 338v2M147.5 337v1M147 336.5h1M148 335.5h1M149 334.5h1M150 333.5h1M151 332.5h1M152 331.5h1M153 332.5h2M155 333.5h2M157 334.5h1M158 333.5h1M159 332.5h1M160 331.5h1M161 330.5h1M162.5 329v1M163.5 328v1M164.5 326v2M165.5 325v1M166.5 324v1M167 323.5h1M168 322.5h2M170 321.5h2M172 320.5h1M173 319.5h1M174 318.5h1M175 317.5h1M176 316.5h1M177 315.5h2M179 314.5h2M181 313.5h1M182 313.5h2M184 314.5h2M186 315.5h1M187 315.5h1M188 316.5h2M190 317.5h2M192 318.5h3M195 317.5h2M197 317.5h5M202 317.5h3M205 318.5h2M207 318.5h3M210 317.5h2M212 317.5h3M215 316.5h2M217 316.5h1M218 317.5h2M220 318.5h2M222 319.5h1M223 320.5h2M225 321.5h2M227 322.5h2M229 323.5h2M231 324.5h1M232 324.5h3M235 325.5h2M237 325.5h5M242 325.5h2M244 324.5h2M246 323.5h1M247 323.5h2M249 322.5h2M251 321.5h1M252 321.5h2M254 320.5h2M256 319.5h1M257 319.5h2M259 318.5h2M261 317.5h1M262 317.5h1M263 316.5h2M265 315.5h2M267.5 314v1M268.5 312v2M269.5 311v1M270.5 310v1M271.5 308v2M272 307.5h1M273 306.5h2M275 305.5h2M277 304.5h1M278 303.5h1M279 302.5h1M280 301.5h1M281 300.5h1M282 299.5h2M284 298.5h2M286 297.5h1M287 297.5h5M292 297.5h1M293 298.5h1M294 299.5h1M295 300.5h1M296 301.5h1M297 302.5h1M298 303.5h1M299 304.5h2M301 305.5h1M302 306.5h1M303 307.5h1M304 308.5h1M305 309.5h1M306 310.5h1M307 311.5h1M308 312.5h1M309 313.5h2M311 314.5h1M312 315.5h1M313 316.5h1M314 317.5h2M316 318.5h1M317 319.5h2M319 320.5h2M321 321.5h1M322 321.5h3M325 322.5h2M327 322.5h3M330 323.5h2M332 323.5h2M334 324.5h2M336 325.5h1M337 325.5h1M338 326.5h1M339 327.5h1M340 328.5h1M341 329.5h1M342 330.5h5M347 330.5h2M349 331.5h2M351 332.5h1M352 332.5h3M355 331.5h2M357 331.5h1M358 330.5h1M359 329.5h2M361 328.5h1M362.5 327v1M363.5 326v1M364.5 324v2M365.5 323v1M366.5 322v1M367 321.5h5M372 321.5h3M375 322.5h2M377 322.5h1M378 323.5h2M380 324.5h2M382 325.5h1M383 326.5h1M384 327.5h1M385 328.5h1M386 329.5h1M387 330.5h1M388 331.5h1M389 332.5h1M390 333.5h1M391 334.5h1M392 335.5h3M395 336.5h2M397 336.5h5M402 336.5h2M404 335.5h2M406 334.5h1M407 334.5h2M409 333.5h2M411 332.5h1M412 332.5h2M414 331.5h2M416 330.5h1M417 330.5h2M419 331.5h2M421 332.5h1M422 332.5h2M424 333.5h2M426 334.5h1M427 334.5h2M429 335.5h2M431 336.5h1M432 336.5h2M434 337.5h2M436 338.5h1M437 338.5h3M440 337.5h2M442 337.5h1M443 336.5h1M444 335.5h2M446 334.5h1M447.5 333v1M448.5 332v1M449.5 330v2M450.5 329v1M451.5 328v1M452 327.5h1M453 326.5h1M454 325.5h2M456 324.5h1M457 323.5h1M458 322.5h1M459 321.5h2M461 320.5h1M462 319.5h1M463 318.5h2M465 317.5h2M467 316.5h1M468 315.5h1M469 314.5h2M471 313.5h1M472 312.5h1M473 311.5h2M475 310.5h2M477.5 309v1M478.5 307v2M479.5 306v1M480.5 305v1M481.5 303v2M482.5 302v1M483.5 301v1M484.5 299v2M485.5 298v1M486.5 297v1M487.5 296v1M488.5 295v1M489.5 293v2M490.5 292v1M491.5 291v1M492 290.5h1M493 289.5h1M494 288.5h1M495 287.5h1M496 286.5h1M497 285.5h1M498 284.5h1M499 283.5h1M500 282.5h1M501 281.5h1M502 280.5h2M504 279.5h2M506 278.5h1M507 278.5h3M510 279.5h2M512 279.5h2M514 280.5h2M516 281.5h1M517 281.5h1M518 282.5h2M520 283.5h2M522 284.5h1M523 285.5h2M525 286.5h2M527 287.5h1M528 288.5h2M530 289.5h2M532 290.5h3M535 289.5h2M537 289.5h3M540 288.5h2M542 288.5h1M543 287.5h1M544 286.5h2M546 285.5h1M547 284.5h3M550 283.5h2M552 283.5h1M553 282.5h1M554 281.5h2M556 280.5h1M557 279.5h3M560 278.5h2M562 278.5h2M564 279.5h2M566 280.5h1M567.5 280v1M568.5 281v1M569.5 282v2M570.5 284v1M571.5 285v1M572 286.5h2M574 287.5h2M576 288.5h1M577 288.5h1M578 289.5h1M579 290.5h1M580 291.5h1M581 292.5h1M582.5 293v1M583.5 294v2M584.5 296v1M585.5 297v1M586.5 298v2M587 300.5h1M588 301.5h1M589 302.5h1M590 303.5h1M591 304.5h1M592.5 305v2M593.5 307v2M594.5 309v2M595.5 311v2M596.5 313v2M597.5 315v2M598.5 317v3M599.5 320v4M600.5 324v3M601.5 327v3M602.5 330v1M602.5 331v2M603.5 333v3M604.5 336v4M605.5 340v3M606.5 343v3M607.5 346v1M607.5 347v2M608.5 349v2M609.5 351v3M610.5 354v2M611.5 356v2M612.5 358v1M612.5 359v2M613.5 361v2M614.5 363v3M615.5 366v2M616.5 368v2M617.5 370v1M617.5 371v1M618.5 372v2M619.5 374v1M620.5 375v1M621.5 376v2M622 378.5h3M625 377.5h2M627 377.5h1M628 376.5h2M630 375.5h2M632 374.5h5M637 374.5h3M640 375.5h2M642 375.5h1M643 376.5h1M644 377.5h2M646 378.5h1M647.5 379v1M648.5 380v2M649.5 382v2M650.5 384v2M651.5 386v2M652.5 388v1M653.5 389v2M654.5 391v1M655.5 392v1M656.5 393v2M657.5 395v1M658.5 396v2M659.5 398v2M660.5 400v1M661.5 401v2M662 403.5h1M663 404.5h2M665 405.5h2M667 406.5h2M669 405.5h2M671 404.5h1M672 404.5h1M673 403.5h1M674 402.5h2M676 401.5h1M677 400.5h1M678 399.5h1M679 398.5h2M681 397.5h1M682.5 396v1M683.5 395v1M684.5 393v2M685.5 392v1M686.5 391v1M687 390.5h1M688 389.5h1M689 388.5h1M690 387.5h1M691 386.5h1M692 385.5h1M693 384.5h2M695 383.5h2M697 382.5h3M700 383.5h2M702.5 383v1M703.5 384v2M704.5 386v1M705.5 387v1M706.5 388v2M707 390.5h1M708 391.5h1M709 392.5h2M711 393.5h1M712 394.5h1M713 395.5h1M714 396.5h1M715 397.5h1M716 398.5h1M717 399.5h1M718 400.5h1M719 401.5h2M721 402.5h1M722 403.5h1M723 404.5h1M724 405.5h2M726 406.5h1M727 407.5h5M732 407.5h1M733 408.5h1M734 409.5h1M735 410.5h1M736 411.5h1M737 412.5h2M739 413.5h2M741 414.5h1M742 414.5h1M743 413.5h2M745 412.5h2M747 411.5h1M748 410.5h2M750 409.5h2M752 408.5h2M754 407.5h2M756 406.5h1M757 406.5h3M760 405.5h2M762 405.5h1M763 406.5h1M764 407.5h1M765 408.5h1M766 409.5h1M767 410.5h1M768 411.5h1M769 412.5h1M770 413.5h1M771 414.5h1M772 415.5h2M774 416.5h2M776 417.5h1M777 417.5h3M780 418.5h2M782 418.5h1M783 417.5h2M785 416.5h2M787 415.5h1M788 414.5h2M790 413.5h2M792 412.5h1M793 413.5h2M795 414.5h2M797 415.5h1M798 416.5h1M799 417.5h2M801 418.5h1M802 419.5h1M803 420.5h1M804 421.5h2M806 422.5h1M807 423.5h3M810 424.5h2M812 424.5h1M813 423.5h1M814 422.5h2M816 421.5h1M817.5 420v1M818.5 419v1M819.5 417v2M820.5 416v1M821.5 415v1M822.5 414v1M823.5 412v2M824.5 410v2M825.5 409v1M826.5 407v2M827 406.5h1M828 405.5h1M829 404.5h2M831 403.5h1M832 402.5h1M833 401.5h1M834 400.5h1M835 399.5h1M836 398.5h1M837 397.5h3M840 398.5h2M842 398.5h3M845 397.5h2M847 397.5h1M848 398.5h2M850 399.5h2M852 400.5h3M855 401.5h2M857 401.5h3M860 402.5h2M862 402.5h3M865 401.5h2M867 401.5h3M870 402.5h2M872 402.5h1M873 401.5h1M874 400.5h1M875 399.5h1M876 398.5h1M877.5 397v1M878.5 395v2M879.5 394v1M880.5 393v1M881.5 391v2M882 390.5h2M884 389.5h2M886 388.5h1M887 388.5h2M889 387.5h2M891 386.5h1M892 386.5h1M893 387.5h2M895 388.5h2M897 389.5h2M899 390.5h2M901 391.5h1M902 391.5h1M903 392.5h1M904 393.5h1M905 394.5h1M906 395.5h1M907.5 396v1M908.5 397v1M909.5 398v2M910.5 400v1M911.5 401v1M912 402.5h2M914 403.5h2M916 404.5h1M917 404.5h2M919 405.5h2M921 406.5h1M922.5 406v1M923.5 407v1M924.5 408v2M925.5 410v1M926.5 411v1M927 412.5h1M928 413.5h2M930 414.5h2M932 415.5h2M934 416.5h2M936 417.5h1M937.5 417v1M938.5 418v1M939.5 419v2M940.5 421v1M941.5 422v1M942 423.5h5M947 423.5h2M949 424.5h2M951 425.5h1M952 425.5h1M953 426.5h1M954 427.5h1M955 428.5h1M956 429.5h1M957 430.5h1M958 431.5h1M959 432.5h2M961 433.5h1M962 434.5h1M963 435.5h1M964 436.5h1M965 437.5h1M966 438.5h1M967.5 439v1M968.5 440v2M969.5 442v1M970.5 443v1M971.5 444v2M972 446.5h3M975 447.5h2M977 447.5h2M979 446.5h2M981 445.5h1M982 445.5h2M984 444.5h2M986 443.5h1M987.5 443v1M988.5 441v2M989.5 439v2M990.5 437v2M991.5 435v2M992.5 434v1M993.5 432v2M994.5 430v2M995.5 428v2M996.5 426v2M997.5 425v1M998.5 423v2M999.5 422v1M1000.5 421v1M1001.5 419v2M1002 418.5h2M1004 417.5h2M1006 416.5h1M1007 416.5h1M1008 415.5h1M1009 414.5h1M1010 413.5h1M1011 412.5h1M1012 411.5h2M1014 410.5h2M1016 409.5h1M1017 409.5h2M1019 410.5h2M1021 411.5h1M1022 411.5h3M1025 412.5h2M1027 412.5h5M1032 412.5h1M1033 413.5h1M1034 414.5h2M1036 415.5h1M1037 416.5h1M1038 417.5h1M1039 418.5h1M1040 419.5h1M1041 420.5h1M1042 421.5h1M1043 422.5h2M1045 423.5h2M1047.5 424v1M1048.5 425v2M1049.5 427v1M1050.5 428v1M1051.5 429v2M1052 431.5h1M1053 432.5h1M1054 433.5h2M1056 434.5h1M1057 435.5h3M1060 436.5h2M1062 436.5h5M1067 436.5h2M1069 435.5h2M1071 434.5h1M1072 434.5h2M1074 433.5h2M1076 432.5h1M1077 432.5h2M1079 431.5h2M1081 430.5h1M1082 430.5h2M1084 431.5h2M1086 432.5h1M1087 432.5h2M1089 431.5h2M1091 430.5h1M1092 430.5h3M1095 429.5h2M1097 429.5h3M1100 428.5h2M1102 428.5h5M1107 428.5h5M1112 428.5h5M1117 428.5h1M1118 429.5h1M1119 430.5h2M1121 431.5h1M1122 432.5h3M1125 431.5h2M1127 431.5h5M1132 431.5h3M1135 430.5h2M1137 430.5h2M1139 429.5h2M1141 428.5h1M1142 428.5h1M1143 427.5h1M1144 426.5h1M1145 425.5h1M1146 424.5h1M1147 423.5h1M1148 422.5h1M1149 421.5h1M1150 420.5h1M1151 419.5h1M1152.5 418v1M1153.5 416v2M1154.5 415v1M1155.5 414v1M1156.5 412v2M1157.5 411v1M1158.5 410v1M1159.5 408v2M1160.5 407v1M1161.5 406v1M1162.5 405v1M1163.5 404v1M1164.5 402v2M1165.5 401v1M1166.5 400v1M1167 399.5h1M1168 398.5h2M1170 397.5h2M1172 396.5h2M1174 395.5h2M1176 394.5h1M1177 394.5h5M1182 394.5h3M1185 393.5h2M1187 393.5h2M1189 394.5h2M1191 395.5h1M1192 395.5h3M1195 394.5h2M1197 394.5h5M1202 394.5h1M1203 393.5h2M1205 392.5h2M1207 391.5h2M1209 390.5h2M1211 389.5h1M1212 389.5h1M1213 388.5h2M1215 387.5h2M1217 386.5h2M1219 385.5h2M1221 384.5h1M1222 384.5h2M1224 383.5h2M1226 382.5h1M1227 382.5h2M1229 381.5h2M1231 380.5h1M1232 380.5h1M1233 379.5h2M1235 378.5h2M1237 377.5h1M1238 376.5h1M1239 375.5h2M1241 374.5h1M1242 373.5h1M1243 372.5h1M1244 371.5h1M1245 370.5h1M1246 369.5h1M1247.5 368v1M1248.5 366v2M1249.5 364v2M1250.5 363v1M1251.5 361v2M1252.5 360v1M1253.5 358v2M1254.5 356v2M1255.5 354v2M1256.5 352v2M1257.5 351v1M1258.5 349v2M1259.5 348v1M1260.5 347v1M1261.5 345v2M1262.5 344v1M1263.5 343v1M1264.5 341v2M1265.5 340v1M1266.5 339v1M1267.5 338v1M1268.5 336v2M1269.5 335v1M1270.5 334v1M1271.5 332v2M1272 331.5h1M1273 330.5h1M1274 329.5h1M1275 328.5h1M1276 327.5h1M1277 326.5h1M1278 325.5h2M1280 324.5h2M1282 323.5h1M1283 322.5h1M1284 321.5h2M1286 320.5h1M1287 319.5h1M1288 318.5h2M1290 317.5h2M1292 316.5h2M1294 315.5h2M1296 314.5h1M1297 314.5h2M1299 313.5h2M1301 312.5h1M1302 312.5h3M1305 311.5h2M1307 311.5h3M1310 312.5h2M1312 312.5h1M1313 313.5h2M1315 314.5h2M1317 315.5h3M1320 314.5h2M1322 314.5h1M1323 313.5h1M1324 312.5h2M1326 311.5h1M1327 310.5h1M1328 309.5h2M1330 308.5h2M1332 307.5h1M1333 306.5h1M1334 305.5h1M1335 304.5h1M1336 303.5h1M1337.5 302v1M1338.5 300v2M1339.5 298v2M1340.5 296v2M1341.5 294v2M1342.5 293v1M1343.5 292v1M1344.5 290v2M1345.5 289v1M1346.5 288v1M1347 287.5h1M1348 286.5h1M1349 285.5h2M1351 284.5h1M1352 283.5h1M1353 282.5h1M1354 281.5h1M1355 280.5h1M1356 279.5h1M1357 278.5h1M1358 277.5h2M1360 276.5h2M1362 275.5h2M1364 274.5h2M1366 273.5h1M1367 273.5h1M1368 274.5h2M1370 275.5h2M1372 276.5h2M1374 277.5h2M1376 278.5h1M1377 278.5h2M1379 277.5h2M1381 276.5h1M1382 276.5h2M1384 275.5h2M1386 274.5h1M1387 274.5h5M1392 274.5h3M1395 273.5h2M1397 273.5h2M1399 272.5h2M1401 271.5h1M1402 271.5h1M1403 272.5h1M1404 273.5h2M1406 274.5h1M1407.5 275v1M1408.5 276v1M1409.5 277v2M1410.5 279v1M1411.5 280v1M1412.5 281v1M1413.5 282v2M1414.5 284v1M1415.5 285v1M1416.5 286v2M1417.5 288v1M1418.5 289v2M1419.5 291v1M1420.5 292v1M1421.5 293v2M1422.5 295v2M1423.5 297v2M1424.5 299v2M1425.5 301v2M1426.5 303v2M1427.5 305v1M1427.5 306v1M1428.5 307v2M1429.5 309v2M1430.5 311v2M1431.5 313v2M1432.5 315v1M1433.5 316v2M1434.5 318v1M1435.5 319v1M1436.5 320v2M1437 322.5h1M1438 323.5h1M1439 324.5h1M1440 325.5h1M1441 326.5h1M1442 327.5h5M1447 327.5h2M1449 328.5h2M1451 329.5h1M1452 329.5h3M1455 330.5h2M1457 330.5h1M1458 329.5h1M1459 328.5h2M1461 327.5h1M1462 326.5h3M1465 325.5h2M1467 325.5h2M1469 326.5h2M1471 327.5h1M1472 327.5h2M1474 326.5h2M1476 325.5h1M1477 325.5h5M1482 325.5h2M1484 326.5h2M1486 327.5h1M1487 327.5h3M1490 328.5h2M1492 328.5h5M1497 328.5h1M1498 329.5h1M1499 330.5h2M1501 331.5h1M1502 332.5h2M1504 333.5h2M1506 334.5h1" fill="none" stroke="#00e000" stroke-width="1" shape-rendering="crispEdges"/>
<path d="M57 220.5h5M62 220.5h1M63 221.5h2M65 222.5h2M67 223.5h2M69 224.5h2M71 225.5h1M72 225.5h2M74 226.5h2M76 227.5h1M77 227.5h1M78 228.5h2M80 229.5h2M82 230.5h3M85 231.5h2M87 231.5h5M92 231.5h5M97 231.5h1M98 232.5h2M100 233.5h2M102.5 234v1M103.5 235v2M104.5 237v2M105.5 239v2M106.5 241v2M107.5 243v3M108.5 246v4M109.5 250v4M110.5 254v4M111.5 258v4M112.5 262v2M112.5 264v2M113.5 266v2M114.5 268v3M115.5 271v2M116.5 273v2M117.5 275v1M117.5 276v2M118.5 278v3M119.5 281v4M120.5 285v3M121.5 288v3M122.5 291v1M122.5 292v2M123.5 294v2M124.5 296v3M125.5 299v3M126.5 302v2M127.5 304v1M127.5 305v1M128.5 306v2M129.5 308v2M130.5 310v2M131.5 312v2M132.5 314v2M133.5 316v2M134.5 318v2M135.5 320v2M136.5 322v2M137.5 324v2M138.5 326v2M139.5 328v2M140.5 330v2M141.5 332v2M142.5 334v1M143.5 335v2M144.5 337v2M145.5 339v2M146.5 341v2M147.5 343v1M148.5 344v2M149.5 346v1M150.5 347v1M151.5 348v2M152 350.5h3M155 351.5h2M157.5 350v2M158.5 348v2M159.5 346v2M160.5 344v2M161.5 342v2M162.5 341v1M163.5 340v1M164.5 338v2M165.5 337v1M166.5 336v1M167.5 335v1M168.5 333v2M169.5 332v1M170.5 331v1M171.5 329v2M172 328.5h1M173 327.5h1M174 326.5h1M175 325.5h1M176 324.5h1M177 323.5h5M182 323.5h3M185 322.5h2M187 322.5h2M189 321.5h2M191 320.5h1M192 320.5h2M194 319.5h2M196 318.5h1M197 318.5h2M199 317.5h2M201 316.5h1M202 316.5h3M205 315.5h2M207 315.5h3M210 316.5h2M212 316.5h3M215 317.5h2M217 317.5h3M220 318.5h2M222 318.5h3M225 319.5h2M227 319.5h2M229 320.5h2M231 321.5h1M232 321.5h5M237 321.5h3M240 320.5h2M242 320.5h3M245 321.5h2M247 321.5h5M252 321.5h5M257 321.5h5M262 321.5h2M264 320.5h2M266 319.5h1M267 319.5h1M268 318.5h1M269 317.5h2M271 316.5h1M272 315.5h1M273 314.5h2M275 313.5h2M277 312.5h1M278 311.5h2M280 310.5h2M282 309.5h2M284 308.5h2M286 307.5h1M287 307.5h2M289 306.5h2M291 305.5h1M292 305.5h5M297 305.5h5M302 305.5h5M307 305.5h3M310 306.5h2M312 306.5h2M314 307.5h2M316 308.5h1M317 308.5h1M318 309.5h1M319 310.5h2M321 311.5h1M322 312.5h2M324 313.5h2M326 314.5h1M327 314.5h1M328 315.5h2M330 316.5h2M332 317.5h1M333 318.5h2M335 319.5h2M337 320.5h1M338 321.5h1M339 322.5h2M341 323.5h1M342 324.5h2M344 325.5h2M346 326.5h1M347 326.5h3M350 327.5h2M352 327.5h5M357 327.5h3M360 326.5h2M362 326.5h3M365 325.5h2M367 325.5h3M370 326.5h2M372 326.5h3M375 327.5h2M377 327.5h3M380 328.5h2M382 328.5h5M387 328.5h5M392 328.5h3M395 329.5h2M397 329.5h5M402 329.5h3M405 330.5h2M407 330.5h3M410 331.5h2M412 331.5h3M415 332.5h2M417 332.5h2M419 333.5h2M421 334.5h1M422 334.5h3M425 335.5h2M427 335.5h5M432 335.5h5M437 335.5h3M440 334.5h2M442 334.5h2M444 333.5h2M446 332.5h1M447 332.5h3M450 331.5h2M452 331.5h3M455 330.5h2M457 330.5h3M460 329.5h2M462 329.5h2M464 328.5h2M466 327.5h1M467 327.5h1M468 326.5h1M469 325.5h2M471 324.5h1M472 323.5h1M473 322.5h1M474 321.5h1M475 320.5h1M476 319.5h1M477.5 318v1M478.5 317v1M479.5 315v2M480.5 314v1M481.5 313v1M482 312.5h1M483 311.5h1M484 310.5h1M485 309.5h1M486 308.5h1M487 307.5h1M488 306.5h1M489 305.5h2M491 304.5h1M492 303.5h1M493 302.5h1M494 301.5h2M496 300.5h1M497 299.5h1M498 298.5h1M499 297.5h2M501 296.5h1M502 295.5h1M503 294.5h1M504 293.5h1M505 292.5h1M506 291.5h1M507 290.5h1M508 289.5h2M510 288.5h2M512 287.5h3M515 286.5h2M517 286.5h2M519 285.5h2M521 284.5h1M522 284.5h3M525 283.5h2M527 283.5h3M530 284.5h2M532 284.5h5M537 284.5h3M540 285.5h2M542 285.5h3M545 284.5h2M547 284.5h3M550 285.5h2M552 285.5h5M557 285.5h2M559 284.5h2M561 283.5h1M562 283.5h3M565 284.5h2M567 284.5h3M570 285.5h2M572 285.5h5M577 285.5h3M580 286.5h2M582 286.5h1M583 287.5h2M585 288.5h2M587 289.5h1M588 290.5h2M590 291.5h2M592.5 292v1M593.5 293v2M594.5 295v2M595.5 297v1M596.5 298v2M597.5 300v1M598.5 301v2M599.5 303v2M600.5 305v2M601.5 307v2M602.5 309v2M603.5 311v2M604.5 313v2M605.5 315v2M606.5 317v2M607.5 319v1M607.5 320v1M608.5 321v2M609.5 323v2M610.5 325v2M611.5 327v2M612.5 329v1M613.5 330v2M614.5 332v2M615.5 334v2M616.5 336v2M617.5 338v1M618.5 339v2M619.5 341v2M620.5 343v1M621.5 344v2M622.5 346v1M623.5 347v2M624.5 349v2M625.5 351v1M626.5 352v2M627.5 354v1M628.5 355v2M629.5 357v1M630.5 358v1M631.5 359v2M632 361.5h1M633 362.5h1M634 363.5h1M635 364.5h1M636 365.5h1M637.5 366v1M638.5 367v2M639.5 369v1M640.5 370v1M641.5 371v2M642 373.5h1M643 374.5h1M644 375.5h1M645 376.5h1M646 377.5h1M647 378.5h1M648 379.5h1M649 380.5h1M650 381.5h1M651 382.5h1M652 383.5h2M654 384.5h2M656 385.5h1M657 385.5h1M658 386.5h2M660 387.5h2M662 388.5h2M664 389.5h2M666 390.5h1M667 390.5h2M669 391.5h2M671 392.5h1M672 392.5h2M674 393.5h2M676 394.5h1M677 394.5h2M679 395.5h2M681 396.5h1M682 396.5h3M685 397.5h2M687 397.5h2M689 396.5h2M691 395.5h1M692 395.5h2M694 394.5h2M696 393.5h1M697 393.5h3M700 392.5h2M702 392.5h3M705 393.5h2M707 393.5h3M710 392.5h2M712 392.5h5M717 392.5h5M722 392.5h1M723 393.5h2M725 394.5h2M727 395.5h1M728 396.5h2M730 397.5h2M732 398.5h1M733 399.5h1M734 400.5h1M735 401.5h1M736 402.5h1M737 403.5h1M738 404.5h2M740 405.5h2M742 406.5h3M745 407.5h2M747 407.5h3M750 408.5h2M752 408.5h2M754 407.5h2M756 406.5h1M757 406.5h2M759 407.5h2M761 408.5h1M762 408.5h1M763 409.5h1M764 410.5h2M766 411.5h1M767 412.5h3M770 413.5h2M772 413.5h3M775 412.5h2M777 412.5h5M782 412.5h2M784 411.5h2M786 410.5h1M787 410.5h3M790 411.5h2M792 411.5h1M793 412.5h1M794 413.5h2M796 414.5h1M797 415.5h1M798 416.5h2M800 417.5h2M802 418.5h2M804 419.5h2M806 420.5h1M807 420.5h5M812 420.5h1M813 419.5h1M814 418.5h2M816 417.5h1M817 416.5h3M820 415.5h2M822 415.5h2M824 414.5h2M826 413.5h1M827 413.5h3M830 412.5h2M832 412.5h3M835 411.5h2M837 411.5h2M839 410.5h2M841 409.5h1M842 409.5h1M843 408.5h2M845 407.5h2M847 406.5h1M848 405.5h2M850 404.5h2M852 403.5h3M855 402.5h2M857 402.5h1M858 401.5h2M860 400.5h2M862 399.5h3M865 400.5h2M867 400.5h3M870 399.5h2M872 399.5h3M875 398.5h2M877 398.5h2M879 397.5h2M881 396.5h1M882 396.5h3M885 395.5h2M887 395.5h3M890 394.5h2M892 394.5h3M895 395.5h2M897 395.5h3M900 394.5h2M902 394.5h3M905 393.5h2M907 393.5h2M909 394.5h2M911 395.5h1M912 395.5h5M917 395.5h2M919 396.5h2M921 397.5h1M922 397.5h1M923 398.5h1M924 399.5h2M926 400.5h1M927 401.5h1M928 402.5h1M929 403.5h2M931 404.5h1M932 405.5h1M933 406.5h1M934 407.5h1M935 408.5h1M936 409.5h1M937 410.5h1M938 411.5h2M940 412.5h2M942 413.5h2M944 414.5h2M946 415.5h1M947 415.5h1M948 416.5h2M950 417.5h2M952 418.5h1M953 419.5h1M954 420.5h2M956 421.5h1M957 422.5h1M958 423.5h2M960 424.5h2M962.5 425v1M963.5 426v1M964.5 427v2M965.5 429v1M966.5 430v1M967 431.5h1M968 432.5h2M970 433.5h2M972 434.5h2M974 435.5h2M976 436.5h1M977 436.5h3M980 437.5h2M982 437.5h3M985 438.5h2M987 438.5h3M990 437.5h2M992 437.5h2M994 436.5h2M996 435.5h1M997 435.5h2M999 434.5h2M1001 433.5h1M1002 433.5h1M1003 432.5h2M1005 431.5h2M1007 430.5h1M1008 429.5h2M1010 428.5h2M1012 427.5h1M1013 426.5h1M1014 425.5h1M1015 424.5h1M1016 423.5h1M1017 422.5h1M1018 421.5h1M1019 420.5h2M1021 419.5h1M1022 418.5h1M1023 417.5h2M1025 416.5h2M1027 415.5h3M1030 414.5h2M1032 414.5h3M1035 413.5h2M1037 413.5h2M1039 414.5h2M1041 415.5h1M1042 415.5h1M1043 416.5h2M1045 417.5h2M1047 418.5h1M1048 419.5h2M1050 420.5h2M1052 421.5h1M1053 422.5h2M1055 423.5h2M1057 424.5h2M1059 425.5h2M1061 426.5h1M1062 426.5h1M1063 427.5h2M1065 428.5h2M1067 429.5h5M1072 429.5h2M1074 430.5h2M1076 431.5h1M1077 431.5h2M1079 432.5h2M1081 433.5h1M1082 433.5h3M1085 434.5h2M1087 434.5h3M1090 433.5h2M1092 433.5h3M1095 432.5h2M1097 432.5h2M1099 431.5h2M1101 430.5h1M1102 430.5h3M1105 429.5h2M1107 429.5h3M1110 430.5h2M1112 430.5h3M1115 429.5h2M1117 429.5h3M1120 430.5h2M1122 430.5h5M1127 430.5h5M1132 430.5h3M1135 429.5h2M1137 429.5h3M1140 428.5h2M1142 428.5h3M1145 427.5h2M1147 427.5h2M1149 426.5h2M1151 425.5h1M1152 425.5h1M1153 424.5h1M1154 423.5h2M1156 422.5h1M1157 421.5h1M1158 420.5h2M1160 419.5h2M1162 418.5h1M1163 417.5h1M1164 416.5h2M1166 415.5h1M1167 414.5h1M1168 413.5h1M1169 412.5h1M1170 411.5h1M1171 410.5h1M1172 409.5h1M1173 408.5h2M1175 407.5h2M1177 406.5h1M1178 405.5h2M1180 404.5h2M1182 403.5h1M1183 402.5h1M1184 401.5h2M1186 400.5h1M1187 399.5h2M1189 398.5h2M1191 397.5h1M1192 397.5h2M1194 396.5h2M1196 395.5h1M1197 395.5h3M1200 394.5h2M1202 394.5h3M1205 393.5h2M1207 393.5h2M1209 392.5h2M1211 391.5h1M1212 391.5h3M1215 390.5h2M1217 390.5h3M1220 389.5h2M1222 389.5h3M1225 388.5h2M1227 388.5h2M1229 387.5h2M1231 386.5h1M1232 386.5h1M1233 385.5h2M1235 384.5h2M1237 383.5h1M1238 382.5h1M1239 381.5h2M1241 380.5h1M1242 379.5h1M1243 378.5h2M1245 377.5h2M1247 376.5h1M1248 375.5h1M1249 374.5h1M1250 373.5h1M1251 372.5h1M1252 371.5h1M1253 370.5h1M1254 369.5h1M1255 368.5h1M1256 367.5h1M1257 366.5h1M1258 365.5h1M1259 364.5h1M1260 363.5h1M1261 362.5h1M1262.5 361v1M1263.5 360v1M1264.5 358v2M1265.5 357v1M1266.5 356v1M1267 355.5h1M1268 354.5h1M1269 353.5h1M1270 352.5h1M1271 351.5h1M1272.5 350v1M1273.5 348v2M1274.5 347v1M1275.5 346v1M1276.5 344v2M1277.5 343v1M1278.5 342v1M1279.5 340v2M1280.5 339v1M1281.5 338v1M1282.5 337v1M1283.5 336v1M1284.5 334v2M1285.5 333v1M1286.5 332v1M1287 331.5h1M1288 330.5h1M1289 329.5h2M1291 328.5h1M1292 327.5h1M1293 326.5h1M1294 325.5h2M1296 324.5h1M1297 323.5h1M1298 322.5h1M1299 321.5h2M1301 320.5h1M1302 319.5h2M1304 318.5h2M1306 317.5h1M1307 317.5h2M1309 316.5h2M1311 315.5h1M1312 315.5h5M1317 315.5h3M1320 314.5h2M1322 314.5h1M1323 313.5h2M1325 312.5h2M1327 311.5h2M1329 310.5h2M1331 309.5h1M1332 309.5h2M1334 308.5h2M1336 307.5h1M1337 307.5h1M1338 306.5h2M1340 305.5h2M1342 304.5h1M1343 303.5h1M1344 302.5h2M1346 301.5h1M1347 300.5h1M1348 299.5h2M1350 298.5h2M1352 297.5h1M1353 296.5h1M1354 295.5h1M1355 294.5h1M1356 293.5h1M1357 292.5h1M1358 291.5h1M1359 290.5h2M1361 289.5h1M1362 288.5h1M1363 287.5h1M1364 286.5h1M1365 285.5h1M1366 284.5h1M1367 283.5h2M1369 282.5h2M1371 281.5h1M1372 281.5h5M1377 281.5h1M1378 280.5h1M1379 279.5h2M1381 278.5h1M1382 277.5h1M1383 276.5h2M1385 275.5h2M1387 274.5h5M1392 274.5h5M1397 274.5h5M1402 274.5h3M1405 275.5h2M1407 275.5h1M1408 276.5h2M1410 277.5h2M1412 278.5h1M1413 279.5h2M1415 280.5h2M1417 281.5h1M1418 282.5h2M1420 283.5h2M1422 284.5h1M1423 285.5h1M1424 286.5h2M1426 287.5h1M1427.5 288v1M1428.5 289v2M1429.5 291v1M1430.5 292v1M1431.5 293v2M1432.5 295v1M1433.5 296v2M1434.5 298v1M1435.5 299v1M1436.5 300v2M1437 302.5h1M1438 303.5h1M1439 304.5h1M1440 305.5h1M1441 306.5h1M1442 307.5h1M1443 308.5h1M1444 309.5h2M1446 310.5h1M1447.5 311v1M1448.5 312v1M1449.5 313v2M1450.5 315v1M1451.5 316v1M1452.5 317v1M1453.5 318v1M1454.5 319v2M1455.5 321v1M1456.5 322v1M1457 323.5h3M1460 324.5h2M1462 324.5h2M1464 325.5h2M1466 326.5h1M1467 326.5h3M1470 327.5h2M1472 327.5h5M1477 327.5h5M1482 327.5h5M1487 327.5h3M1490 326.5h2M1492 326.5h3M1495 327.5h2M1497 327.5h2M1499 328.5h2M1501 329.5h1M1502 329.5h5" fill="none" stroke="#ff9900" stroke-width="1" shape-rendering="crispEdges"/>
</svg>
<svg class="abs" width="1612" height="1000" viewBox="0 0 1612 1000" style="left:0;top:0" font-size="14" font-family="Liberation Sans, IPAGothic, sans-serif">
<text x="11.5" y="115.0" fill="#000" textLength="92.0" lengthAdjust="spacingAndGlyphs">日経平均(指数)</text>
<text x="108.0" y="115.0" fill="#000" textLength="88.0" lengthAdjust="spacingAndGlyphs">Bollinger_Bands</text>
<text x="200.5" y="115.0" fill="#000" textLength="33.5" lengthAdjust="spacingAndGlyphs">(20,2)</text>
<text x="237.0" y="115.0" fill="#000" textLength="69.0" lengthAdjust="spacingAndGlyphs">2012/05/02</text>
<text x="311.0" y="115.0" fill="#009933" textLength="46.5" lengthAdjust="spacingAndGlyphs">9,555.97</text>
<text x="362.0" y="115.0" fill="#f05000" textLength="47.5" lengthAdjust="spacingAndGlyphs">9,784.36</text>
<text x="414.5" y="115.0" fill="#0060d0" textLength="47.5" lengthAdjust="spacingAndGlyphs">9,327.57</text>
<text x="11.0" y="496.0" fill="#000" textLength="105.0" lengthAdjust="spacingAndGlyphs">MACD_EMA_Signal</text>
<text x="121.0" y="496.0" fill="#000" textLength="48.5" lengthAdjust="spacingAndGlyphs">(12,26,9)</text>
<text x="173.5" y="496.0" fill="#000" textLength="70.0" lengthAdjust="spacingAndGlyphs">2012/05/02</text>
<text x="248.5" y="496.0" fill="#009933" textLength="37.5" lengthAdjust="spacingAndGlyphs">−90.50</text>
<text x="290.5" y="496.0" fill="#f05000" textLength="37.0" lengthAdjust="spacingAndGlyphs">−70.75</text>
<text x="332.5" y="496.0" fill="#0000ff" textLength="37.0" lengthAdjust="spacingAndGlyphs">−19.76</text>
<text x="373.5" y="496.0" fill="#ff00ff" textLength="24.5" lengthAdjust="spacingAndGlyphs">0.00</text>
<text x="11.0" y="604.0" fill="#000" textLength="21.0" lengthAdjust="spacingAndGlyphs">RSI</text>
<text x="34.5" y="604.0" fill="#000" textLength="23.0" lengthAdjust="spacingAndGlyphs">(14)</text>
<text x="60.5" y="604.0" fill="#000" textLength="70.0" lengthAdjust="spacingAndGlyphs">2012/05/02</text>
<text x="135.0" y="604.0" fill="#009933" textLength="30.5" lengthAdjust="spacingAndGlyphs">46.39</text>
<text x="169.5" y="604.0" fill="#f05000" textLength="31.0" lengthAdjust="spacingAndGlyphs">30.00</text>
<text x="204.0" y="604.0" fill="#0060d0" textLength="32.0" lengthAdjust="spacingAndGlyphs">70.00</text>
<text x="10.0" y="706.0" fill="#000" textLength="42.0" lengthAdjust="spacingAndGlyphs">乖離度</text>
<text x="56.5" y="706.0" fill="#000" textLength="22.5" lengthAdjust="spacingAndGlyphs">(20)</text>
<text x="82.5" y="706.0" fill="#000" textLength="70.0" lengthAdjust="spacingAndGlyphs">2012/05/02</text>
<text x="157.0" y="706.0" fill="#009933" textLength="30.0" lengthAdjust="spacingAndGlyphs">98.16</text>
<text x="191.0" y="706.0" fill="#f05000" textLength="39.0" lengthAdjust="spacingAndGlyphs">100.00</text>
<text x="11.5" y="785.0" fill="#000" textLength="121.5" lengthAdjust="spacingAndGlyphs">サイコロジカルライン</text>
<text x="138.0" y="785.0" fill="#000" textLength="22.5" lengthAdjust="spacingAndGlyphs">(12)</text>
<text x="163.5" y="785.0" fill="#000" textLength="69.5" lengthAdjust="spacingAndGlyphs">2012/05/02</text>
<text x="238.5" y="785.0" fill="#009933" textLength="29.5" lengthAdjust="spacingAndGlyphs">33.33</text>
<text x="272.5" y="785.0" fill="#f05000" textLength="31.0" lengthAdjust="spacingAndGlyphs">25.00</text>
<text x="308.5" y="785.0" fill="#0060d0" textLength="31.0" lengthAdjust="spacingAndGlyphs">75.00</text>
<text x="11.5" y="888.0" fill="#000" textLength="40.5" lengthAdjust="spacingAndGlyphs">出来高</text>
<text x="56.5" y="888.0" fill="#000" textLength="70.0" lengthAdjust="spacingAndGlyphs">2012/05/02</text>
<text x="130.5" y="888.0" fill="#009933" textLength="73.0" lengthAdjust="spacingAndGlyphs">1,326,580.00</text>
<text x="41.0" y="207.0" fill="#ff0000" textLength="137.0" lengthAdjust="spacingAndGlyphs">10,891.60 (2011/02/17)</text>
<path d="M22.500 200.500H36M22.500 200.500l4-3" stroke="#ff0000" fill="none"/>
<text x="991.5" y="468.5" fill="#000090" textLength="130.5" lengthAdjust="spacingAndGlyphs">8,135.79 (2011/11/25)</text>
<path d="M972 461.500H985" stroke="#000090" fill="none" stroke-width="1.500"/>
<text x="1398.0" y="131.0" fill="#ff0000" font-size="13" textLength="62.0" lengthAdjust="spacingAndGlyphs">H: −13.88%</text>
<text x="1470.0" y="131.0" fill="#000090" font-size="13" textLength="52.0" lengthAdjust="spacingAndGlyphs">L: 15.30%</text>
<text x="1536.0" y="196.0" fill="#000" textLength="53.5" lengthAdjust="spacingAndGlyphs">11000.00</text>
<text x="1536.0" y="290.0" fill="#000" textLength="53.5" lengthAdjust="spacingAndGlyphs">10000.00</text>
<text x="1536.0" y="383.0" fill="#000" textLength="46.5" lengthAdjust="spacingAndGlyphs">9000.00</text>
<text x="1536.0" y="476.0" fill="#000" textLength="46.5" lengthAdjust="spacingAndGlyphs">8000.00</text>
<text x="1536.0" y="515.5" fill="#000" textLength="38.5" lengthAdjust="spacingAndGlyphs">200.00</text>
<text x="1536.0" y="538.5" fill="#000" textLength="25.0" lengthAdjust="spacingAndGlyphs">0.00</text>
<text x="1536.0" y="561.5" fill="#000" textLength="47.0" lengthAdjust="spacingAndGlyphs">−200.00</text>
<text x="1536.0" y="584.0" fill="#000" textLength="47.0" lengthAdjust="spacingAndGlyphs">−400.00</text>
<text x="1536.0" y="610.0" fill="#000" textLength="38.5" lengthAdjust="spacingAndGlyphs">100.00</text>
<text x="1536.0" y="656.5" fill="#000" textLength="32.0" lengthAdjust="spacingAndGlyphs">50.00</text>
<text x="1536.0" y="730.5" fill="#000" textLength="38.5" lengthAdjust="spacingAndGlyphs">100.00</text>
<text x="1536.0" y="802.5" fill="#000" textLength="32.0" lengthAdjust="spacingAndGlyphs">80.00</text>
<text x="1536.0" y="824.5" fill="#000" textLength="32.0" lengthAdjust="spacingAndGlyphs">60.00</text>
<text x="1536.0" y="846.5" fill="#000" textLength="32.0" lengthAdjust="spacingAndGlyphs">40.00</text>
<text x="1536.0" y="868.0" fill="#000" textLength="32.0" lengthAdjust="spacingAndGlyphs">20.00</text>
<text x="1536.0" y="909.0" fill="#000" textLength="53.5" lengthAdjust="spacingAndGlyphs">50000.00</text>
<rect x="1537" y="322" width="45" height="14" fill="#ff0000"/>
<text x="1537.5" y="334.0" fill="#fff" textLength="44.0" lengthAdjust="spacingAndGlyphs">9380.25</text>
<path d="M1538 346h7l-3.500-4z" fill="#ff0000"/>
<text x="1550.0" y="349.0" fill="#ff0000" textLength="31.5" lengthAdjust="spacingAndGlyphs">29.30</text>
<text x="1538.5" y="363.0" fill="#ff0000" textLength="31.0" lengthAdjust="spacingAndGlyphs">0.31%</text>
<rect x="1530.500" y="938.500" width="29" height="15" fill="#fff" stroke="#000"/>
<text x="1532.0" y="951.0" fill="#000" textLength="26.0" lengthAdjust="spacingAndGlyphs">x100</text>
<g font-size="12.600" font-family="Liberation Sans, sans-serif">
<text x="10.500" y="971.500" font-weight="bold">11</text>
<text x="63.0" y="971.500" font-weight="bold" text-anchor="middle">M</text>
<text x="173.0" y="971.500" font-weight="bold" text-anchor="middle">A</text>
<text x="273.0" y="971.500" font-weight="bold" text-anchor="middle">M</text>
<text x="368.0" y="971.500" font-weight="bold" text-anchor="middle">J</text>
<text x="478.0" y="971.500" font-weight="bold" text-anchor="middle">J</text>
<text x="578.0" y="971.500" font-weight="bold" text-anchor="middle">A</text>
<text x="693.0" y="971.500" font-weight="bold" text-anchor="middle">S</text>
<text x="793.0" y="971.500" font-weight="bold" text-anchor="middle">O</text>
<text x="893.0" y="971.500" font-weight="bold" text-anchor="middle">N</text>
<text x="993.0" y="971.500" font-weight="bold" text-anchor="middle">D</text>
<text x="1098.0" y="971.500" font-weight="bold" text-anchor="middle">12</text>
<text x="1193.0" y="971.500" font-weight="bold" text-anchor="middle">F</text>
<text x="1298.0" y="971.500" font-weight="bold" text-anchor="middle">M</text>
<text x="1403.0" y="971.500" font-weight="bold" text-anchor="middle">A</text>
<text x="81.0" y="971.500" text-anchor="middle">07</text>
<text x="106.0" y="971.500" text-anchor="middle">14</text>
<text x="131.0" y="971.500" text-anchor="middle">22</text>
<text x="151.0" y="971.500" text-anchor="middle">28</text>
<text x="201.0" y="971.500" text-anchor="middle">11</text>
<text x="226.0" y="971.500" text-anchor="middle">18</text>
<text x="251.0" y="971.500" text-anchor="middle">25</text>
<text x="306.0" y="971.500" text-anchor="middle">16</text>
<text x="331.0" y="971.500" text-anchor="middle">23</text>
<text x="381.0" y="971.500" text-anchor="middle">06</text>
<text x="406.0" y="971.500" text-anchor="middle">13</text>
<text x="431.0" y="971.500" text-anchor="middle">20</text>
<text x="456.0" y="971.500" text-anchor="middle">27</text>
<text x="506.0" y="971.500" text-anchor="middle">11</text>
<text x="531.0" y="971.500" text-anchor="middle">19</text>
<text x="551.0" y="971.500" text-anchor="middle">25</text>
<text x="601.0" y="971.500" text-anchor="middle">08</text>
<text x="626.0" y="971.500" text-anchor="middle">15</text>
<text x="651.0" y="971.500" text-anchor="middle">22</text>
<text x="676.0" y="971.500" text-anchor="middle">29</text>
<text x="726.0" y="971.500" text-anchor="middle">12</text>
<text x="751.0" y="971.500" text-anchor="middle">20</text>
<text x="766.0" y="971.500" text-anchor="middle">26</text>
<text x="816.0" y="971.500" text-anchor="middle">11</text>
<text x="836.0" y="971.500" text-anchor="middle">17</text>
<text x="861.0" y="971.500" text-anchor="middle">24</text>
<text x="906.0" y="971.500" text-anchor="middle">07</text>
<text x="931.0" y="971.500" text-anchor="middle">14</text>
<text x="956.0" y="971.500" text-anchor="middle">21</text>
<text x="976.0" y="971.500" text-anchor="middle">28</text>
<text x="1026.0" y="971.500" text-anchor="middle">12</text>
<text x="1051.0" y="971.500" text-anchor="middle">19</text>
<text x="1071.0" y="971.500" text-anchor="middle">26</text>
<text x="1111.0" y="971.500" text-anchor="middle">10</text>
<text x="1131.0" y="971.500" text-anchor="middle">16</text>
<text x="1156.0" y="971.500" text-anchor="middle">23</text>
<text x="1206.0" y="971.500" text-anchor="middle">06</text>
<text x="1231.0" y="971.500" text-anchor="middle">13</text>
<text x="1256.0" y="971.500" text-anchor="middle">20</text>
<text x="1281.0" y="971.500" text-anchor="middle">27</text>
<text x="1331.0" y="971.500" text-anchor="middle">12</text>
<text x="1356.0" y="971.500" text-anchor="middle">19</text>
<text x="1376.0" y="971.500" text-anchor="middle">26</text>
<text x="1426.0" y="971.500" text-anchor="middle">09</text>
<text x="1451.0" y="971.500" text-anchor="middle">16</text>
<text x="1476.0" y="971.500" text-anchor="middle">23</text>
</g>
</svg>
<div class="abs" style="left:11px;top:977px;width:1592px;height:13px;background:repeating-conic-gradient(#d4d0c8 0% 25%,#fff 0% 50%) 0 0/2px 2px"></div>
<div class="abs" style="left:11px;top:977px;width:34px;height:13px;background:#d4d0c8"></div>
<div class="abs" style="left:16px;top:981px;width:24px;height:5px;border-top:1px solid #808080;border-bottom:1px solid #808080;box-shadow:0 1px 0 #fff"></div>
<div class="abs" style="left:46px;top:977px;width:15px;height:13px;background:#d4d0c8;border:1px solid #fff;border-right-color:#404040;border-bottom-color:#404040"><svg width="13" height="11" viewBox="0 0 13 11"><path d="M8 2v7l-4-3.500z" fill="#000"/></svg></div>
<div class="abs" style="left:61px;top:977px;width:15px;height:13px;background:#d4d0c8;border:1px solid #fff;border-right-color:#404040;border-bottom-color:#404040"></div>
<div class="abs" style="left:1480px;top:977px;width:123px;height:13px;background:#d4d0c8"></div>
<div class="abs" style="left:1480px;top:976px;width:15px;height:14px;background:#d4d0c8;border:1px solid #fff;border-right-color:#404040;border-bottom-color:#404040"><svg width="13" height="12" viewBox="0 0 13 12"><path d="M5 2.500v7l4-3.500z" fill="#000"/></svg></div>
<svg class="abs" style="left:1496px;top:977px" width="108" height="13" viewBox="0 0 108 13"><path d="M1 6.500l6-5.500v11zM15 6.500l-6-5.500v11z" fill="#000"/><path d="M20 1v11l6-5.500zM32 1v11l-6-5.500z" fill="#000"/><circle cx="44" cy="6.500" r="5.300" fill="#fff" stroke="#000" stroke-width="1.300"/><path d="M40.500 6.500h7M44 3v7" stroke="#000" stroke-width="1.400"/><circle cx="62" cy="6.500" r="5.300" fill="#e8e6e2" stroke="#a8a49c" stroke-width="1.300"/><path d="M58.500 6.500h7" stroke="#a8a49c" stroke-width="1.400"/><path d="M74.500 1.500h10v10h-10zM79.500 1.500v10M74.500 6.500h10" fill="none" stroke="#a8a49c" stroke-width="1.200"/><rect x="92.500" y="1.500" width="10" height="10" fill="#fff" stroke="#000" stroke-width="1.300"/><path d="M92.500 1.500l10 10M102.500 1.500l-10 10" stroke="#000" stroke-width="1.100"/></svg>

<svg class="abs" style="left:0;top:990px" width="1612" height="10" viewBox="0 0 1612 10" shape-rendering="crispEdges"><rect x="6" y="0" width="1600" height="1" fill="#fff"/><rect x="7" y="1" width="1598" height="2" fill="#e0e0e0"/><rect x="6" y="3" width="1600" height="1" fill="#fff"/><rect x="5" y="4" width="1602" height="1" fill="#000"/><rect x="4" y="5" width="1604" height="1" fill="#c8c8c8"/><rect x="3" y="6" width="1606" height="1" fill="#585858"/><rect x="1" y="7" width="1610" height="2" fill="#d8d8d8"/><rect x="0" y="9" width="1612" height="1" fill="#505050"/></svg>
</body>
</html>
